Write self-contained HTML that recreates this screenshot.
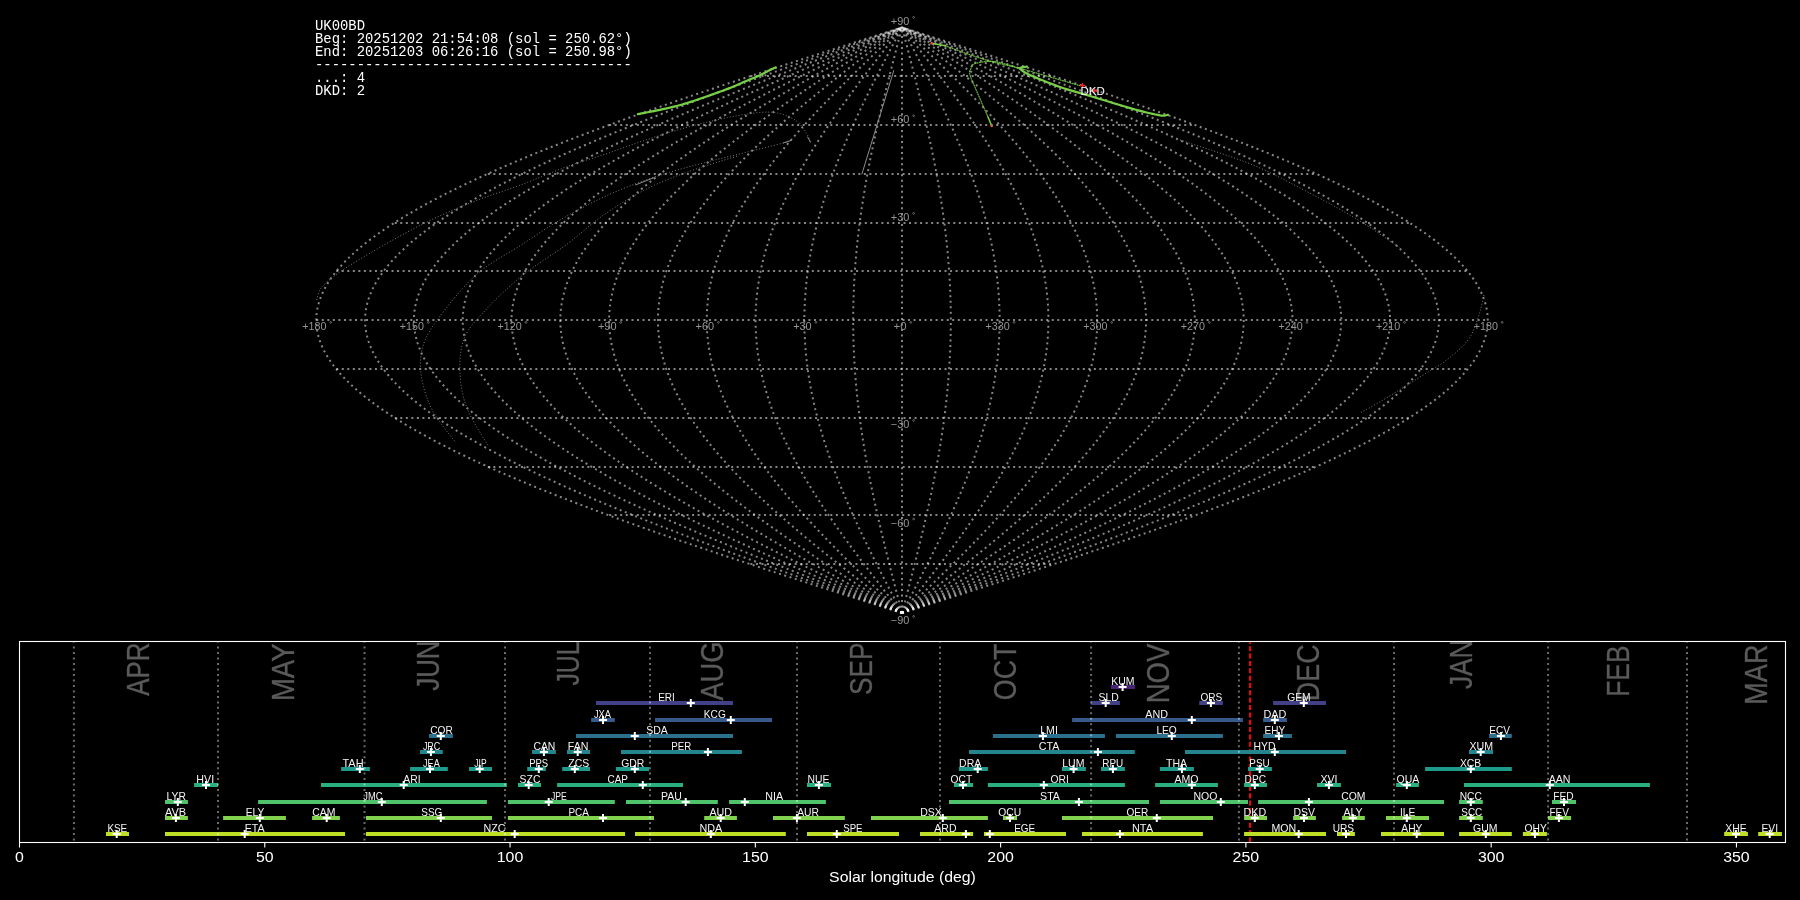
<!DOCTYPE html><html><head><meta charset="utf-8"><style>html,body{margin:0;padding:0;background:#000;width:1800px;height:900px;overflow:hidden}svg{display:block}</style></head><body>
<svg style="will-change:transform" width="1800" height="900" viewBox="0 0 1800 900">
<rect width="1800" height="900" fill="#000"/>
<g fill="none" stroke="#fff" stroke-opacity="0.52" stroke-width="2" stroke-dasharray="2 3.53">
<path d="M902 613.06 L907.11 611.43 L912.22 609.81 L917.33 608.18 L922.44 606.55 L927.55 604.92 L932.65 603.3 L937.76 601.67 L942.86 600.04 L947.96 598.42 L953.05 596.79 L958.14 595.16 L963.22 593.54 L968.31 591.91 L973.38 590.28 L978.45 588.65 L983.52 587.03 L988.57 585.4 L993.63 583.77 L998.67 582.15 L1003.71 580.52 L1008.74 578.89 L1013.76 577.27 L1018.77 575.64 L1023.78 574.01 L1028.77 572.38 L1033.76 570.76 L1038.73 569.13 L1043.7 567.5 L1048.65 565.88 L1053.6 564.25 L1058.53 562.62 L1063.45 561 L1068.35 559.37 L1073.25 557.74 L1078.13 556.12 L1083 554.49 L1087.85 552.86 L1092.69 551.23 L1097.52 549.61 L1102.33 547.98 L1107.12 546.35 L1111.9 544.73 L1116.67 543.1 L1121.41 541.47 L1126.15 539.85 L1130.86 538.22 L1135.56 536.59 L1140.23 534.96 L1144.89 533.34 L1149.54 531.71 L1154.16 530.08 L1158.76 528.46 L1163.35 526.83 L1167.91 525.2 L1172.46 523.58 L1176.98 521.95 L1181.48 520.32 L1185.96 518.69 L1190.42 517.07 L1194.86 515.44 L1199.28 513.81 L1203.67 512.19 L1208.04 510.56 L1212.38 508.93 L1216.71 507.3 L1221.01 505.68 L1225.28 504.05 L1229.53 502.42 L1233.76 500.8 L1237.96 499.17 L1242.13 497.54 L1246.28 495.92 L1250.4 494.29 L1254.5 492.66 L1258.56 491.03 L1262.61 489.41 L1266.62 487.78 L1270.61 486.15 L1274.56 484.53 L1278.49 482.9 L1282.39 481.27 L1286.27 479.65 L1290.11 478.02 L1293.92 476.39 L1297.71 474.76 L1301.46 473.14 L1305.18 471.51 L1308.88 469.88 L1312.54 468.26 L1316.17 466.63 L1319.77 465 L1323.33 463.38 L1326.87 461.75 L1330.37 460.12 L1333.84 458.5 L1337.27 456.87 L1340.68 455.24 L1344.05 453.61 L1347.38 451.99 L1350.69 450.36 L1353.96 448.73 L1357.19 447.11 L1360.39 445.48 L1363.55 443.85 L1366.68 442.23 L1369.78 440.6 L1372.84 438.97 L1375.86 437.34 L1378.84 435.72 L1381.79 434.09 L1384.71 432.46 L1387.58 430.84 L1390.42 429.21 L1393.23 427.58 L1395.99 425.95 L1398.72 424.33 L1401.41 422.7 L1404.06 421.07 L1406.67 419.45 L1409.25 417.82 L1411.78 416.19 L1414.28 414.57 L1416.74 412.94 L1419.16 411.31 L1421.54 409.69 L1423.88 408.06 L1426.18 406.43 L1428.44 404.8 L1430.66 403.18 L1432.84 401.55 L1434.98 399.92 L1437.08 398.3 L1439.14 396.67 L1441.16 395.04 L1443.13 393.41 L1445.07 391.79 L1446.96 390.16 L1448.82 388.53 L1450.63 386.91 L1452.4 385.28 L1454.12 383.65 L1455.81 382.03 L1457.45 380.4 L1459.05 378.77 L1460.61 377.14 L1462.13 375.52 L1463.6 373.89 L1465.03 372.26 L1466.42 370.64 L1467.76 369.01 L1469.06 367.38 L1470.32 365.76 L1471.54 364.13 L1472.71 362.5 L1473.84 360.88 L1474.92 359.25 L1475.96 357.62 L1476.96 355.99 L1477.91 354.37 L1478.82 352.74 L1479.69 351.11 L1480.51 349.49 L1481.29 347.86 L1482.02 346.23 L1482.71 344.61 L1483.35 342.98 L1483.95 341.35 L1484.51 339.72 L1485.02 338.1 L1485.49 336.47 L1485.91 334.84 L1486.29 333.22 L1486.63 331.59 L1486.92 329.96 L1487.16 328.33 L1487.36 326.71 L1487.52 325.08 L1487.63 323.45 L1487.7 321.83 L1487.72 320.2 L1487.7 318.57 L1487.63 316.95 L1487.52 315.32 L1487.36 313.69 L1487.16 312.06 L1486.92 310.44 L1486.63 308.81 L1486.29 307.18 L1485.91 305.56 L1485.49 303.93 L1485.02 302.3 L1484.51 300.68 L1483.95 299.05 L1483.35 297.42 L1482.71 295.79 L1482.02 294.17 L1481.29 292.54 L1480.51 290.91 L1479.69 289.29 L1478.82 287.66 L1477.91 286.03 L1476.96 284.41 L1475.96 282.78 L1474.92 281.15 L1473.84 279.52 L1472.71 277.9 L1471.54 276.27 L1470.32 274.64 L1469.06 273.02 L1467.76 271.39 L1466.42 269.76 L1465.03 268.14 L1463.6 266.51 L1462.13 264.88 L1460.61 263.25 L1459.05 261.63 L1457.45 260 L1455.81 258.37 L1454.12 256.75 L1452.4 255.12 L1450.63 253.49 L1448.82 251.87 L1446.96 250.24 L1445.07 248.61 L1443.13 246.98 L1441.16 245.36 L1439.14 243.73 L1437.08 242.1 L1434.98 240.48 L1432.84 238.85 L1430.66 237.22 L1428.44 235.6 L1426.18 233.97 L1423.88 232.34 L1421.54 230.71 L1419.16 229.09 L1416.74 227.46 L1414.28 225.83 L1411.78 224.21 L1409.25 222.58 L1406.67 220.95 L1404.06 219.33 L1401.41 217.7 L1398.72 216.07 L1395.99 214.44 L1393.23 212.82 L1390.42 211.19 L1387.58 209.56 L1384.71 207.94 L1381.79 206.31 L1378.84 204.68 L1375.86 203.06 L1372.84 201.43 L1369.78 199.8 L1366.68 198.17 L1363.55 196.55 L1360.39 194.92 L1357.19 193.29 L1353.96 191.67 L1350.69 190.04 L1347.38 188.41 L1344.05 186.79 L1340.68 185.16 L1337.27 183.53 L1333.84 181.91 L1330.37 180.28 L1326.87 178.65 L1323.33 177.02 L1319.77 175.4 L1316.17 173.77 L1312.54 172.14 L1308.88 170.52 L1305.18 168.89 L1301.46 167.26 L1297.71 165.63 L1293.92 164.01 L1290.11 162.38 L1286.27 160.75 L1282.39 159.13 L1278.49 157.5 L1274.56 155.87 L1270.61 154.25 L1266.62 152.62 L1262.61 150.99 L1258.56 149.36 L1254.5 147.74 L1250.4 146.11 L1246.28 144.48 L1242.13 142.86 L1237.96 141.23 L1233.76 139.6 L1229.53 137.98 L1225.28 136.35 L1221.01 134.72 L1216.71 133.09 L1212.38 131.47 L1208.04 129.84 L1203.67 128.21 L1199.28 126.59 L1194.86 124.96 L1190.42 123.33 L1185.96 121.71 L1181.48 120.08 L1176.98 118.45 L1172.46 116.82 L1167.91 115.2 L1163.35 113.57 L1158.76 111.94 L1154.16 110.32 L1149.54 108.69 L1144.89 107.06 L1140.23 105.44 L1135.56 103.81 L1130.86 102.18 L1126.15 100.55 L1121.41 98.93 L1116.67 97.3 L1111.9 95.67 L1107.12 94.05 L1102.33 92.42 L1097.52 90.79 L1092.69 89.17 L1087.85 87.54 L1083 85.91 L1078.13 84.28 L1073.25 82.66 L1068.35 81.03 L1063.45 79.4 L1058.53 77.78 L1053.6 76.15 L1048.65 74.52 L1043.7 72.9 L1038.73 71.27 L1033.76 69.64 L1028.77 68.01 L1023.78 66.39 L1018.77 64.76 L1013.76 63.13 L1008.74 61.51 L1003.71 59.88 L998.67 58.25 L993.63 56.63 L988.57 55 L983.52 53.37 L978.45 51.75 L973.38 50.12 L968.31 48.49 L963.22 46.86 L958.14 45.24 L953.05 43.61 L947.96 41.98 L942.86 40.36 L937.76 38.73 L932.65 37.1 L927.55 35.47 L922.44 33.85 L917.33 32.22 L912.22 30.59 L907.11 28.97 L902 27.34"/>
<path d="M902 613.06 L906.69 611.43 L911.37 609.81 L916.05 608.18 L920.74 606.55 L925.42 604.92 L930.1 603.3 L934.78 601.67 L939.45 600.04 L944.13 598.42 L948.79 596.79 L953.46 595.16 L958.12 593.54 L962.78 591.91 L967.43 590.28 L972.08 588.65 L976.72 587.03 L981.36 585.4 L985.99 583.77 L990.62 582.15 L995.23 580.52 L999.84 578.89 L1004.45 577.27 L1009.04 575.64 L1013.63 574.01 L1018.21 572.38 L1022.78 570.76 L1027.34 569.13 L1031.89 567.5 L1036.43 565.88 L1040.96 564.25 L1045.48 562.62 L1049.99 561 L1054.49 559.37 L1058.98 557.74 L1063.45 556.12 L1067.91 554.49 L1072.36 552.86 L1076.8 551.23 L1081.22 549.61 L1085.63 547.98 L1090.03 546.35 L1094.41 544.73 L1098.78 543.1 L1103.13 541.47 L1107.47 539.85 L1111.79 538.22 L1116.09 536.59 L1120.38 534.96 L1124.65 533.34 L1128.91 531.71 L1133.15 530.08 L1137.37 528.46 L1141.57 526.83 L1145.75 525.2 L1149.92 523.58 L1154.06 521.95 L1158.19 520.32 L1162.3 518.69 L1166.39 517.07 L1170.45 515.44 L1174.5 513.81 L1178.53 512.19 L1182.53 510.56 L1186.52 508.93 L1190.48 507.3 L1194.42 505.68 L1198.34 504.05 L1202.24 502.42 L1206.11 500.8 L1209.96 499.17 L1213.79 497.54 L1217.59 495.92 L1221.37 494.29 L1225.12 492.66 L1228.85 491.03 L1232.55 489.41 L1236.23 487.78 L1239.89 486.15 L1243.52 484.53 L1247.12 482.9 L1250.7 481.27 L1254.24 479.65 L1257.77 478.02 L1261.26 476.39 L1264.73 474.76 L1268.17 473.14 L1271.58 471.51 L1274.97 469.88 L1278.33 468.26 L1281.65 466.63 L1284.95 465 L1288.22 463.38 L1291.46 461.75 L1294.67 460.12 L1297.85 458.5 L1301 456.87 L1304.12 455.24 L1307.21 453.61 L1310.27 451.99 L1313.3 450.36 L1316.29 448.73 L1319.26 447.11 L1322.19 445.48 L1325.09 443.85 L1327.96 442.23 L1330.8 440.6 L1333.6 438.97 L1336.37 437.34 L1339.11 435.72 L1341.81 434.09 L1344.48 432.46 L1347.12 430.84 L1349.72 429.21 L1352.29 427.58 L1354.83 425.95 L1357.33 424.33 L1359.79 422.7 L1362.22 421.07 L1364.62 419.45 L1366.98 417.82 L1369.3 416.19 L1371.59 414.57 L1373.85 412.94 L1376.06 411.31 L1378.24 409.69 L1380.39 408.06 L1382.5 406.43 L1384.57 404.8 L1386.61 403.18 L1388.61 401.55 L1390.57 399.92 L1392.49 398.3 L1394.38 396.67 L1396.23 395.04 L1398.04 393.41 L1399.81 391.79 L1401.55 390.16 L1403.25 388.53 L1404.91 386.91 L1406.53 385.28 L1408.11 383.65 L1409.66 382.03 L1411.16 380.4 L1412.63 378.77 L1414.06 377.14 L1415.45 375.52 L1416.8 373.89 L1418.11 372.26 L1419.38 370.64 L1420.62 369.01 L1421.81 367.38 L1422.96 365.76 L1424.08 364.13 L1425.15 362.5 L1426.18 360.88 L1427.18 359.25 L1428.13 357.62 L1429.05 355.99 L1429.92 354.37 L1430.75 352.74 L1431.55 351.11 L1432.3 349.49 L1433.01 347.86 L1433.68 346.23 L1434.32 344.61 L1434.91 342.98 L1435.46 341.35 L1435.97 339.72 L1436.44 338.1 L1436.87 336.47 L1437.25 334.84 L1437.6 333.22 L1437.91 331.59 L1438.17 329.96 L1438.4 328.33 L1438.58 326.71 L1438.73 325.08 L1438.83 323.45 L1438.89 321.83 L1438.91 320.2 L1438.89 318.57 L1438.83 316.95 L1438.73 315.32 L1438.58 313.69 L1438.4 312.06 L1438.17 310.44 L1437.91 308.81 L1437.6 307.18 L1437.25 305.56 L1436.87 303.93 L1436.44 302.3 L1435.97 300.68 L1435.46 299.05 L1434.91 297.42 L1434.32 295.79 L1433.68 294.17 L1433.01 292.54 L1432.3 290.91 L1431.55 289.29 L1430.75 287.66 L1429.92 286.03 L1429.05 284.41 L1428.13 282.78 L1427.18 281.15 L1426.18 279.52 L1425.15 277.9 L1424.08 276.27 L1422.96 274.64 L1421.81 273.02 L1420.62 271.39 L1419.38 269.76 L1418.11 268.14 L1416.8 266.51 L1415.45 264.88 L1414.06 263.25 L1412.63 261.63 L1411.16 260 L1409.66 258.37 L1408.11 256.75 L1406.53 255.12 L1404.91 253.49 L1403.25 251.87 L1401.55 250.24 L1399.81 248.61 L1398.04 246.98 L1396.23 245.36 L1394.38 243.73 L1392.49 242.1 L1390.57 240.48 L1388.61 238.85 L1386.61 237.22 L1384.57 235.6 L1382.5 233.97 L1380.39 232.34 L1378.24 230.71 L1376.06 229.09 L1373.85 227.46 L1371.59 225.83 L1369.3 224.21 L1366.98 222.58 L1364.62 220.95 L1362.22 219.33 L1359.79 217.7 L1357.33 216.07 L1354.83 214.44 L1352.29 212.82 L1349.72 211.19 L1347.12 209.56 L1344.48 207.94 L1341.81 206.31 L1339.11 204.68 L1336.37 203.06 L1333.6 201.43 L1330.8 199.8 L1327.96 198.17 L1325.09 196.55 L1322.19 194.92 L1319.26 193.29 L1316.29 191.67 L1313.3 190.04 L1310.27 188.41 L1307.21 186.79 L1304.12 185.16 L1301 183.53 L1297.85 181.91 L1294.67 180.28 L1291.46 178.65 L1288.22 177.02 L1284.95 175.4 L1281.65 173.77 L1278.33 172.14 L1274.97 170.52 L1271.58 168.89 L1268.17 167.26 L1264.73 165.63 L1261.26 164.01 L1257.77 162.38 L1254.24 160.75 L1250.7 159.13 L1247.12 157.5 L1243.52 155.87 L1239.89 154.25 L1236.23 152.62 L1232.55 150.99 L1228.85 149.36 L1225.12 147.74 L1221.37 146.11 L1217.59 144.48 L1213.79 142.86 L1209.96 141.23 L1206.11 139.6 L1202.24 137.98 L1198.34 136.35 L1194.42 134.72 L1190.48 133.09 L1186.52 131.47 L1182.53 129.84 L1178.53 128.21 L1174.5 126.59 L1170.45 124.96 L1166.39 123.33 L1162.3 121.71 L1158.19 120.08 L1154.06 118.45 L1149.92 116.82 L1145.75 115.2 L1141.57 113.57 L1137.37 111.94 L1133.15 110.32 L1128.91 108.69 L1124.65 107.06 L1120.38 105.44 L1116.09 103.81 L1111.79 102.18 L1107.47 100.55 L1103.13 98.93 L1098.78 97.3 L1094.41 95.67 L1090.03 94.05 L1085.63 92.42 L1081.22 90.79 L1076.8 89.17 L1072.36 87.54 L1067.91 85.91 L1063.45 84.28 L1058.98 82.66 L1054.49 81.03 L1049.99 79.4 L1045.48 77.78 L1040.96 76.15 L1036.43 74.52 L1031.89 72.9 L1027.34 71.27 L1022.78 69.64 L1018.21 68.01 L1013.63 66.39 L1009.04 64.76 L1004.45 63.13 L999.84 61.51 L995.23 59.88 L990.62 58.25 L985.99 56.63 L981.36 55 L976.72 53.37 L972.08 51.75 L967.43 50.12 L962.78 48.49 L958.12 46.86 L953.46 45.24 L948.79 43.61 L944.13 41.98 L939.45 40.36 L934.78 38.73 L930.1 37.1 L925.42 35.47 L920.74 33.85 L916.05 32.22 L911.37 30.59 L906.69 28.97 L902 27.34"/>
<path d="M902 613.06 L906.26 611.43 L910.52 609.81 L914.78 608.18 L919.03 606.55 L923.29 604.92 L927.55 603.3 L931.8 601.67 L936.05 600.04 L940.3 598.42 L944.54 596.79 L948.78 595.16 L953.02 593.54 L957.25 591.91 L961.48 590.28 L965.71 588.65 L969.93 587.03 L974.15 585.4 L978.36 583.77 L982.56 582.15 L986.76 580.52 L990.95 578.89 L995.13 577.27 L999.31 575.64 L1003.48 574.01 L1007.64 572.38 L1011.8 570.76 L1015.94 569.13 L1020.08 567.5 L1024.21 565.88 L1028.33 564.25 L1032.44 562.62 L1036.54 561 L1040.63 559.37 L1044.71 557.74 L1048.77 556.12 L1052.83 554.49 L1056.88 552.86 L1060.91 551.23 L1064.93 549.61 L1068.94 547.98 L1072.94 546.35 L1076.92 544.73 L1080.89 543.1 L1084.85 541.47 L1088.79 539.85 L1092.72 538.22 L1096.63 536.59 L1100.53 534.96 L1104.41 533.34 L1108.28 531.71 L1112.13 530.08 L1115.97 528.46 L1119.79 526.83 L1123.59 525.2 L1127.38 523.58 L1131.15 521.95 L1134.9 520.32 L1138.64 518.69 L1142.35 517.07 L1146.05 515.44 L1149.73 513.81 L1153.39 512.19 L1157.03 510.56 L1160.65 508.93 L1164.26 507.3 L1167.84 505.68 L1171.4 504.05 L1174.94 502.42 L1178.46 500.8 L1181.96 499.17 L1185.44 497.54 L1188.9 495.92 L1192.33 494.29 L1195.75 492.66 L1199.14 491.03 L1202.5 489.41 L1205.85 487.78 L1209.17 486.15 L1212.47 484.53 L1215.74 482.9 L1219 481.27 L1222.22 479.65 L1225.42 478.02 L1228.6 476.39 L1231.76 474.76 L1234.88 473.14 L1237.99 471.51 L1241.06 469.88 L1244.11 468.26 L1247.14 466.63 L1250.14 465 L1253.11 463.38 L1256.06 461.75 L1258.97 460.12 L1261.87 458.5 L1264.73 456.87 L1267.57 455.24 L1270.37 453.61 L1273.15 451.99 L1275.91 450.36 L1278.63 448.73 L1281.32 447.11 L1283.99 445.48 L1286.63 443.85 L1289.24 442.23 L1291.81 440.6 L1294.36 438.97 L1296.88 437.34 L1299.37 435.72 L1301.83 434.09 L1304.26 432.46 L1306.65 430.84 L1309.02 429.21 L1311.36 427.58 L1313.66 425.95 L1315.93 424.33 L1318.17 422.7 L1320.38 421.07 L1322.56 419.45 L1324.71 417.82 L1326.82 416.19 L1328.9 414.57 L1330.95 412.94 L1332.97 411.31 L1334.95 409.69 L1336.9 408.06 L1338.82 406.43 L1340.7 404.8 L1342.55 403.18 L1344.37 401.55 L1346.15 399.92 L1347.9 398.3 L1349.62 396.67 L1351.3 395.04 L1352.95 393.41 L1354.56 391.79 L1356.14 390.16 L1357.68 388.53 L1359.19 386.91 L1360.66 385.28 L1362.1 383.65 L1363.51 382.03 L1364.88 380.4 L1366.21 378.77 L1367.51 377.14 L1368.77 375.52 L1370 373.89 L1371.19 372.26 L1372.35 370.64 L1373.47 369.01 L1374.55 367.38 L1375.6 365.76 L1376.61 364.13 L1377.59 362.5 L1378.53 360.88 L1379.43 359.25 L1380.3 357.62 L1381.13 355.99 L1381.93 354.37 L1382.68 352.74 L1383.41 351.11 L1384.09 349.49 L1384.74 347.86 L1385.35 346.23 L1385.92 344.61 L1386.46 342.98 L1386.96 341.35 L1387.43 339.72 L1387.85 338.1 L1388.24 336.47 L1388.6 334.84 L1388.91 333.22 L1389.19 331.59 L1389.43 329.96 L1389.64 328.33 L1389.8 326.71 L1389.93 325.08 L1390.03 323.45 L1390.08 321.83 L1390.1 320.2 L1390.08 318.57 L1390.03 316.95 L1389.93 315.32 L1389.8 313.69 L1389.64 312.06 L1389.43 310.44 L1389.19 308.81 L1388.91 307.18 L1388.6 305.56 L1388.24 303.93 L1387.85 302.3 L1387.43 300.68 L1386.96 299.05 L1386.46 297.42 L1385.92 295.79 L1385.35 294.17 L1384.74 292.54 L1384.09 290.91 L1383.41 289.29 L1382.68 287.66 L1381.93 286.03 L1381.13 284.41 L1380.3 282.78 L1379.43 281.15 L1378.53 279.52 L1377.59 277.9 L1376.61 276.27 L1375.6 274.64 L1374.55 273.02 L1373.47 271.39 L1372.35 269.76 L1371.19 268.14 L1370 266.51 L1368.77 264.88 L1367.51 263.25 L1366.21 261.63 L1364.88 260 L1363.51 258.37 L1362.1 256.75 L1360.66 255.12 L1359.19 253.49 L1357.68 251.87 L1356.14 250.24 L1354.56 248.61 L1352.95 246.98 L1351.3 245.36 L1349.62 243.73 L1347.9 242.1 L1346.15 240.48 L1344.37 238.85 L1342.55 237.22 L1340.7 235.6 L1338.82 233.97 L1336.9 232.34 L1334.95 230.71 L1332.97 229.09 L1330.95 227.46 L1328.9 225.83 L1326.82 224.21 L1324.71 222.58 L1322.56 220.95 L1320.38 219.33 L1318.17 217.7 L1315.93 216.07 L1313.66 214.44 L1311.36 212.82 L1309.02 211.19 L1306.65 209.56 L1304.26 207.94 L1301.83 206.31 L1299.37 204.68 L1296.88 203.06 L1294.36 201.43 L1291.81 199.8 L1289.24 198.17 L1286.63 196.55 L1283.99 194.92 L1281.32 193.29 L1278.63 191.67 L1275.91 190.04 L1273.15 188.41 L1270.37 186.79 L1267.57 185.16 L1264.73 183.53 L1261.87 181.91 L1258.97 180.28 L1256.06 178.65 L1253.11 177.02 L1250.14 175.4 L1247.14 173.77 L1244.11 172.14 L1241.06 170.52 L1237.99 168.89 L1234.88 167.26 L1231.76 165.63 L1228.6 164.01 L1225.42 162.38 L1222.22 160.75 L1219 159.13 L1215.74 157.5 L1212.47 155.87 L1209.17 154.25 L1205.85 152.62 L1202.5 150.99 L1199.14 149.36 L1195.75 147.74 L1192.33 146.11 L1188.9 144.48 L1185.44 142.86 L1181.96 141.23 L1178.46 139.6 L1174.94 137.98 L1171.4 136.35 L1167.84 134.72 L1164.26 133.09 L1160.65 131.47 L1157.03 129.84 L1153.39 128.21 L1149.73 126.59 L1146.05 124.96 L1142.35 123.33 L1138.64 121.71 L1134.9 120.08 L1131.15 118.45 L1127.38 116.82 L1123.59 115.2 L1119.79 113.57 L1115.97 111.94 L1112.13 110.32 L1108.28 108.69 L1104.41 107.06 L1100.53 105.44 L1096.63 103.81 L1092.72 102.18 L1088.79 100.55 L1084.85 98.93 L1080.89 97.3 L1076.92 95.67 L1072.94 94.05 L1068.94 92.42 L1064.93 90.79 L1060.91 89.17 L1056.88 87.54 L1052.83 85.91 L1048.77 84.28 L1044.71 82.66 L1040.63 81.03 L1036.54 79.4 L1032.44 77.78 L1028.33 76.15 L1024.21 74.52 L1020.08 72.9 L1015.94 71.27 L1011.8 69.64 L1007.64 68.01 L1003.48 66.39 L999.31 64.76 L995.13 63.13 L990.95 61.51 L986.76 59.88 L982.56 58.25 L978.36 56.63 L974.15 55 L969.93 53.37 L965.71 51.75 L961.48 50.12 L957.25 48.49 L953.02 46.86 L948.78 45.24 L944.54 43.61 L940.3 41.98 L936.05 40.36 L931.8 38.73 L927.55 37.1 L923.29 35.47 L919.03 33.85 L914.78 32.22 L910.52 30.59 L906.26 28.97 L902 27.34"/>
<path d="M902 613.06 L905.83 611.43 L909.67 609.81 L913.5 608.18 L917.33 606.55 L921.16 604.92 L924.99 603.3 L928.82 601.67 L932.64 600.04 L936.47 598.42 L940.29 596.79 L944.1 595.16 L947.92 593.54 L951.73 591.91 L955.54 590.28 L959.34 588.65 L963.14 587.03 L966.93 585.4 L970.72 583.77 L974.5 582.15 L978.28 580.52 L982.05 578.89 L985.82 577.27 L989.58 575.64 L993.33 574.01 L997.08 572.38 L1000.82 570.76 L1004.55 569.13 L1008.27 567.5 L1011.99 565.88 L1015.7 564.25 L1019.4 562.62 L1023.08 561 L1026.77 559.37 L1030.44 557.74 L1034.1 556.12 L1037.75 554.49 L1041.39 552.86 L1045.02 551.23 L1048.64 549.61 L1052.25 547.98 L1055.84 546.35 L1059.43 544.73 L1063 543.1 L1066.56 541.47 L1070.11 539.85 L1073.64 538.22 L1077.17 536.59 L1080.68 534.96 L1084.17 533.34 L1087.65 531.71 L1091.12 530.08 L1094.57 528.46 L1098.01 526.83 L1101.43 525.2 L1104.84 523.58 L1108.23 521.95 L1111.61 520.32 L1114.97 518.69 L1118.32 517.07 L1121.64 515.44 L1124.96 513.81 L1128.25 512.19 L1131.53 510.56 L1134.79 508.93 L1138.03 507.3 L1141.25 505.68 L1144.46 504.05 L1147.65 502.42 L1150.82 500.8 L1153.97 499.17 L1157.1 497.54 L1160.21 495.92 L1163.3 494.29 L1166.37 492.66 L1169.42 491.03 L1172.45 489.41 L1175.46 487.78 L1178.45 486.15 L1181.42 484.53 L1184.37 482.9 L1187.3 481.27 L1190.2 479.65 L1193.08 478.02 L1195.94 476.39 L1198.78 474.76 L1201.6 473.14 L1204.39 471.51 L1207.16 469.88 L1209.9 468.26 L1212.62 466.63 L1215.32 465 L1218 463.38 L1220.65 461.75 L1223.28 460.12 L1225.88 458.5 L1228.46 456.87 L1231.01 455.24 L1233.54 453.61 L1236.04 451.99 L1238.52 450.36 L1240.97 448.73 L1243.39 447.11 L1245.79 445.48 L1248.17 443.85 L1250.51 442.23 L1252.83 440.6 L1255.13 438.97 L1257.39 437.34 L1259.63 435.72 L1261.85 434.09 L1264.03 432.46 L1266.19 430.84 L1268.32 429.21 L1270.42 427.58 L1272.49 425.95 L1274.54 424.33 L1276.56 422.7 L1278.55 421.07 L1280.51 419.45 L1282.44 417.82 L1284.34 416.19 L1286.21 414.57 L1288.06 412.94 L1289.87 411.31 L1291.65 409.69 L1293.41 408.06 L1295.14 406.43 L1296.83 404.8 L1298.5 403.18 L1300.13 401.55 L1301.74 399.92 L1303.31 398.3 L1304.86 396.67 L1306.37 395.04 L1307.85 393.41 L1309.3 391.79 L1310.72 390.16 L1312.11 388.53 L1313.47 386.91 L1314.8 385.28 L1316.09 383.65 L1317.36 382.03 L1318.59 380.4 L1319.79 378.77 L1320.96 377.14 L1322.1 375.52 L1323.2 373.89 L1324.27 372.26 L1325.31 370.64 L1326.32 369.01 L1327.3 367.38 L1328.24 365.76 L1329.15 364.13 L1330.03 362.5 L1330.88 360.88 L1331.69 359.25 L1332.47 357.62 L1333.22 355.99 L1333.93 354.37 L1334.62 352.74 L1335.27 351.11 L1335.88 349.49 L1336.46 347.86 L1337.01 346.23 L1337.53 344.61 L1338.02 342.98 L1338.47 341.35 L1338.88 339.72 L1339.27 338.1 L1339.62 336.47 L1339.94 334.84 L1340.22 333.22 L1340.47 331.59 L1340.69 329.96 L1340.87 328.33 L1341.02 326.71 L1341.14 325.08 L1341.22 323.45 L1341.27 321.83 L1341.29 320.2 L1341.27 318.57 L1341.22 316.95 L1341.14 315.32 L1341.02 313.69 L1340.87 312.06 L1340.69 310.44 L1340.47 308.81 L1340.22 307.18 L1339.94 305.56 L1339.62 303.93 L1339.27 302.3 L1338.88 300.68 L1338.47 299.05 L1338.02 297.42 L1337.53 295.79 L1337.01 294.17 L1336.46 292.54 L1335.88 290.91 L1335.27 289.29 L1334.62 287.66 L1333.93 286.03 L1333.22 284.41 L1332.47 282.78 L1331.69 281.15 L1330.88 279.52 L1330.03 277.9 L1329.15 276.27 L1328.24 274.64 L1327.3 273.02 L1326.32 271.39 L1325.31 269.76 L1324.27 268.14 L1323.2 266.51 L1322.1 264.88 L1320.96 263.25 L1319.79 261.63 L1318.59 260 L1317.36 258.37 L1316.09 256.75 L1314.8 255.12 L1313.47 253.49 L1312.11 251.87 L1310.72 250.24 L1309.3 248.61 L1307.85 246.98 L1306.37 245.36 L1304.86 243.73 L1303.31 242.1 L1301.74 240.48 L1300.13 238.85 L1298.5 237.22 L1296.83 235.6 L1295.14 233.97 L1293.41 232.34 L1291.65 230.71 L1289.87 229.09 L1288.06 227.46 L1286.21 225.83 L1284.34 224.21 L1282.44 222.58 L1280.51 220.95 L1278.55 219.33 L1276.56 217.7 L1274.54 216.07 L1272.49 214.44 L1270.42 212.82 L1268.32 211.19 L1266.19 209.56 L1264.03 207.94 L1261.85 206.31 L1259.63 204.68 L1257.39 203.06 L1255.13 201.43 L1252.83 199.8 L1250.51 198.17 L1248.17 196.55 L1245.79 194.92 L1243.39 193.29 L1240.97 191.67 L1238.52 190.04 L1236.04 188.41 L1233.54 186.79 L1231.01 185.16 L1228.46 183.53 L1225.88 181.91 L1223.28 180.28 L1220.65 178.65 L1218 177.02 L1215.32 175.4 L1212.62 173.77 L1209.9 172.14 L1207.16 170.52 L1204.39 168.89 L1201.6 167.26 L1198.78 165.63 L1195.94 164.01 L1193.08 162.38 L1190.2 160.75 L1187.3 159.13 L1184.37 157.5 L1181.42 155.87 L1178.45 154.25 L1175.46 152.62 L1172.45 150.99 L1169.42 149.36 L1166.37 147.74 L1163.3 146.11 L1160.21 144.48 L1157.1 142.86 L1153.97 141.23 L1150.82 139.6 L1147.65 137.98 L1144.46 136.35 L1141.25 134.72 L1138.03 133.09 L1134.79 131.47 L1131.53 129.84 L1128.25 128.21 L1124.96 126.59 L1121.64 124.96 L1118.32 123.33 L1114.97 121.71 L1111.61 120.08 L1108.23 118.45 L1104.84 116.82 L1101.43 115.2 L1098.01 113.57 L1094.57 111.94 L1091.12 110.32 L1087.65 108.69 L1084.17 107.06 L1080.68 105.44 L1077.17 103.81 L1073.64 102.18 L1070.11 100.55 L1066.56 98.93 L1063 97.3 L1059.43 95.67 L1055.84 94.05 L1052.25 92.42 L1048.64 90.79 L1045.02 89.17 L1041.39 87.54 L1037.75 85.91 L1034.1 84.28 L1030.44 82.66 L1026.77 81.03 L1023.08 79.4 L1019.4 77.78 L1015.7 76.15 L1011.99 74.52 L1008.27 72.9 L1004.55 71.27 L1000.82 69.64 L997.08 68.01 L993.33 66.39 L989.58 64.76 L985.82 63.13 L982.05 61.51 L978.28 59.88 L974.5 58.25 L970.72 56.63 L966.93 55 L963.14 53.37 L959.34 51.75 L955.54 50.12 L951.73 48.49 L947.92 46.86 L944.1 45.24 L940.29 43.61 L936.47 41.98 L932.64 40.36 L928.82 38.73 L924.99 37.1 L921.16 35.47 L917.33 33.85 L913.5 32.22 L909.67 30.59 L905.83 28.97 L902 27.34"/>
<path d="M902 613.06 L905.41 611.43 L908.81 609.81 L912.22 608.18 L915.63 606.55 L919.03 604.92 L922.44 603.3 L925.84 601.67 L929.24 600.04 L932.64 598.42 L936.03 596.79 L939.43 595.16 L942.82 593.54 L946.2 591.91 L949.59 590.28 L952.97 588.65 L956.34 587.03 L959.72 585.4 L963.08 583.77 L966.45 582.15 L969.81 580.52 L973.16 578.89 L976.51 577.27 L979.85 575.64 L983.19 574.01 L986.52 572.38 L989.84 570.76 L993.16 569.13 L996.47 567.5 L999.77 565.88 L1003.06 564.25 L1006.35 562.62 L1009.63 561 L1012.9 559.37 L1016.17 557.74 L1019.42 556.12 L1022.66 554.49 L1025.9 552.86 L1029.13 551.23 L1032.34 549.61 L1035.55 547.98 L1038.75 546.35 L1041.94 544.73 L1045.11 543.1 L1048.28 541.47 L1051.43 539.85 L1054.57 538.22 L1057.7 536.59 L1060.82 534.96 L1063.93 533.34 L1067.02 531.71 L1070.11 530.08 L1073.18 528.46 L1076.23 526.83 L1079.27 525.2 L1082.3 523.58 L1085.32 521.95 L1088.32 520.32 L1091.31 518.69 L1094.28 517.07 L1097.24 515.44 L1100.18 513.81 L1103.11 512.19 L1106.03 510.56 L1108.92 508.93 L1111.8 507.3 L1114.67 505.68 L1117.52 504.05 L1120.35 502.42 L1123.17 500.8 L1125.97 499.17 L1128.75 497.54 L1131.52 495.92 L1134.27 494.29 L1137 492.66 L1139.71 491.03 L1142.4 489.41 L1145.08 487.78 L1147.74 486.15 L1150.38 484.53 L1153 482.9 L1155.6 481.27 L1158.18 479.65 L1160.74 478.02 L1163.28 476.39 L1165.8 474.76 L1168.31 473.14 L1170.79 471.51 L1173.25 469.88 L1175.69 468.26 L1178.11 466.63 L1180.51 465 L1182.89 463.38 L1185.24 461.75 L1187.58 460.12 L1189.89 458.5 L1192.18 456.87 L1194.45 455.24 L1196.7 453.61 L1198.92 451.99 L1201.13 450.36 L1203.3 448.73 L1205.46 447.11 L1207.59 445.48 L1209.7 443.85 L1211.79 442.23 L1213.85 440.6 L1215.89 438.97 L1217.9 437.34 L1219.9 435.72 L1221.86 434.09 L1223.8 432.46 L1225.72 430.84 L1227.62 429.21 L1229.48 427.58 L1231.33 425.95 L1233.15 424.33 L1234.94 422.7 L1236.71 421.07 L1238.45 419.45 L1240.17 417.82 L1241.86 416.19 L1243.52 414.57 L1245.16 412.94 L1246.77 411.31 L1248.36 409.69 L1249.92 408.06 L1251.45 406.43 L1252.96 404.8 L1254.44 403.18 L1255.9 401.55 L1257.32 399.92 L1258.72 398.3 L1260.09 396.67 L1261.44 395.04 L1262.76 393.41 L1264.05 391.79 L1265.31 390.16 L1266.54 388.53 L1267.75 386.91 L1268.93 385.28 L1270.08 383.65 L1271.21 382.03 L1272.3 380.4 L1273.37 378.77 L1274.41 377.14 L1275.42 375.52 L1276.4 373.89 L1277.35 372.26 L1278.28 370.64 L1279.17 369.01 L1280.04 367.38 L1280.88 365.76 L1281.69 364.13 L1282.47 362.5 L1283.22 360.88 L1283.95 359.25 L1284.64 357.62 L1285.31 355.99 L1285.94 354.37 L1286.55 352.74 L1287.12 351.11 L1287.67 349.49 L1288.19 347.86 L1288.68 346.23 L1289.14 344.61 L1289.57 342.98 L1289.97 341.35 L1290.34 339.72 L1290.68 338.1 L1290.99 336.47 L1291.28 334.84 L1291.53 333.22 L1291.75 331.59 L1291.94 329.96 L1292.11 328.33 L1292.24 326.71 L1292.35 325.08 L1292.42 323.45 L1292.47 321.83 L1292.48 320.2 L1292.47 318.57 L1292.42 316.95 L1292.35 315.32 L1292.24 313.69 L1292.11 312.06 L1291.94 310.44 L1291.75 308.81 L1291.53 307.18 L1291.28 305.56 L1290.99 303.93 L1290.68 302.3 L1290.34 300.68 L1289.97 299.05 L1289.57 297.42 L1289.14 295.79 L1288.68 294.17 L1288.19 292.54 L1287.67 290.91 L1287.12 289.29 L1286.55 287.66 L1285.94 286.03 L1285.31 284.41 L1284.64 282.78 L1283.95 281.15 L1283.22 279.52 L1282.47 277.9 L1281.69 276.27 L1280.88 274.64 L1280.04 273.02 L1279.17 271.39 L1278.28 269.76 L1277.35 268.14 L1276.4 266.51 L1275.42 264.88 L1274.41 263.25 L1273.37 261.63 L1272.3 260 L1271.21 258.37 L1270.08 256.75 L1268.93 255.12 L1267.75 253.49 L1266.54 251.87 L1265.31 250.24 L1264.05 248.61 L1262.76 246.98 L1261.44 245.36 L1260.09 243.73 L1258.72 242.1 L1257.32 240.48 L1255.9 238.85 L1254.44 237.22 L1252.96 235.6 L1251.45 233.97 L1249.92 232.34 L1248.36 230.71 L1246.77 229.09 L1245.16 227.46 L1243.52 225.83 L1241.86 224.21 L1240.17 222.58 L1238.45 220.95 L1236.71 219.33 L1234.94 217.7 L1233.15 216.07 L1231.33 214.44 L1229.48 212.82 L1227.62 211.19 L1225.72 209.56 L1223.8 207.94 L1221.86 206.31 L1219.9 204.68 L1217.9 203.06 L1215.89 201.43 L1213.85 199.8 L1211.79 198.17 L1209.7 196.55 L1207.59 194.92 L1205.46 193.29 L1203.3 191.67 L1201.13 190.04 L1198.92 188.41 L1196.7 186.79 L1194.45 185.16 L1192.18 183.53 L1189.89 181.91 L1187.58 180.28 L1185.24 178.65 L1182.89 177.02 L1180.51 175.4 L1178.11 173.77 L1175.69 172.14 L1173.25 170.52 L1170.79 168.89 L1168.31 167.26 L1165.8 165.63 L1163.28 164.01 L1160.74 162.38 L1158.18 160.75 L1155.6 159.13 L1153 157.5 L1150.38 155.87 L1147.74 154.25 L1145.08 152.62 L1142.4 150.99 L1139.71 149.36 L1137 147.74 L1134.27 146.11 L1131.52 144.48 L1128.75 142.86 L1125.97 141.23 L1123.17 139.6 L1120.35 137.98 L1117.52 136.35 L1114.67 134.72 L1111.8 133.09 L1108.92 131.47 L1106.03 129.84 L1103.11 128.21 L1100.18 126.59 L1097.24 124.96 L1094.28 123.33 L1091.31 121.71 L1088.32 120.08 L1085.32 118.45 L1082.3 116.82 L1079.27 115.2 L1076.23 113.57 L1073.18 111.94 L1070.11 110.32 L1067.02 108.69 L1063.93 107.06 L1060.82 105.44 L1057.7 103.81 L1054.57 102.18 L1051.43 100.55 L1048.28 98.93 L1045.11 97.3 L1041.94 95.67 L1038.75 94.05 L1035.55 92.42 L1032.34 90.79 L1029.13 89.17 L1025.9 87.54 L1022.66 85.91 L1019.42 84.28 L1016.17 82.66 L1012.9 81.03 L1009.63 79.4 L1006.35 77.78 L1003.06 76.15 L999.77 74.52 L996.47 72.9 L993.16 71.27 L989.84 69.64 L986.52 68.01 L983.19 66.39 L979.85 64.76 L976.51 63.13 L973.16 61.51 L969.81 59.88 L966.45 58.25 L963.08 56.63 L959.72 55 L956.34 53.37 L952.97 51.75 L949.59 50.12 L946.2 48.49 L942.82 46.86 L939.43 45.24 L936.03 43.61 L932.64 41.98 L929.24 40.36 L925.84 38.73 L922.44 37.1 L919.03 35.47 L915.63 33.85 L912.22 32.22 L908.81 30.59 L905.41 28.97 L902 27.34"/>
<path d="M902 613.06 L904.98 611.43 L907.96 609.81 L910.94 608.18 L913.92 606.55 L916.9 604.92 L919.88 603.3 L922.86 601.67 L925.83 600.04 L928.81 598.42 L931.78 596.79 L934.75 595.16 L937.71 593.54 L940.68 591.91 L943.64 590.28 L946.6 588.65 L949.55 587.03 L952.5 585.4 L955.45 583.77 L958.39 582.15 L961.33 580.52 L964.26 578.89 L967.19 577.27 L970.12 575.64 L973.04 574.01 L975.95 572.38 L978.86 570.76 L981.76 569.13 L984.66 567.5 L987.55 565.88 L990.43 564.25 L993.31 562.62 L996.18 561 L999.04 559.37 L1001.89 557.74 L1004.74 556.12 L1007.58 554.49 L1010.41 552.86 L1013.24 551.23 L1016.05 549.61 L1018.86 547.98 L1021.66 546.35 L1024.44 544.73 L1027.22 543.1 L1029.99 541.47 L1032.75 539.85 L1035.5 538.22 L1038.24 536.59 L1040.97 534.96 L1043.69 533.34 L1046.4 531.71 L1049.09 530.08 L1051.78 528.46 L1054.45 526.83 L1057.11 525.2 L1059.77 523.58 L1062.4 521.95 L1065.03 520.32 L1067.64 518.69 L1070.25 517.07 L1072.84 515.44 L1075.41 513.81 L1077.97 512.19 L1080.52 510.56 L1083.06 508.93 L1085.58 507.3 L1088.09 505.68 L1090.58 504.05 L1093.06 502.42 L1095.52 500.8 L1097.97 499.17 L1100.41 497.54 L1102.83 495.92 L1105.23 494.29 L1107.62 492.66 L1110 491.03 L1112.35 489.41 L1114.69 487.78 L1117.02 486.15 L1119.33 484.53 L1121.62 482.9 L1123.9 481.27 L1126.16 479.65 L1128.4 478.02 L1130.62 476.39 L1132.83 474.76 L1135.02 473.14 L1137.19 471.51 L1139.34 469.88 L1141.48 468.26 L1143.6 466.63 L1145.7 465 L1147.78 463.38 L1149.84 461.75 L1151.88 460.12 L1153.91 458.5 L1155.91 456.87 L1157.9 455.24 L1159.86 453.61 L1161.81 451.99 L1163.73 450.36 L1165.64 448.73 L1167.53 447.11 L1169.39 445.48 L1171.24 443.85 L1173.07 442.23 L1174.87 440.6 L1176.65 438.97 L1178.42 437.34 L1180.16 435.72 L1181.88 434.09 L1183.58 432.46 L1185.26 430.84 L1186.91 429.21 L1188.55 427.58 L1190.16 425.95 L1191.75 424.33 L1193.32 422.7 L1194.87 421.07 L1196.39 419.45 L1197.89 417.82 L1199.37 416.19 L1200.83 414.57 L1202.27 412.94 L1203.68 411.31 L1205.06 409.69 L1206.43 408.06 L1207.77 406.43 L1209.09 404.8 L1210.39 403.18 L1211.66 401.55 L1212.91 399.92 L1214.13 398.3 L1215.33 396.67 L1216.51 395.04 L1217.66 393.41 L1218.79 391.79 L1219.9 390.16 L1220.98 388.53 L1222.03 386.91 L1223.06 385.28 L1224.07 383.65 L1225.06 382.03 L1226.01 380.4 L1226.95 378.77 L1227.86 377.14 L1228.74 375.52 L1229.6 373.89 L1230.43 372.26 L1231.24 370.64 L1232.03 369.01 L1232.79 367.38 L1233.52 365.76 L1234.23 364.13 L1234.91 362.5 L1235.57 360.88 L1236.2 359.25 L1236.81 357.62 L1237.39 355.99 L1237.95 354.37 L1238.48 352.74 L1238.98 351.11 L1239.46 349.49 L1239.92 347.86 L1240.34 346.23 L1240.75 344.61 L1241.12 342.98 L1241.47 341.35 L1241.8 339.72 L1242.1 338.1 L1242.37 336.47 L1242.62 334.84 L1242.84 333.22 L1243.03 331.59 L1243.2 329.96 L1243.34 328.33 L1243.46 326.71 L1243.55 325.08 L1243.62 323.45 L1243.66 321.83 L1243.67 320.2 L1243.66 318.57 L1243.62 316.95 L1243.55 315.32 L1243.46 313.69 L1243.34 312.06 L1243.2 310.44 L1243.03 308.81 L1242.84 307.18 L1242.62 305.56 L1242.37 303.93 L1242.1 302.3 L1241.8 300.68 L1241.47 299.05 L1241.12 297.42 L1240.75 295.79 L1240.34 294.17 L1239.92 292.54 L1239.46 290.91 L1238.98 289.29 L1238.48 287.66 L1237.95 286.03 L1237.39 284.41 L1236.81 282.78 L1236.2 281.15 L1235.57 279.52 L1234.91 277.9 L1234.23 276.27 L1233.52 274.64 L1232.79 273.02 L1232.03 271.39 L1231.24 269.76 L1230.43 268.14 L1229.6 266.51 L1228.74 264.88 L1227.86 263.25 L1226.95 261.63 L1226.01 260 L1225.06 258.37 L1224.07 256.75 L1223.06 255.12 L1222.03 253.49 L1220.98 251.87 L1219.9 250.24 L1218.79 248.61 L1217.66 246.98 L1216.51 245.36 L1215.33 243.73 L1214.13 242.1 L1212.91 240.48 L1211.66 238.85 L1210.39 237.22 L1209.09 235.6 L1207.77 233.97 L1206.43 232.34 L1205.06 230.71 L1203.68 229.09 L1202.27 227.46 L1200.83 225.83 L1199.37 224.21 L1197.89 222.58 L1196.39 220.95 L1194.87 219.33 L1193.32 217.7 L1191.75 216.07 L1190.16 214.44 L1188.55 212.82 L1186.91 211.19 L1185.26 209.56 L1183.58 207.94 L1181.88 206.31 L1180.16 204.68 L1178.42 203.06 L1176.65 201.43 L1174.87 199.8 L1173.07 198.17 L1171.24 196.55 L1169.39 194.92 L1167.53 193.29 L1165.64 191.67 L1163.73 190.04 L1161.81 188.41 L1159.86 186.79 L1157.9 185.16 L1155.91 183.53 L1153.91 181.91 L1151.88 180.28 L1149.84 178.65 L1147.78 177.02 L1145.7 175.4 L1143.6 173.77 L1141.48 172.14 L1139.34 170.52 L1137.19 168.89 L1135.02 167.26 L1132.83 165.63 L1130.62 164.01 L1128.4 162.38 L1126.16 160.75 L1123.9 159.13 L1121.62 157.5 L1119.33 155.87 L1117.02 154.25 L1114.69 152.62 L1112.35 150.99 L1110 149.36 L1107.62 147.74 L1105.23 146.11 L1102.83 144.48 L1100.41 142.86 L1097.97 141.23 L1095.52 139.6 L1093.06 137.98 L1090.58 136.35 L1088.09 134.72 L1085.58 133.09 L1083.06 131.47 L1080.52 129.84 L1077.97 128.21 L1075.41 126.59 L1072.84 124.96 L1070.25 123.33 L1067.64 121.71 L1065.03 120.08 L1062.4 118.45 L1059.77 116.82 L1057.11 115.2 L1054.45 113.57 L1051.78 111.94 L1049.09 110.32 L1046.4 108.69 L1043.69 107.06 L1040.97 105.44 L1038.24 103.81 L1035.5 102.18 L1032.75 100.55 L1029.99 98.93 L1027.22 97.3 L1024.44 95.67 L1021.66 94.05 L1018.86 92.42 L1016.05 90.79 L1013.24 89.17 L1010.41 87.54 L1007.58 85.91 L1004.74 84.28 L1001.89 82.66 L999.04 81.03 L996.18 79.4 L993.31 77.78 L990.43 76.15 L987.55 74.52 L984.66 72.9 L981.76 71.27 L978.86 69.64 L975.95 68.01 L973.04 66.39 L970.12 64.76 L967.19 63.13 L964.26 61.51 L961.33 59.88 L958.39 58.25 L955.45 56.63 L952.5 55 L949.55 53.37 L946.6 51.75 L943.64 50.12 L940.68 48.49 L937.71 46.86 L934.75 45.24 L931.78 43.61 L928.81 41.98 L925.83 40.36 L922.86 38.73 L919.88 37.1 L916.9 35.47 L913.92 33.85 L910.94 32.22 L907.96 30.59 L904.98 28.97 L902 27.34"/>
<path d="M902 613.06 L904.56 611.43 L907.11 609.81 L909.67 608.18 L912.22 606.55 L914.77 604.92 L917.33 603.3 L919.88 601.67 L922.43 600.04 L924.98 598.42 L927.52 596.79 L930.07 595.16 L932.61 593.54 L935.15 591.91 L937.69 590.28 L940.23 588.65 L942.76 587.03 L945.29 585.4 L947.81 583.77 L950.34 582.15 L952.85 580.52 L955.37 578.89 L957.88 577.27 L960.39 575.64 L962.89 574.01 L965.39 572.38 L967.88 570.76 L970.37 569.13 L972.85 567.5 L975.33 565.88 L977.8 564.25 L980.26 562.62 L982.72 561 L985.18 559.37 L987.62 557.74 L990.06 556.12 L992.5 554.49 L994.93 552.86 L997.35 551.23 L999.76 549.61 L1002.16 547.98 L1004.56 546.35 L1006.95 544.73 L1009.33 543.1 L1011.71 541.47 L1014.07 539.85 L1016.43 538.22 L1018.78 536.59 L1021.12 534.96 L1023.45 533.34 L1025.77 531.71 L1028.08 530.08 L1030.38 528.46 L1032.67 526.83 L1034.96 525.2 L1037.23 523.58 L1039.49 521.95 L1041.74 520.32 L1043.98 518.69 L1046.21 517.07 L1048.43 515.44 L1050.64 513.81 L1052.83 512.19 L1055.02 510.56 L1057.19 508.93 L1059.35 507.3 L1061.5 505.68 L1063.64 504.05 L1065.77 502.42 L1067.88 500.8 L1069.98 499.17 L1072.06 497.54 L1074.14 495.92 L1076.2 494.29 L1078.25 492.66 L1080.28 491.03 L1082.3 489.41 L1084.31 487.78 L1086.3 486.15 L1088.28 484.53 L1090.25 482.9 L1092.2 481.27 L1094.13 479.65 L1096.05 478.02 L1097.96 476.39 L1099.85 474.76 L1101.73 473.14 L1103.59 471.51 L1105.44 469.88 L1107.27 468.26 L1109.08 466.63 L1110.88 465 L1112.67 463.38 L1114.43 461.75 L1116.18 460.12 L1117.92 458.5 L1119.64 456.87 L1121.34 455.24 L1123.02 453.61 L1124.69 451.99 L1126.34 450.36 L1127.98 448.73 L1129.59 447.11 L1131.19 445.48 L1132.78 443.85 L1134.34 442.23 L1135.89 440.6 L1137.42 438.97 L1138.93 437.34 L1140.42 435.72 L1141.9 434.09 L1143.35 432.46 L1144.79 430.84 L1146.21 429.21 L1147.61 427.58 L1149 425.95 L1150.36 424.33 L1151.7 422.7 L1153.03 421.07 L1154.34 419.45 L1155.62 417.82 L1156.89 416.19 L1158.14 414.57 L1159.37 412.94 L1160.58 411.31 L1161.77 409.69 L1162.94 408.06 L1164.09 406.43 L1165.22 404.8 L1166.33 403.18 L1167.42 401.55 L1168.49 399.92 L1169.54 398.3 L1170.57 396.67 L1171.58 395.04 L1172.57 393.41 L1173.54 391.79 L1174.48 390.16 L1175.41 388.53 L1176.31 386.91 L1177.2 385.28 L1178.06 383.65 L1178.9 382.03 L1179.73 380.4 L1180.53 378.77 L1181.31 377.14 L1182.06 375.52 L1182.8 373.89 L1183.52 372.26 L1184.21 370.64 L1184.88 369.01 L1185.53 367.38 L1186.16 365.76 L1186.77 364.13 L1187.35 362.5 L1187.92 360.88 L1188.46 359.25 L1188.98 357.62 L1189.48 355.99 L1189.96 354.37 L1190.41 352.74 L1190.84 351.11 L1191.25 349.49 L1191.64 347.86 L1192.01 346.23 L1192.35 344.61 L1192.68 342.98 L1192.98 341.35 L1193.26 339.72 L1193.51 338.1 L1193.75 336.47 L1193.96 334.84 L1194.15 333.22 L1194.31 331.59 L1194.46 329.96 L1194.58 328.33 L1194.68 326.71 L1194.76 325.08 L1194.82 323.45 L1194.85 321.83 L1194.86 320.2 L1194.85 318.57 L1194.82 316.95 L1194.76 315.32 L1194.68 313.69 L1194.58 312.06 L1194.46 310.44 L1194.31 308.81 L1194.15 307.18 L1193.96 305.56 L1193.75 303.93 L1193.51 302.3 L1193.26 300.68 L1192.98 299.05 L1192.68 297.42 L1192.35 295.79 L1192.01 294.17 L1191.64 292.54 L1191.25 290.91 L1190.84 289.29 L1190.41 287.66 L1189.96 286.03 L1189.48 284.41 L1188.98 282.78 L1188.46 281.15 L1187.92 279.52 L1187.35 277.9 L1186.77 276.27 L1186.16 274.64 L1185.53 273.02 L1184.88 271.39 L1184.21 269.76 L1183.52 268.14 L1182.8 266.51 L1182.06 264.88 L1181.31 263.25 L1180.53 261.63 L1179.73 260 L1178.9 258.37 L1178.06 256.75 L1177.2 255.12 L1176.31 253.49 L1175.41 251.87 L1174.48 250.24 L1173.54 248.61 L1172.57 246.98 L1171.58 245.36 L1170.57 243.73 L1169.54 242.1 L1168.49 240.48 L1167.42 238.85 L1166.33 237.22 L1165.22 235.6 L1164.09 233.97 L1162.94 232.34 L1161.77 230.71 L1160.58 229.09 L1159.37 227.46 L1158.14 225.83 L1156.89 224.21 L1155.62 222.58 L1154.34 220.95 L1153.03 219.33 L1151.7 217.7 L1150.36 216.07 L1149 214.44 L1147.61 212.82 L1146.21 211.19 L1144.79 209.56 L1143.35 207.94 L1141.9 206.31 L1140.42 204.68 L1138.93 203.06 L1137.42 201.43 L1135.89 199.8 L1134.34 198.17 L1132.78 196.55 L1131.19 194.92 L1129.59 193.29 L1127.98 191.67 L1126.34 190.04 L1124.69 188.41 L1123.02 186.79 L1121.34 185.16 L1119.64 183.53 L1117.92 181.91 L1116.18 180.28 L1114.43 178.65 L1112.67 177.02 L1110.88 175.4 L1109.08 173.77 L1107.27 172.14 L1105.44 170.52 L1103.59 168.89 L1101.73 167.26 L1099.85 165.63 L1097.96 164.01 L1096.05 162.38 L1094.13 160.75 L1092.2 159.13 L1090.25 157.5 L1088.28 155.87 L1086.3 154.25 L1084.31 152.62 L1082.3 150.99 L1080.28 149.36 L1078.25 147.74 L1076.2 146.11 L1074.14 144.48 L1072.06 142.86 L1069.98 141.23 L1067.88 139.6 L1065.77 137.98 L1063.64 136.35 L1061.5 134.72 L1059.35 133.09 L1057.19 131.47 L1055.02 129.84 L1052.83 128.21 L1050.64 126.59 L1048.43 124.96 L1046.21 123.33 L1043.98 121.71 L1041.74 120.08 L1039.49 118.45 L1037.23 116.82 L1034.96 115.2 L1032.67 113.57 L1030.38 111.94 L1028.08 110.32 L1025.77 108.69 L1023.45 107.06 L1021.12 105.44 L1018.78 103.81 L1016.43 102.18 L1014.07 100.55 L1011.71 98.93 L1009.33 97.3 L1006.95 95.67 L1004.56 94.05 L1002.16 92.42 L999.76 90.79 L997.35 89.17 L994.93 87.54 L992.5 85.91 L990.06 84.28 L987.62 82.66 L985.18 81.03 L982.72 79.4 L980.26 77.78 L977.8 76.15 L975.33 74.52 L972.85 72.9 L970.37 71.27 L967.88 69.64 L965.39 68.01 L962.89 66.39 L960.39 64.76 L957.88 63.13 L955.37 61.51 L952.85 59.88 L950.34 58.25 L947.81 56.63 L945.29 55 L942.76 53.37 L940.23 51.75 L937.69 50.12 L935.15 48.49 L932.61 46.86 L930.07 45.24 L927.52 43.61 L924.98 41.98 L922.43 40.36 L919.88 38.73 L917.33 37.1 L914.77 35.47 L912.22 33.85 L909.67 32.22 L907.11 30.59 L904.56 28.97 L902 27.34"/>
<path d="M902 613.06 L904.13 611.43 L906.26 609.81 L908.39 608.18 L910.52 606.55 L912.65 604.92 L914.77 603.3 L916.9 601.67 L919.02 600.04 L921.15 598.42 L923.27 596.79 L925.39 595.16 L927.51 593.54 L929.63 591.91 L931.74 590.28 L933.85 588.65 L935.97 587.03 L938.07 585.4 L940.18 583.77 L942.28 582.15 L944.38 580.52 L946.47 578.89 L948.57 577.27 L950.66 575.64 L952.74 574.01 L954.82 572.38 L956.9 570.76 L958.97 569.13 L961.04 567.5 L963.11 565.88 L965.16 564.25 L967.22 562.62 L969.27 561 L971.31 559.37 L973.35 557.74 L975.39 556.12 L977.42 554.49 L979.44 552.86 L981.45 551.23 L983.47 549.61 L985.47 547.98 L987.47 546.35 L989.46 544.73 L991.44 543.1 L993.42 541.47 L995.39 539.85 L997.36 538.22 L999.31 536.59 L1001.26 534.96 L1003.21 533.34 L1005.14 531.71 L1007.07 530.08 L1008.98 528.46 L1010.89 526.83 L1012.8 525.2 L1014.69 523.58 L1016.57 521.95 L1018.45 520.32 L1020.32 518.69 L1022.18 517.07 L1024.03 515.44 L1025.86 513.81 L1027.7 512.19 L1029.52 510.56 L1031.33 508.93 L1033.13 507.3 L1034.92 505.68 L1036.7 504.05 L1038.47 502.42 L1040.23 500.8 L1041.98 499.17 L1043.72 497.54 L1045.45 495.92 L1047.17 494.29 L1048.87 492.66 L1050.57 491.03 L1052.25 489.41 L1053.92 487.78 L1055.59 486.15 L1057.23 484.53 L1058.87 482.9 L1060.5 481.27 L1062.11 479.65 L1063.71 478.02 L1065.3 476.39 L1066.88 474.76 L1068.44 473.14 L1069.99 471.51 L1071.53 469.88 L1073.06 468.26 L1074.57 466.63 L1076.07 465 L1077.55 463.38 L1079.03 461.75 L1080.49 460.12 L1081.93 458.5 L1083.36 456.87 L1084.78 455.24 L1086.19 453.61 L1087.58 451.99 L1088.95 450.36 L1090.31 448.73 L1091.66 447.11 L1093 445.48 L1094.31 443.85 L1095.62 442.23 L1096.91 440.6 L1098.18 438.97 L1099.44 437.34 L1100.68 435.72 L1101.91 434.09 L1103.13 432.46 L1104.33 430.84 L1105.51 429.21 L1106.68 427.58 L1107.83 425.95 L1108.97 424.33 L1110.09 422.7 L1111.19 421.07 L1112.28 419.45 L1113.35 417.82 L1114.41 416.19 L1115.45 414.57 L1116.48 412.94 L1117.48 411.31 L1118.47 409.69 L1119.45 408.06 L1120.41 406.43 L1121.35 404.8 L1122.28 403.18 L1123.18 401.55 L1124.08 399.92 L1124.95 398.3 L1125.81 396.67 L1126.65 395.04 L1127.47 393.41 L1128.28 391.79 L1129.07 390.16 L1129.84 388.53 L1130.59 386.91 L1131.33 385.28 L1132.05 383.65 L1132.75 382.03 L1133.44 380.4 L1134.11 378.77 L1134.75 377.14 L1135.39 375.52 L1136 373.89 L1136.6 372.26 L1137.17 370.64 L1137.73 369.01 L1138.28 367.38 L1138.8 365.76 L1139.31 364.13 L1139.8 362.5 L1140.27 360.88 L1140.72 359.25 L1141.15 357.62 L1141.57 355.99 L1141.96 354.37 L1142.34 352.74 L1142.7 351.11 L1143.05 349.49 L1143.37 347.86 L1143.67 346.23 L1143.96 344.61 L1144.23 342.98 L1144.48 341.35 L1144.71 339.72 L1144.93 338.1 L1145.12 336.47 L1145.3 334.84 L1145.46 333.22 L1145.59 331.59 L1145.72 329.96 L1145.82 328.33 L1145.9 326.71 L1145.97 325.08 L1146.01 323.45 L1146.04 321.83 L1146.05 320.2 L1146.04 318.57 L1146.01 316.95 L1145.97 315.32 L1145.9 313.69 L1145.82 312.06 L1145.72 310.44 L1145.59 308.81 L1145.46 307.18 L1145.3 305.56 L1145.12 303.93 L1144.93 302.3 L1144.71 300.68 L1144.48 299.05 L1144.23 297.42 L1143.96 295.79 L1143.67 294.17 L1143.37 292.54 L1143.05 290.91 L1142.7 289.29 L1142.34 287.66 L1141.96 286.03 L1141.57 284.41 L1141.15 282.78 L1140.72 281.15 L1140.27 279.52 L1139.8 277.9 L1139.31 276.27 L1138.8 274.64 L1138.28 273.02 L1137.73 271.39 L1137.17 269.76 L1136.6 268.14 L1136 266.51 L1135.39 264.88 L1134.75 263.25 L1134.11 261.63 L1133.44 260 L1132.75 258.37 L1132.05 256.75 L1131.33 255.12 L1130.59 253.49 L1129.84 251.87 L1129.07 250.24 L1128.28 248.61 L1127.47 246.98 L1126.65 245.36 L1125.81 243.73 L1124.95 242.1 L1124.08 240.48 L1123.18 238.85 L1122.28 237.22 L1121.35 235.6 L1120.41 233.97 L1119.45 232.34 L1118.47 230.71 L1117.48 229.09 L1116.48 227.46 L1115.45 225.83 L1114.41 224.21 L1113.35 222.58 L1112.28 220.95 L1111.19 219.33 L1110.09 217.7 L1108.97 216.07 L1107.83 214.44 L1106.68 212.82 L1105.51 211.19 L1104.33 209.56 L1103.13 207.94 L1101.91 206.31 L1100.68 204.68 L1099.44 203.06 L1098.18 201.43 L1096.91 199.8 L1095.62 198.17 L1094.31 196.55 L1093 194.92 L1091.66 193.29 L1090.31 191.67 L1088.95 190.04 L1087.58 188.41 L1086.19 186.79 L1084.78 185.16 L1083.36 183.53 L1081.93 181.91 L1080.49 180.28 L1079.03 178.65 L1077.55 177.02 L1076.07 175.4 L1074.57 173.77 L1073.06 172.14 L1071.53 170.52 L1069.99 168.89 L1068.44 167.26 L1066.88 165.63 L1065.3 164.01 L1063.71 162.38 L1062.11 160.75 L1060.5 159.13 L1058.87 157.5 L1057.23 155.87 L1055.59 154.25 L1053.92 152.62 L1052.25 150.99 L1050.57 149.36 L1048.87 147.74 L1047.17 146.11 L1045.45 144.48 L1043.72 142.86 L1041.98 141.23 L1040.23 139.6 L1038.47 137.98 L1036.7 136.35 L1034.92 134.72 L1033.13 133.09 L1031.33 131.47 L1029.52 129.84 L1027.7 128.21 L1025.86 126.59 L1024.03 124.96 L1022.18 123.33 L1020.32 121.71 L1018.45 120.08 L1016.57 118.45 L1014.69 116.82 L1012.8 115.2 L1010.89 113.57 L1008.98 111.94 L1007.07 110.32 L1005.14 108.69 L1003.21 107.06 L1001.26 105.44 L999.31 103.81 L997.36 102.18 L995.39 100.55 L993.42 98.93 L991.44 97.3 L989.46 95.67 L987.47 94.05 L985.47 92.42 L983.47 90.79 L981.45 89.17 L979.44 87.54 L977.42 85.91 L975.39 84.28 L973.35 82.66 L971.31 81.03 L969.27 79.4 L967.22 77.78 L965.16 76.15 L963.11 74.52 L961.04 72.9 L958.97 71.27 L956.9 69.64 L954.82 68.01 L952.74 66.39 L950.66 64.76 L948.57 63.13 L946.47 61.51 L944.38 59.88 L942.28 58.25 L940.18 56.63 L938.07 55 L935.97 53.37 L933.85 51.75 L931.74 50.12 L929.63 48.49 L927.51 46.86 L925.39 45.24 L923.27 43.61 L921.15 41.98 L919.02 40.36 L916.9 38.73 L914.77 37.1 L912.65 35.47 L910.52 33.85 L908.39 32.22 L906.26 30.59 L904.13 28.97 L902 27.34"/>
<path d="M902 613.06 L903.7 611.43 L905.41 609.81 L907.11 608.18 L908.81 606.55 L910.52 604.92 L912.22 603.3 L913.92 601.67 L915.62 600.04 L917.32 598.42 L919.02 596.79 L920.71 595.16 L922.41 593.54 L924.1 591.91 L925.79 590.28 L927.48 588.65 L929.17 587.03 L930.86 585.4 L932.54 583.77 L934.22 582.15 L935.9 580.52 L937.58 578.89 L939.25 577.27 L940.92 575.64 L942.59 574.01 L944.26 572.38 L945.92 570.76 L947.58 569.13 L949.23 567.5 L950.88 565.88 L952.53 564.25 L954.18 562.62 L955.82 561 L957.45 559.37 L959.08 557.74 L960.71 556.12 L962.33 554.49 L963.95 552.86 L965.56 551.23 L967.17 549.61 L968.78 547.98 L970.37 546.35 L971.97 544.73 L973.56 543.1 L975.14 541.47 L976.72 539.85 L978.29 538.22 L979.85 536.59 L981.41 534.96 L982.96 533.34 L984.51 531.71 L986.05 530.08 L987.59 528.46 L989.12 526.83 L990.64 525.2 L992.15 523.58 L993.66 521.95 L995.16 520.32 L996.65 518.69 L998.14 517.07 L999.62 515.44 L1001.09 513.81 L1002.56 512.19 L1004.01 510.56 L1005.46 508.93 L1006.9 507.3 L1008.34 505.68 L1009.76 504.05 L1011.18 502.42 L1012.59 500.8 L1013.99 499.17 L1015.38 497.54 L1016.76 495.92 L1018.13 494.29 L1019.5 492.66 L1020.85 491.03 L1022.2 489.41 L1023.54 487.78 L1024.87 486.15 L1026.19 484.53 L1027.5 482.9 L1028.8 481.27 L1030.09 479.65 L1031.37 478.02 L1032.64 476.39 L1033.9 474.76 L1035.15 473.14 L1036.39 471.51 L1037.63 469.88 L1038.85 468.26 L1040.06 466.63 L1041.26 465 L1042.44 463.38 L1043.62 461.75 L1044.79 460.12 L1045.95 458.5 L1047.09 456.87 L1048.23 455.24 L1049.35 453.61 L1050.46 451.99 L1051.56 450.36 L1052.65 448.73 L1053.73 447.11 L1054.8 445.48 L1055.85 443.85 L1056.89 442.23 L1057.93 440.6 L1058.95 438.97 L1059.95 437.34 L1060.95 435.72 L1061.93 434.09 L1062.9 432.46 L1063.86 430.84 L1064.81 429.21 L1065.74 427.58 L1066.66 425.95 L1067.57 424.33 L1068.47 422.7 L1069.35 421.07 L1070.22 419.45 L1071.08 417.82 L1071.93 416.19 L1072.76 414.57 L1073.58 412.94 L1074.39 411.31 L1075.18 409.69 L1075.96 408.06 L1076.73 406.43 L1077.48 404.8 L1078.22 403.18 L1078.95 401.55 L1079.66 399.92 L1080.36 398.3 L1081.05 396.67 L1081.72 395.04 L1082.38 393.41 L1083.02 391.79 L1083.65 390.16 L1084.27 388.53 L1084.88 386.91 L1085.47 385.28 L1086.04 383.65 L1086.6 382.03 L1087.15 380.4 L1087.68 378.77 L1088.2 377.14 L1088.71 375.52 L1089.2 373.89 L1089.68 372.26 L1090.14 370.64 L1090.59 369.01 L1091.02 367.38 L1091.44 365.76 L1091.85 364.13 L1092.24 362.5 L1092.61 360.88 L1092.97 359.25 L1093.32 357.62 L1093.65 355.99 L1093.97 354.37 L1094.27 352.74 L1094.56 351.11 L1094.84 349.49 L1095.1 347.86 L1095.34 346.23 L1095.57 344.61 L1095.78 342.98 L1095.98 341.35 L1096.17 339.72 L1096.34 338.1 L1096.5 336.47 L1096.64 334.84 L1096.76 333.22 L1096.88 331.59 L1096.97 329.96 L1097.05 328.33 L1097.12 326.71 L1097.17 325.08 L1097.21 323.45 L1097.23 321.83 L1097.24 320.2 L1097.23 318.57 L1097.21 316.95 L1097.17 315.32 L1097.12 313.69 L1097.05 312.06 L1096.97 310.44 L1096.88 308.81 L1096.76 307.18 L1096.64 305.56 L1096.5 303.93 L1096.34 302.3 L1096.17 300.68 L1095.98 299.05 L1095.78 297.42 L1095.57 295.79 L1095.34 294.17 L1095.1 292.54 L1094.84 290.91 L1094.56 289.29 L1094.27 287.66 L1093.97 286.03 L1093.65 284.41 L1093.32 282.78 L1092.97 281.15 L1092.61 279.52 L1092.24 277.9 L1091.85 276.27 L1091.44 274.64 L1091.02 273.02 L1090.59 271.39 L1090.14 269.76 L1089.68 268.14 L1089.2 266.51 L1088.71 264.88 L1088.2 263.25 L1087.68 261.63 L1087.15 260 L1086.6 258.37 L1086.04 256.75 L1085.47 255.12 L1084.88 253.49 L1084.27 251.87 L1083.65 250.24 L1083.02 248.61 L1082.38 246.98 L1081.72 245.36 L1081.05 243.73 L1080.36 242.1 L1079.66 240.48 L1078.95 238.85 L1078.22 237.22 L1077.48 235.6 L1076.73 233.97 L1075.96 232.34 L1075.18 230.71 L1074.39 229.09 L1073.58 227.46 L1072.76 225.83 L1071.93 224.21 L1071.08 222.58 L1070.22 220.95 L1069.35 219.33 L1068.47 217.7 L1067.57 216.07 L1066.66 214.44 L1065.74 212.82 L1064.81 211.19 L1063.86 209.56 L1062.9 207.94 L1061.93 206.31 L1060.95 204.68 L1059.95 203.06 L1058.95 201.43 L1057.93 199.8 L1056.89 198.17 L1055.85 196.55 L1054.8 194.92 L1053.73 193.29 L1052.65 191.67 L1051.56 190.04 L1050.46 188.41 L1049.35 186.79 L1048.23 185.16 L1047.09 183.53 L1045.95 181.91 L1044.79 180.28 L1043.62 178.65 L1042.44 177.02 L1041.26 175.4 L1040.06 173.77 L1038.85 172.14 L1037.63 170.52 L1036.39 168.89 L1035.15 167.26 L1033.9 165.63 L1032.64 164.01 L1031.37 162.38 L1030.09 160.75 L1028.8 159.13 L1027.5 157.5 L1026.19 155.87 L1024.87 154.25 L1023.54 152.62 L1022.2 150.99 L1020.85 149.36 L1019.5 147.74 L1018.13 146.11 L1016.76 144.48 L1015.38 142.86 L1013.99 141.23 L1012.59 139.6 L1011.18 137.98 L1009.76 136.35 L1008.34 134.72 L1006.9 133.09 L1005.46 131.47 L1004.01 129.84 L1002.56 128.21 L1001.09 126.59 L999.62 124.96 L998.14 123.33 L996.65 121.71 L995.16 120.08 L993.66 118.45 L992.15 116.82 L990.64 115.2 L989.12 113.57 L987.59 111.94 L986.05 110.32 L984.51 108.69 L982.96 107.06 L981.41 105.44 L979.85 103.81 L978.29 102.18 L976.72 100.55 L975.14 98.93 L973.56 97.3 L971.97 95.67 L970.37 94.05 L968.78 92.42 L967.17 90.79 L965.56 89.17 L963.95 87.54 L962.33 85.91 L960.71 84.28 L959.08 82.66 L957.45 81.03 L955.82 79.4 L954.18 77.78 L952.53 76.15 L950.88 74.52 L949.23 72.9 L947.58 71.27 L945.92 69.64 L944.26 68.01 L942.59 66.39 L940.92 64.76 L939.25 63.13 L937.58 61.51 L935.9 59.88 L934.22 58.25 L932.54 56.63 L930.86 55 L929.17 53.37 L927.48 51.75 L925.79 50.12 L924.1 48.49 L922.41 46.86 L920.71 45.24 L919.02 43.61 L917.32 41.98 L915.62 40.36 L913.92 38.73 L912.22 37.1 L910.52 35.47 L908.81 33.85 L907.11 32.22 L905.41 30.59 L903.7 28.97 L902 27.34"/>
<path d="M902 613.06 L903.28 611.43 L904.56 609.81 L905.83 608.18 L907.11 606.55 L908.39 604.92 L909.66 603.3 L910.94 601.67 L912.21 600.04 L913.49 598.42 L914.76 596.79 L916.03 595.16 L917.31 593.54 L918.58 591.91 L919.85 590.28 L921.11 588.65 L922.38 587.03 L923.64 585.4 L924.91 583.77 L926.17 582.15 L927.43 580.52 L928.68 578.89 L929.94 577.27 L931.19 575.64 L932.44 574.01 L933.69 572.38 L934.94 570.76 L936.18 569.13 L937.42 567.5 L938.66 565.88 L939.9 564.25 L941.13 562.62 L942.36 561 L943.59 559.37 L944.81 557.74 L946.03 556.12 L947.25 554.49 L948.46 552.86 L949.67 551.23 L950.88 549.61 L952.08 547.98 L953.28 546.35 L954.48 544.73 L955.67 543.1 L956.85 541.47 L958.04 539.85 L959.21 538.22 L960.39 536.59 L961.56 534.96 L962.72 533.34 L963.88 531.71 L965.04 530.08 L966.19 528.46 L967.34 526.83 L968.48 525.2 L969.61 523.58 L970.74 521.95 L971.87 520.32 L972.99 518.69 L974.11 517.07 L975.22 515.44 L976.32 513.81 L977.42 512.19 L978.51 510.56 L979.6 508.93 L980.68 507.3 L981.75 505.68 L982.82 504.05 L983.88 502.42 L984.94 500.8 L985.99 499.17 L987.03 497.54 L988.07 495.92 L989.1 494.29 L990.12 492.66 L991.14 491.03 L992.15 489.41 L993.15 487.78 L994.15 486.15 L995.14 484.53 L996.12 482.9 L997.1 481.27 L998.07 479.65 L999.03 478.02 L999.98 476.39 L1000.93 474.76 L1001.87 473.14 L1002.8 471.51 L1003.72 469.88 L1004.63 468.26 L1005.54 466.63 L1006.44 465 L1007.33 463.38 L1008.22 461.75 L1009.09 460.12 L1009.96 458.5 L1010.82 456.87 L1011.67 455.24 L1012.51 453.61 L1013.35 451.99 L1014.17 450.36 L1014.99 448.73 L1015.8 447.11 L1016.6 445.48 L1017.39 443.85 L1018.17 442.23 L1018.94 440.6 L1019.71 438.97 L1020.46 437.34 L1021.21 435.72 L1021.95 434.09 L1022.68 432.46 L1023.4 430.84 L1024.11 429.21 L1024.81 427.58 L1025.5 425.95 L1026.18 424.33 L1026.85 422.7 L1027.52 421.07 L1028.17 419.45 L1028.81 417.82 L1029.45 416.19 L1030.07 414.57 L1030.69 412.94 L1031.29 411.31 L1031.88 409.69 L1032.47 408.06 L1033.05 406.43 L1033.61 404.8 L1034.17 403.18 L1034.71 401.55 L1035.25 399.92 L1035.77 398.3 L1036.29 396.67 L1036.79 395.04 L1037.28 393.41 L1037.77 391.79 L1038.24 390.16 L1038.7 388.53 L1039.16 386.91 L1039.6 385.28 L1040.03 383.65 L1040.45 382.03 L1040.86 380.4 L1041.26 378.77 L1041.65 377.14 L1042.03 375.52 L1042.4 373.89 L1042.76 372.26 L1043.1 370.64 L1043.44 369.01 L1043.77 367.38 L1044.08 365.76 L1044.38 364.13 L1044.68 362.5 L1044.96 360.88 L1045.23 359.25 L1045.49 357.62 L1045.74 355.99 L1045.98 354.37 L1046.21 352.74 L1046.42 351.11 L1046.63 349.49 L1046.82 347.86 L1047 346.23 L1047.18 344.61 L1047.34 342.98 L1047.49 341.35 L1047.63 339.72 L1047.76 338.1 L1047.87 336.47 L1047.98 334.84 L1048.07 333.22 L1048.16 331.59 L1048.23 329.96 L1048.29 328.33 L1048.34 326.71 L1048.38 325.08 L1048.41 323.45 L1048.42 321.83 L1048.43 320.2 L1048.42 318.57 L1048.41 316.95 L1048.38 315.32 L1048.34 313.69 L1048.29 312.06 L1048.23 310.44 L1048.16 308.81 L1048.07 307.18 L1047.98 305.56 L1047.87 303.93 L1047.76 302.3 L1047.63 300.68 L1047.49 299.05 L1047.34 297.42 L1047.18 295.79 L1047 294.17 L1046.82 292.54 L1046.63 290.91 L1046.42 289.29 L1046.21 287.66 L1045.98 286.03 L1045.74 284.41 L1045.49 282.78 L1045.23 281.15 L1044.96 279.52 L1044.68 277.9 L1044.38 276.27 L1044.08 274.64 L1043.77 273.02 L1043.44 271.39 L1043.1 269.76 L1042.76 268.14 L1042.4 266.51 L1042.03 264.88 L1041.65 263.25 L1041.26 261.63 L1040.86 260 L1040.45 258.37 L1040.03 256.75 L1039.6 255.12 L1039.16 253.49 L1038.7 251.87 L1038.24 250.24 L1037.77 248.61 L1037.28 246.98 L1036.79 245.36 L1036.29 243.73 L1035.77 242.1 L1035.25 240.48 L1034.71 238.85 L1034.17 237.22 L1033.61 235.6 L1033.05 233.97 L1032.47 232.34 L1031.88 230.71 L1031.29 229.09 L1030.69 227.46 L1030.07 225.83 L1029.45 224.21 L1028.81 222.58 L1028.17 220.95 L1027.52 219.33 L1026.85 217.7 L1026.18 216.07 L1025.5 214.44 L1024.81 212.82 L1024.11 211.19 L1023.4 209.56 L1022.68 207.94 L1021.95 206.31 L1021.21 204.68 L1020.46 203.06 L1019.71 201.43 L1018.94 199.8 L1018.17 198.17 L1017.39 196.55 L1016.6 194.92 L1015.8 193.29 L1014.99 191.67 L1014.17 190.04 L1013.35 188.41 L1012.51 186.79 L1011.67 185.16 L1010.82 183.53 L1009.96 181.91 L1009.09 180.28 L1008.22 178.65 L1007.33 177.02 L1006.44 175.4 L1005.54 173.77 L1004.63 172.14 L1003.72 170.52 L1002.8 168.89 L1001.87 167.26 L1000.93 165.63 L999.98 164.01 L999.03 162.38 L998.07 160.75 L997.1 159.13 L996.12 157.5 L995.14 155.87 L994.15 154.25 L993.15 152.62 L992.15 150.99 L991.14 149.36 L990.12 147.74 L989.1 146.11 L988.07 144.48 L987.03 142.86 L985.99 141.23 L984.94 139.6 L983.88 137.98 L982.82 136.35 L981.75 134.72 L980.68 133.09 L979.6 131.47 L978.51 129.84 L977.42 128.21 L976.32 126.59 L975.22 124.96 L974.11 123.33 L972.99 121.71 L971.87 120.08 L970.74 118.45 L969.61 116.82 L968.48 115.2 L967.34 113.57 L966.19 111.94 L965.04 110.32 L963.88 108.69 L962.72 107.06 L961.56 105.44 L960.39 103.81 L959.21 102.18 L958.04 100.55 L956.85 98.93 L955.67 97.3 L954.48 95.67 L953.28 94.05 L952.08 92.42 L950.88 90.79 L949.67 89.17 L948.46 87.54 L947.25 85.91 L946.03 84.28 L944.81 82.66 L943.59 81.03 L942.36 79.4 L941.13 77.78 L939.9 76.15 L938.66 74.52 L937.42 72.9 L936.18 71.27 L934.94 69.64 L933.69 68.01 L932.44 66.39 L931.19 64.76 L929.94 63.13 L928.68 61.51 L927.43 59.88 L926.17 58.25 L924.91 56.63 L923.64 55 L922.38 53.37 L921.11 51.75 L919.85 50.12 L918.58 48.49 L917.31 46.86 L916.03 45.24 L914.76 43.61 L913.49 41.98 L912.21 40.36 L910.94 38.73 L909.66 37.1 L908.39 35.47 L907.11 33.85 L905.83 32.22 L904.56 30.59 L903.28 28.97 L902 27.34"/>
<path d="M902 613.06 L902.85 611.43 L903.7 609.81 L904.56 608.18 L905.41 606.55 L906.26 604.92 L907.11 603.3 L907.96 601.67 L908.81 600.04 L909.66 598.42 L910.51 596.79 L911.36 595.16 L912.2 593.54 L913.05 591.91 L913.9 590.28 L914.74 588.65 L915.59 587.03 L916.43 585.4 L917.27 583.77 L918.11 582.15 L918.95 580.52 L919.79 578.89 L920.63 577.27 L921.46 575.64 L922.3 574.01 L923.13 572.38 L923.96 570.76 L924.79 569.13 L925.62 567.5 L926.44 565.88 L927.27 564.25 L928.09 562.62 L928.91 561 L929.73 559.37 L930.54 557.74 L931.35 556.12 L932.17 554.49 L932.98 552.86 L933.78 551.23 L934.59 549.61 L935.39 547.98 L936.19 546.35 L936.98 544.73 L937.78 543.1 L938.57 541.47 L939.36 539.85 L940.14 538.22 L940.93 536.59 L941.71 534.96 L942.48 533.34 L943.26 531.71 L944.03 530.08 L944.79 528.46 L945.56 526.83 L946.32 525.2 L947.08 523.58 L947.83 521.95 L948.58 520.32 L949.33 518.69 L950.07 517.07 L950.81 515.44 L951.55 513.81 L952.28 512.19 L953.01 510.56 L953.73 508.93 L954.45 507.3 L955.17 505.68 L955.88 504.05 L956.59 502.42 L957.29 500.8 L957.99 499.17 L958.69 497.54 L959.38 495.92 L960.07 494.29 L960.75 492.66 L961.43 491.03 L962.1 489.41 L962.77 487.78 L963.43 486.15 L964.09 484.53 L964.75 482.9 L965.4 481.27 L966.04 479.65 L966.68 478.02 L967.32 476.39 L967.95 474.76 L968.58 473.14 L969.2 471.51 L969.81 469.88 L970.42 468.26 L971.03 466.63 L971.63 465 L972.22 463.38 L972.81 461.75 L973.39 460.12 L973.97 458.5 L974.55 456.87 L975.11 455.24 L975.67 453.61 L976.23 451.99 L976.78 450.36 L977.33 448.73 L977.86 447.11 L978.4 445.48 L978.93 443.85 L979.45 442.23 L979.96 440.6 L980.47 438.97 L980.98 437.34 L981.47 435.72 L981.97 434.09 L982.45 432.46 L982.93 430.84 L983.4 429.21 L983.87 427.58 L984.33 425.95 L984.79 424.33 L985.23 422.7 L985.68 421.07 L986.11 419.45 L986.54 417.82 L986.96 416.19 L987.38 414.57 L987.79 412.94 L988.19 411.31 L988.59 409.69 L988.98 408.06 L989.36 406.43 L989.74 404.8 L990.11 403.18 L990.47 401.55 L990.83 399.92 L991.18 398.3 L991.52 396.67 L991.86 395.04 L992.19 393.41 L992.51 391.79 L992.83 390.16 L993.14 388.53 L993.44 386.91 L993.73 385.28 L994.02 383.65 L994.3 382.03 L994.58 380.4 L994.84 378.77 L995.1 377.14 L995.35 375.52 L995.6 373.89 L995.84 372.26 L996.07 370.64 L996.29 369.01 L996.51 367.38 L996.72 365.76 L996.92 364.13 L997.12 362.5 L997.31 360.88 L997.49 359.25 L997.66 357.62 L997.83 355.99 L997.99 354.37 L998.14 352.74 L998.28 351.11 L998.42 349.49 L998.55 347.86 L998.67 346.23 L998.78 344.61 L998.89 342.98 L998.99 341.35 L999.09 339.72 L999.17 338.1 L999.25 336.47 L999.32 334.84 L999.38 333.22 L999.44 331.59 L999.49 329.96 L999.53 328.33 L999.56 326.71 L999.59 325.08 L999.61 323.45 L999.62 321.83 L999.62 320.2 L999.62 318.57 L999.61 316.95 L999.59 315.32 L999.56 313.69 L999.53 312.06 L999.49 310.44 L999.44 308.81 L999.38 307.18 L999.32 305.56 L999.25 303.93 L999.17 302.3 L999.09 300.68 L998.99 299.05 L998.89 297.42 L998.78 295.79 L998.67 294.17 L998.55 292.54 L998.42 290.91 L998.28 289.29 L998.14 287.66 L997.99 286.03 L997.83 284.41 L997.66 282.78 L997.49 281.15 L997.31 279.52 L997.12 277.9 L996.92 276.27 L996.72 274.64 L996.51 273.02 L996.29 271.39 L996.07 269.76 L995.84 268.14 L995.6 266.51 L995.35 264.88 L995.1 263.25 L994.84 261.63 L994.58 260 L994.3 258.37 L994.02 256.75 L993.73 255.12 L993.44 253.49 L993.14 251.87 L992.83 250.24 L992.51 248.61 L992.19 246.98 L991.86 245.36 L991.52 243.73 L991.18 242.1 L990.83 240.48 L990.47 238.85 L990.11 237.22 L989.74 235.6 L989.36 233.97 L988.98 232.34 L988.59 230.71 L988.19 229.09 L987.79 227.46 L987.38 225.83 L986.96 224.21 L986.54 222.58 L986.11 220.95 L985.68 219.33 L985.23 217.7 L984.79 216.07 L984.33 214.44 L983.87 212.82 L983.4 211.19 L982.93 209.56 L982.45 207.94 L981.97 206.31 L981.47 204.68 L980.98 203.06 L980.47 201.43 L979.96 199.8 L979.45 198.17 L978.93 196.55 L978.4 194.92 L977.86 193.29 L977.33 191.67 L976.78 190.04 L976.23 188.41 L975.67 186.79 L975.11 185.16 L974.55 183.53 L973.97 181.91 L973.39 180.28 L972.81 178.65 L972.22 177.02 L971.63 175.4 L971.03 173.77 L970.42 172.14 L969.81 170.52 L969.2 168.89 L968.58 167.26 L967.95 165.63 L967.32 164.01 L966.68 162.38 L966.04 160.75 L965.4 159.13 L964.75 157.5 L964.09 155.87 L963.43 154.25 L962.77 152.62 L962.1 150.99 L961.43 149.36 L960.75 147.74 L960.07 146.11 L959.38 144.48 L958.69 142.86 L957.99 141.23 L957.29 139.6 L956.59 137.98 L955.88 136.35 L955.17 134.72 L954.45 133.09 L953.73 131.47 L953.01 129.84 L952.28 128.21 L951.55 126.59 L950.81 124.96 L950.07 123.33 L949.33 121.71 L948.58 120.08 L947.83 118.45 L947.08 116.82 L946.32 115.2 L945.56 113.57 L944.79 111.94 L944.03 110.32 L943.26 108.69 L942.48 107.06 L941.71 105.44 L940.93 103.81 L940.14 102.18 L939.36 100.55 L938.57 98.93 L937.78 97.3 L936.98 95.67 L936.19 94.05 L935.39 92.42 L934.59 90.79 L933.78 89.17 L932.98 87.54 L932.17 85.91 L931.35 84.28 L930.54 82.66 L929.73 81.03 L928.91 79.4 L928.09 77.78 L927.27 76.15 L926.44 74.52 L925.62 72.9 L924.79 71.27 L923.96 69.64 L923.13 68.01 L922.3 66.39 L921.46 64.76 L920.63 63.13 L919.79 61.51 L918.95 59.88 L918.11 58.25 L917.27 56.63 L916.43 55 L915.59 53.37 L914.74 51.75 L913.9 50.12 L913.05 48.49 L912.2 46.86 L911.36 45.24 L910.51 43.61 L909.66 41.98 L908.81 40.36 L907.96 38.73 L907.11 37.1 L906.26 35.47 L905.41 33.85 L904.56 32.22 L903.7 30.59 L902.85 28.97 L902 27.34"/>
<path d="M902 613.06 L902.43 611.43 L902.85 609.81 L903.28 608.18 L903.7 606.55 L904.13 604.92 L904.55 603.3 L904.98 601.67 L905.4 600.04 L905.83 598.42 L906.25 596.79 L906.68 595.16 L907.1 593.54 L907.53 591.91 L907.95 590.28 L908.37 588.65 L908.79 587.03 L909.21 585.4 L909.64 583.77 L910.06 582.15 L910.48 580.52 L910.89 578.89 L911.31 577.27 L911.73 575.64 L912.15 574.01 L912.56 572.38 L912.98 570.76 L913.39 569.13 L913.81 567.5 L914.22 565.88 L914.63 564.25 L915.04 562.62 L915.45 561 L915.86 559.37 L916.27 557.74 L916.68 556.12 L917.08 554.49 L917.49 552.86 L917.89 551.23 L918.29 549.61 L918.69 547.98 L919.09 546.35 L919.49 544.73 L919.89 543.1 L920.28 541.47 L920.68 539.85 L921.07 538.22 L921.46 536.59 L921.85 534.96 L922.24 533.34 L922.63 531.71 L923.01 530.08 L923.4 528.46 L923.78 526.83 L924.16 525.2 L924.54 523.58 L924.91 521.95 L925.29 520.32 L925.66 518.69 L926.04 517.07 L926.4 515.44 L926.77 513.81 L927.14 512.19 L927.5 510.56 L927.87 508.93 L928.23 507.3 L928.58 505.68 L928.94 504.05 L929.29 502.42 L929.65 500.8 L930 499.17 L930.34 497.54 L930.69 495.92 L931.03 494.29 L931.37 492.66 L931.71 491.03 L932.05 489.41 L932.38 487.78 L932.72 486.15 L933.05 484.53 L933.37 482.9 L933.7 481.27 L934.02 479.65 L934.34 478.02 L934.66 476.39 L934.98 474.76 L935.29 473.14 L935.6 471.51 L935.91 469.88 L936.21 468.26 L936.51 466.63 L936.81 465 L937.11 463.38 L937.41 461.75 L937.7 460.12 L937.99 458.5 L938.27 456.87 L938.56 455.24 L938.84 453.61 L939.12 451.99 L939.39 450.36 L939.66 448.73 L939.93 447.11 L940.2 445.48 L940.46 443.85 L940.72 442.23 L940.98 440.6 L941.24 438.97 L941.49 437.34 L941.74 435.72 L941.98 434.09 L942.23 432.46 L942.47 430.84 L942.7 429.21 L942.94 427.58 L943.17 425.95 L943.39 424.33 L943.62 422.7 L943.84 421.07 L944.06 419.45 L944.27 417.82 L944.48 416.19 L944.69 414.57 L944.9 412.94 L945.1 411.31 L945.29 409.69 L945.49 408.06 L945.68 406.43 L945.87 404.8 L946.06 403.18 L946.24 401.55 L946.42 399.92 L946.59 398.3 L946.76 396.67 L946.93 395.04 L947.09 393.41 L947.26 391.79 L947.41 390.16 L947.57 388.53 L947.72 386.91 L947.87 385.28 L948.01 383.65 L948.15 382.03 L948.29 380.4 L948.42 378.77 L948.55 377.14 L948.68 375.52 L948.8 373.89 L948.92 372.26 L949.03 370.64 L949.15 369.01 L949.26 367.38 L949.36 365.76 L949.46 364.13 L949.56 362.5 L949.65 360.88 L949.74 359.25 L949.83 357.62 L949.91 355.99 L949.99 354.37 L950.07 352.74 L950.14 351.11 L950.21 349.49 L950.27 347.86 L950.33 346.23 L950.39 344.61 L950.45 342.98 L950.5 341.35 L950.54 339.72 L950.59 338.1 L950.62 336.47 L950.66 334.84 L950.69 333.22 L950.72 331.59 L950.74 329.96 L950.76 328.33 L950.78 326.71 L950.79 325.08 L950.8 323.45 L950.81 321.83 L950.81 320.2 L950.81 318.57 L950.8 316.95 L950.79 315.32 L950.78 313.69 L950.76 312.06 L950.74 310.44 L950.72 308.81 L950.69 307.18 L950.66 305.56 L950.62 303.93 L950.59 302.3 L950.54 300.68 L950.5 299.05 L950.45 297.42 L950.39 295.79 L950.33 294.17 L950.27 292.54 L950.21 290.91 L950.14 289.29 L950.07 287.66 L949.99 286.03 L949.91 284.41 L949.83 282.78 L949.74 281.15 L949.65 279.52 L949.56 277.9 L949.46 276.27 L949.36 274.64 L949.26 273.02 L949.15 271.39 L949.03 269.76 L948.92 268.14 L948.8 266.51 L948.68 264.88 L948.55 263.25 L948.42 261.63 L948.29 260 L948.15 258.37 L948.01 256.75 L947.87 255.12 L947.72 253.49 L947.57 251.87 L947.41 250.24 L947.26 248.61 L947.09 246.98 L946.93 245.36 L946.76 243.73 L946.59 242.1 L946.42 240.48 L946.24 238.85 L946.06 237.22 L945.87 235.6 L945.68 233.97 L945.49 232.34 L945.29 230.71 L945.1 229.09 L944.9 227.46 L944.69 225.83 L944.48 224.21 L944.27 222.58 L944.06 220.95 L943.84 219.33 L943.62 217.7 L943.39 216.07 L943.17 214.44 L942.94 212.82 L942.7 211.19 L942.47 209.56 L942.23 207.94 L941.98 206.31 L941.74 204.68 L941.49 203.06 L941.24 201.43 L940.98 199.8 L940.72 198.17 L940.46 196.55 L940.2 194.92 L939.93 193.29 L939.66 191.67 L939.39 190.04 L939.12 188.41 L938.84 186.79 L938.56 185.16 L938.27 183.53 L937.99 181.91 L937.7 180.28 L937.41 178.65 L937.11 177.02 L936.81 175.4 L936.51 173.77 L936.21 172.14 L935.91 170.52 L935.6 168.89 L935.29 167.26 L934.98 165.63 L934.66 164.01 L934.34 162.38 L934.02 160.75 L933.7 159.13 L933.37 157.5 L933.05 155.87 L932.72 154.25 L932.38 152.62 L932.05 150.99 L931.71 149.36 L931.37 147.74 L931.03 146.11 L930.69 144.48 L930.34 142.86 L930 141.23 L929.65 139.6 L929.29 137.98 L928.94 136.35 L928.58 134.72 L928.23 133.09 L927.87 131.47 L927.5 129.84 L927.14 128.21 L926.77 126.59 L926.4 124.96 L926.04 123.33 L925.66 121.71 L925.29 120.08 L924.91 118.45 L924.54 116.82 L924.16 115.2 L923.78 113.57 L923.4 111.94 L923.01 110.32 L922.63 108.69 L922.24 107.06 L921.85 105.44 L921.46 103.81 L921.07 102.18 L920.68 100.55 L920.28 98.93 L919.89 97.3 L919.49 95.67 L919.09 94.05 L918.69 92.42 L918.29 90.79 L917.89 89.17 L917.49 87.54 L917.08 85.91 L916.68 84.28 L916.27 82.66 L915.86 81.03 L915.45 79.4 L915.04 77.78 L914.63 76.15 L914.22 74.52 L913.81 72.9 L913.39 71.27 L912.98 69.64 L912.56 68.01 L912.15 66.39 L911.73 64.76 L911.31 63.13 L910.89 61.51 L910.48 59.88 L910.06 58.25 L909.64 56.63 L909.21 55 L908.79 53.37 L908.37 51.75 L907.95 50.12 L907.53 48.49 L907.1 46.86 L906.68 45.24 L906.25 43.61 L905.83 41.98 L905.4 40.36 L904.98 38.73 L904.55 37.1 L904.13 35.47 L903.7 33.85 L903.28 32.22 L902.85 30.59 L902.43 28.97 L902 27.34"/>
<path d="M902 613.06 L902 611.43 L902 609.81 L902 608.18 L902 606.55 L902 604.92 L902 603.3 L902 601.67 L902 600.04 L902 598.42 L902 596.79 L902 595.16 L902 593.54 L902 591.91 L902 590.28 L902 588.65 L902 587.03 L902 585.4 L902 583.77 L902 582.15 L902 580.52 L902 578.89 L902 577.27 L902 575.64 L902 574.01 L902 572.38 L902 570.76 L902 569.13 L902 567.5 L902 565.88 L902 564.25 L902 562.62 L902 561 L902 559.37 L902 557.74 L902 556.12 L902 554.49 L902 552.86 L902 551.23 L902 549.61 L902 547.98 L902 546.35 L902 544.73 L902 543.1 L902 541.47 L902 539.85 L902 538.22 L902 536.59 L902 534.96 L902 533.34 L902 531.71 L902 530.08 L902 528.46 L902 526.83 L902 525.2 L902 523.58 L902 521.95 L902 520.32 L902 518.69 L902 517.07 L902 515.44 L902 513.81 L902 512.19 L902 510.56 L902 508.93 L902 507.3 L902 505.68 L902 504.05 L902 502.42 L902 500.8 L902 499.17 L902 497.54 L902 495.92 L902 494.29 L902 492.66 L902 491.03 L902 489.41 L902 487.78 L902 486.15 L902 484.53 L902 482.9 L902 481.27 L902 479.65 L902 478.02 L902 476.39 L902 474.76 L902 473.14 L902 471.51 L902 469.88 L902 468.26 L902 466.63 L902 465 L902 463.38 L902 461.75 L902 460.12 L902 458.5 L902 456.87 L902 455.24 L902 453.61 L902 451.99 L902 450.36 L902 448.73 L902 447.11 L902 445.48 L902 443.85 L902 442.23 L902 440.6 L902 438.97 L902 437.34 L902 435.72 L902 434.09 L902 432.46 L902 430.84 L902 429.21 L902 427.58 L902 425.95 L902 424.33 L902 422.7 L902 421.07 L902 419.45 L902 417.82 L902 416.19 L902 414.57 L902 412.94 L902 411.31 L902 409.69 L902 408.06 L902 406.43 L902 404.8 L902 403.18 L902 401.55 L902 399.92 L902 398.3 L902 396.67 L902 395.04 L902 393.41 L902 391.79 L902 390.16 L902 388.53 L902 386.91 L902 385.28 L902 383.65 L902 382.03 L902 380.4 L902 378.77 L902 377.14 L902 375.52 L902 373.89 L902 372.26 L902 370.64 L902 369.01 L902 367.38 L902 365.76 L902 364.13 L902 362.5 L902 360.88 L902 359.25 L902 357.62 L902 355.99 L902 354.37 L902 352.74 L902 351.11 L902 349.49 L902 347.86 L902 346.23 L902 344.61 L902 342.98 L902 341.35 L902 339.72 L902 338.1 L902 336.47 L902 334.84 L902 333.22 L902 331.59 L902 329.96 L902 328.33 L902 326.71 L902 325.08 L902 323.45 L902 321.83 L902 320.2 L902 318.57 L902 316.95 L902 315.32 L902 313.69 L902 312.06 L902 310.44 L902 308.81 L902 307.18 L902 305.56 L902 303.93 L902 302.3 L902 300.68 L902 299.05 L902 297.42 L902 295.79 L902 294.17 L902 292.54 L902 290.91 L902 289.29 L902 287.66 L902 286.03 L902 284.41 L902 282.78 L902 281.15 L902 279.52 L902 277.9 L902 276.27 L902 274.64 L902 273.02 L902 271.39 L902 269.76 L902 268.14 L902 266.51 L902 264.88 L902 263.25 L902 261.63 L902 260 L902 258.37 L902 256.75 L902 255.12 L902 253.49 L902 251.87 L902 250.24 L902 248.61 L902 246.98 L902 245.36 L902 243.73 L902 242.1 L902 240.48 L902 238.85 L902 237.22 L902 235.6 L902 233.97 L902 232.34 L902 230.71 L902 229.09 L902 227.46 L902 225.83 L902 224.21 L902 222.58 L902 220.95 L902 219.33 L902 217.7 L902 216.07 L902 214.44 L902 212.82 L902 211.19 L902 209.56 L902 207.94 L902 206.31 L902 204.68 L902 203.06 L902 201.43 L902 199.8 L902 198.17 L902 196.55 L902 194.92 L902 193.29 L902 191.67 L902 190.04 L902 188.41 L902 186.79 L902 185.16 L902 183.53 L902 181.91 L902 180.28 L902 178.65 L902 177.02 L902 175.4 L902 173.77 L902 172.14 L902 170.52 L902 168.89 L902 167.26 L902 165.63 L902 164.01 L902 162.38 L902 160.75 L902 159.13 L902 157.5 L902 155.87 L902 154.25 L902 152.62 L902 150.99 L902 149.36 L902 147.74 L902 146.11 L902 144.48 L902 142.86 L902 141.23 L902 139.6 L902 137.98 L902 136.35 L902 134.72 L902 133.09 L902 131.47 L902 129.84 L902 128.21 L902 126.59 L902 124.96 L902 123.33 L902 121.71 L902 120.08 L902 118.45 L902 116.82 L902 115.2 L902 113.57 L902 111.94 L902 110.32 L902 108.69 L902 107.06 L902 105.44 L902 103.81 L902 102.18 L902 100.55 L902 98.93 L902 97.3 L902 95.67 L902 94.05 L902 92.42 L902 90.79 L902 89.17 L902 87.54 L902 85.91 L902 84.28 L902 82.66 L902 81.03 L902 79.4 L902 77.78 L902 76.15 L902 74.52 L902 72.9 L902 71.27 L902 69.64 L902 68.01 L902 66.39 L902 64.76 L902 63.13 L902 61.51 L902 59.88 L902 58.25 L902 56.63 L902 55 L902 53.37 L902 51.75 L902 50.12 L902 48.49 L902 46.86 L902 45.24 L902 43.61 L902 41.98 L902 40.36 L902 38.73 L902 37.1 L902 35.47 L902 33.85 L902 32.22 L902 30.59 L902 28.97 L902 27.34"/>
<path d="M902 613.06 L901.57 611.43 L901.15 609.81 L900.72 608.18 L900.3 606.55 L899.87 604.92 L899.45 603.3 L899.02 601.67 L898.6 600.04 L898.17 598.42 L897.75 596.79 L897.32 595.16 L896.9 593.54 L896.47 591.91 L896.05 590.28 L895.63 588.65 L895.21 587.03 L894.79 585.4 L894.36 583.77 L893.94 582.15 L893.52 580.52 L893.11 578.89 L892.69 577.27 L892.27 575.64 L891.85 574.01 L891.44 572.38 L891.02 570.76 L890.61 569.13 L890.19 567.5 L889.78 565.88 L889.37 564.25 L888.96 562.62 L888.55 561 L888.14 559.37 L887.73 557.74 L887.32 556.12 L886.92 554.49 L886.51 552.86 L886.11 551.23 L885.71 549.61 L885.31 547.98 L884.91 546.35 L884.51 544.73 L884.11 543.1 L883.72 541.47 L883.32 539.85 L882.93 538.22 L882.54 536.59 L882.15 534.96 L881.76 533.34 L881.37 531.71 L880.99 530.08 L880.6 528.46 L880.22 526.83 L879.84 525.2 L879.46 523.58 L879.09 521.95 L878.71 520.32 L878.34 518.69 L877.96 517.07 L877.6 515.44 L877.23 513.81 L876.86 512.19 L876.5 510.56 L876.13 508.93 L875.77 507.3 L875.42 505.68 L875.06 504.05 L874.71 502.42 L874.35 500.8 L874 499.17 L873.66 497.54 L873.31 495.92 L872.97 494.29 L872.63 492.66 L872.29 491.03 L871.95 489.41 L871.62 487.78 L871.28 486.15 L870.95 484.53 L870.63 482.9 L870.3 481.27 L869.98 479.65 L869.66 478.02 L869.34 476.39 L869.02 474.76 L868.71 473.14 L868.4 471.51 L868.09 469.88 L867.79 468.26 L867.49 466.63 L867.19 465 L866.89 463.38 L866.59 461.75 L866.3 460.12 L866.01 458.5 L865.73 456.87 L865.44 455.24 L865.16 453.61 L864.88 451.99 L864.61 450.36 L864.34 448.73 L864.07 447.11 L863.8 445.48 L863.54 443.85 L863.28 442.23 L863.02 440.6 L862.76 438.97 L862.51 437.34 L862.26 435.72 L862.02 434.09 L861.77 432.46 L861.53 430.84 L861.3 429.21 L861.06 427.58 L860.83 425.95 L860.61 424.33 L860.38 422.7 L860.16 421.07 L859.94 419.45 L859.73 417.82 L859.52 416.19 L859.31 414.57 L859.1 412.94 L858.9 411.31 L858.71 409.69 L858.51 408.06 L858.32 406.43 L858.13 404.8 L857.94 403.18 L857.76 401.55 L857.58 399.92 L857.41 398.3 L857.24 396.67 L857.07 395.04 L856.91 393.41 L856.74 391.79 L856.59 390.16 L856.43 388.53 L856.28 386.91 L856.13 385.28 L855.99 383.65 L855.85 382.03 L855.71 380.4 L855.58 378.77 L855.45 377.14 L855.32 375.52 L855.2 373.89 L855.08 372.26 L854.97 370.64 L854.85 369.01 L854.74 367.38 L854.64 365.76 L854.54 364.13 L854.44 362.5 L854.35 360.88 L854.26 359.25 L854.17 357.62 L854.09 355.99 L854.01 354.37 L853.93 352.74 L853.86 351.11 L853.79 349.49 L853.73 347.86 L853.67 346.23 L853.61 344.61 L853.55 342.98 L853.5 341.35 L853.46 339.72 L853.41 338.1 L853.38 336.47 L853.34 334.84 L853.31 333.22 L853.28 331.59 L853.26 329.96 L853.24 328.33 L853.22 326.71 L853.21 325.08 L853.2 323.45 L853.19 321.83 L853.19 320.2 L853.19 318.57 L853.2 316.95 L853.21 315.32 L853.22 313.69 L853.24 312.06 L853.26 310.44 L853.28 308.81 L853.31 307.18 L853.34 305.56 L853.38 303.93 L853.41 302.3 L853.46 300.68 L853.5 299.05 L853.55 297.42 L853.61 295.79 L853.67 294.17 L853.73 292.54 L853.79 290.91 L853.86 289.29 L853.93 287.66 L854.01 286.03 L854.09 284.41 L854.17 282.78 L854.26 281.15 L854.35 279.52 L854.44 277.9 L854.54 276.27 L854.64 274.64 L854.74 273.02 L854.85 271.39 L854.97 269.76 L855.08 268.14 L855.2 266.51 L855.32 264.88 L855.45 263.25 L855.58 261.63 L855.71 260 L855.85 258.37 L855.99 256.75 L856.13 255.12 L856.28 253.49 L856.43 251.87 L856.59 250.24 L856.74 248.61 L856.91 246.98 L857.07 245.36 L857.24 243.73 L857.41 242.1 L857.58 240.48 L857.76 238.85 L857.94 237.22 L858.13 235.6 L858.32 233.97 L858.51 232.34 L858.71 230.71 L858.9 229.09 L859.1 227.46 L859.31 225.83 L859.52 224.21 L859.73 222.58 L859.94 220.95 L860.16 219.33 L860.38 217.7 L860.61 216.07 L860.83 214.44 L861.06 212.82 L861.3 211.19 L861.53 209.56 L861.77 207.94 L862.02 206.31 L862.26 204.68 L862.51 203.06 L862.76 201.43 L863.02 199.8 L863.28 198.17 L863.54 196.55 L863.8 194.92 L864.07 193.29 L864.34 191.67 L864.61 190.04 L864.88 188.41 L865.16 186.79 L865.44 185.16 L865.73 183.53 L866.01 181.91 L866.3 180.28 L866.59 178.65 L866.89 177.02 L867.19 175.4 L867.49 173.77 L867.79 172.14 L868.09 170.52 L868.4 168.89 L868.71 167.26 L869.02 165.63 L869.34 164.01 L869.66 162.38 L869.98 160.75 L870.3 159.13 L870.63 157.5 L870.95 155.87 L871.28 154.25 L871.62 152.62 L871.95 150.99 L872.29 149.36 L872.63 147.74 L872.97 146.11 L873.31 144.48 L873.66 142.86 L874 141.23 L874.35 139.6 L874.71 137.98 L875.06 136.35 L875.42 134.72 L875.77 133.09 L876.13 131.47 L876.5 129.84 L876.86 128.21 L877.23 126.59 L877.6 124.96 L877.96 123.33 L878.34 121.71 L878.71 120.08 L879.09 118.45 L879.46 116.82 L879.84 115.2 L880.22 113.57 L880.6 111.94 L880.99 110.32 L881.37 108.69 L881.76 107.06 L882.15 105.44 L882.54 103.81 L882.93 102.18 L883.32 100.55 L883.72 98.93 L884.11 97.3 L884.51 95.67 L884.91 94.05 L885.31 92.42 L885.71 90.79 L886.11 89.17 L886.51 87.54 L886.92 85.91 L887.32 84.28 L887.73 82.66 L888.14 81.03 L888.55 79.4 L888.96 77.78 L889.37 76.15 L889.78 74.52 L890.19 72.9 L890.61 71.27 L891.02 69.64 L891.44 68.01 L891.85 66.39 L892.27 64.76 L892.69 63.13 L893.11 61.51 L893.52 59.88 L893.94 58.25 L894.36 56.63 L894.79 55 L895.21 53.37 L895.63 51.75 L896.05 50.12 L896.47 48.49 L896.9 46.86 L897.32 45.24 L897.75 43.61 L898.17 41.98 L898.6 40.36 L899.02 38.73 L899.45 37.1 L899.87 35.47 L900.3 33.85 L900.72 32.22 L901.15 30.59 L901.57 28.97 L902 27.34"/>
<path d="M902 613.06 L901.15 611.43 L900.3 609.81 L899.44 608.18 L898.59 606.55 L897.74 604.92 L896.89 603.3 L896.04 601.67 L895.19 600.04 L894.34 598.42 L893.49 596.79 L892.64 595.16 L891.8 593.54 L890.95 591.91 L890.1 590.28 L889.26 588.65 L888.41 587.03 L887.57 585.4 L886.73 583.77 L885.89 582.15 L885.05 580.52 L884.21 578.89 L883.37 577.27 L882.54 575.64 L881.7 574.01 L880.87 572.38 L880.04 570.76 L879.21 569.13 L878.38 567.5 L877.56 565.88 L876.73 564.25 L875.91 562.62 L875.09 561 L874.27 559.37 L873.46 557.74 L872.65 556.12 L871.83 554.49 L871.02 552.86 L870.22 551.23 L869.41 549.61 L868.61 547.98 L867.81 546.35 L867.02 544.73 L866.22 543.1 L865.43 541.47 L864.64 539.85 L863.86 538.22 L863.07 536.59 L862.29 534.96 L861.52 533.34 L860.74 531.71 L859.97 530.08 L859.21 528.46 L858.44 526.83 L857.68 525.2 L856.92 523.58 L856.17 521.95 L855.42 520.32 L854.67 518.69 L853.93 517.07 L853.19 515.44 L852.45 513.81 L851.72 512.19 L850.99 510.56 L850.27 508.93 L849.55 507.3 L848.83 505.68 L848.12 504.05 L847.41 502.42 L846.71 500.8 L846.01 499.17 L845.31 497.54 L844.62 495.92 L843.93 494.29 L843.25 492.66 L842.57 491.03 L841.9 489.41 L841.23 487.78 L840.57 486.15 L839.91 484.53 L839.25 482.9 L838.6 481.27 L837.96 479.65 L837.32 478.02 L836.68 476.39 L836.05 474.76 L835.42 473.14 L834.8 471.51 L834.19 469.88 L833.58 468.26 L832.97 466.63 L832.37 465 L831.78 463.38 L831.19 461.75 L830.61 460.12 L830.03 458.5 L829.45 456.87 L828.89 455.24 L828.33 453.61 L827.77 451.99 L827.22 450.36 L826.67 448.73 L826.14 447.11 L825.6 445.48 L825.07 443.85 L824.55 442.23 L824.04 440.6 L823.53 438.97 L823.02 437.34 L822.53 435.72 L822.03 434.09 L821.55 432.46 L821.07 430.84 L820.6 429.21 L820.13 427.58 L819.67 425.95 L819.21 424.33 L818.77 422.7 L818.32 421.07 L817.89 419.45 L817.46 417.82 L817.04 416.19 L816.62 414.57 L816.21 412.94 L815.81 411.31 L815.41 409.69 L815.02 408.06 L814.64 406.43 L814.26 404.8 L813.89 403.18 L813.53 401.55 L813.17 399.92 L812.82 398.3 L812.48 396.67 L812.14 395.04 L811.81 393.41 L811.49 391.79 L811.17 390.16 L810.86 388.53 L810.56 386.91 L810.27 385.28 L809.98 383.65 L809.7 382.03 L809.42 380.4 L809.16 378.77 L808.9 377.14 L808.65 375.52 L808.4 373.89 L808.16 372.26 L807.93 370.64 L807.71 369.01 L807.49 367.38 L807.28 365.76 L807.08 364.13 L806.88 362.5 L806.69 360.88 L806.51 359.25 L806.34 357.62 L806.17 355.99 L806.01 354.37 L805.86 352.74 L805.72 351.11 L805.58 349.49 L805.45 347.86 L805.33 346.23 L805.22 344.61 L805.11 342.98 L805.01 341.35 L804.91 339.72 L804.83 338.1 L804.75 336.47 L804.68 334.84 L804.62 333.22 L804.56 331.59 L804.51 329.96 L804.47 328.33 L804.44 326.71 L804.41 325.08 L804.39 323.45 L804.38 321.83 L804.38 320.2 L804.38 318.57 L804.39 316.95 L804.41 315.32 L804.44 313.69 L804.47 312.06 L804.51 310.44 L804.56 308.81 L804.62 307.18 L804.68 305.56 L804.75 303.93 L804.83 302.3 L804.91 300.68 L805.01 299.05 L805.11 297.42 L805.22 295.79 L805.33 294.17 L805.45 292.54 L805.58 290.91 L805.72 289.29 L805.86 287.66 L806.01 286.03 L806.17 284.41 L806.34 282.78 L806.51 281.15 L806.69 279.52 L806.88 277.9 L807.08 276.27 L807.28 274.64 L807.49 273.02 L807.71 271.39 L807.93 269.76 L808.16 268.14 L808.4 266.51 L808.65 264.88 L808.9 263.25 L809.16 261.63 L809.42 260 L809.7 258.37 L809.98 256.75 L810.27 255.12 L810.56 253.49 L810.86 251.87 L811.17 250.24 L811.49 248.61 L811.81 246.98 L812.14 245.36 L812.48 243.73 L812.82 242.1 L813.17 240.48 L813.53 238.85 L813.89 237.22 L814.26 235.6 L814.64 233.97 L815.02 232.34 L815.41 230.71 L815.81 229.09 L816.21 227.46 L816.62 225.83 L817.04 224.21 L817.46 222.58 L817.89 220.95 L818.32 219.33 L818.77 217.7 L819.21 216.07 L819.67 214.44 L820.13 212.82 L820.6 211.19 L821.07 209.56 L821.55 207.94 L822.03 206.31 L822.53 204.68 L823.02 203.06 L823.53 201.43 L824.04 199.8 L824.55 198.17 L825.07 196.55 L825.6 194.92 L826.14 193.29 L826.67 191.67 L827.22 190.04 L827.77 188.41 L828.33 186.79 L828.89 185.16 L829.45 183.53 L830.03 181.91 L830.61 180.28 L831.19 178.65 L831.78 177.02 L832.37 175.4 L832.97 173.77 L833.58 172.14 L834.19 170.52 L834.8 168.89 L835.42 167.26 L836.05 165.63 L836.68 164.01 L837.32 162.38 L837.96 160.75 L838.6 159.13 L839.25 157.5 L839.91 155.87 L840.57 154.25 L841.23 152.62 L841.9 150.99 L842.57 149.36 L843.25 147.74 L843.93 146.11 L844.62 144.48 L845.31 142.86 L846.01 141.23 L846.71 139.6 L847.41 137.98 L848.12 136.35 L848.83 134.72 L849.55 133.09 L850.27 131.47 L850.99 129.84 L851.72 128.21 L852.45 126.59 L853.19 124.96 L853.93 123.33 L854.67 121.71 L855.42 120.08 L856.17 118.45 L856.92 116.82 L857.68 115.2 L858.44 113.57 L859.21 111.94 L859.97 110.32 L860.74 108.69 L861.52 107.06 L862.29 105.44 L863.07 103.81 L863.86 102.18 L864.64 100.55 L865.43 98.93 L866.22 97.3 L867.02 95.67 L867.81 94.05 L868.61 92.42 L869.41 90.79 L870.22 89.17 L871.02 87.54 L871.83 85.91 L872.65 84.28 L873.46 82.66 L874.27 81.03 L875.09 79.4 L875.91 77.78 L876.73 76.15 L877.56 74.52 L878.38 72.9 L879.21 71.27 L880.04 69.64 L880.87 68.01 L881.7 66.39 L882.54 64.76 L883.37 63.13 L884.21 61.51 L885.05 59.88 L885.89 58.25 L886.73 56.63 L887.57 55 L888.41 53.37 L889.26 51.75 L890.1 50.12 L890.95 48.49 L891.8 46.86 L892.64 45.24 L893.49 43.61 L894.34 41.98 L895.19 40.36 L896.04 38.73 L896.89 37.1 L897.74 35.47 L898.59 33.85 L899.44 32.22 L900.3 30.59 L901.15 28.97 L902 27.34"/>
<path d="M902 613.06 L900.72 611.43 L899.44 609.81 L898.17 608.18 L896.89 606.55 L895.61 604.92 L894.34 603.3 L893.06 601.67 L891.79 600.04 L890.51 598.42 L889.24 596.79 L887.97 595.16 L886.69 593.54 L885.42 591.91 L884.15 590.28 L882.89 588.65 L881.62 587.03 L880.36 585.4 L879.09 583.77 L877.83 582.15 L876.57 580.52 L875.32 578.89 L874.06 577.27 L872.81 575.64 L871.56 574.01 L870.31 572.38 L869.06 570.76 L867.82 569.13 L866.58 567.5 L865.34 565.88 L864.1 564.25 L862.87 562.62 L861.64 561 L860.41 559.37 L859.19 557.74 L857.97 556.12 L856.75 554.49 L855.54 552.86 L854.33 551.23 L853.12 549.61 L851.92 547.98 L850.72 546.35 L849.52 544.73 L848.33 543.1 L847.15 541.47 L845.96 539.85 L844.79 538.22 L843.61 536.59 L842.44 534.96 L841.28 533.34 L840.12 531.71 L838.96 530.08 L837.81 528.46 L836.66 526.83 L835.52 525.2 L834.39 523.58 L833.26 521.95 L832.13 520.32 L831.01 518.69 L829.89 517.07 L828.78 515.44 L827.68 513.81 L826.58 512.19 L825.49 510.56 L824.4 508.93 L823.32 507.3 L822.25 505.68 L821.18 504.05 L820.12 502.42 L819.06 500.8 L818.01 499.17 L816.97 497.54 L815.93 495.92 L814.9 494.29 L813.88 492.66 L812.86 491.03 L811.85 489.41 L810.85 487.78 L809.85 486.15 L808.86 484.53 L807.88 482.9 L806.9 481.27 L805.93 479.65 L804.97 478.02 L804.02 476.39 L803.07 474.76 L802.13 473.14 L801.2 471.51 L800.28 469.88 L799.37 468.26 L798.46 466.63 L797.56 465 L796.67 463.38 L795.78 461.75 L794.91 460.12 L794.04 458.5 L793.18 456.87 L792.33 455.24 L791.49 453.61 L790.65 451.99 L789.83 450.36 L789.01 448.73 L788.2 447.11 L787.4 445.48 L786.61 443.85 L785.83 442.23 L785.06 440.6 L784.29 438.97 L783.54 437.34 L782.79 435.72 L782.05 434.09 L781.32 432.46 L780.6 430.84 L779.89 429.21 L779.19 427.58 L778.5 425.95 L777.82 424.33 L777.15 422.7 L776.48 421.07 L775.83 419.45 L775.19 417.82 L774.55 416.19 L773.93 414.57 L773.31 412.94 L772.71 411.31 L772.12 409.69 L771.53 408.06 L770.95 406.43 L770.39 404.8 L769.83 403.18 L769.29 401.55 L768.75 399.92 L768.23 398.3 L767.71 396.67 L767.21 395.04 L766.72 393.41 L766.23 391.79 L765.76 390.16 L765.3 388.53 L764.84 386.91 L764.4 385.28 L763.97 383.65 L763.55 382.03 L763.14 380.4 L762.74 378.77 L762.35 377.14 L761.97 375.52 L761.6 373.89 L761.24 372.26 L760.9 370.64 L760.56 369.01 L760.23 367.38 L759.92 365.76 L759.62 364.13 L759.32 362.5 L759.04 360.88 L758.77 359.25 L758.51 357.62 L758.26 355.99 L758.02 354.37 L757.79 352.74 L757.58 351.11 L757.37 349.49 L757.18 347.86 L757 346.23 L756.82 344.61 L756.66 342.98 L756.51 341.35 L756.37 339.72 L756.24 338.1 L756.13 336.47 L756.02 334.84 L755.93 333.22 L755.84 331.59 L755.77 329.96 L755.71 328.33 L755.66 326.71 L755.62 325.08 L755.59 323.45 L755.58 321.83 L755.57 320.2 L755.58 318.57 L755.59 316.95 L755.62 315.32 L755.66 313.69 L755.71 312.06 L755.77 310.44 L755.84 308.81 L755.93 307.18 L756.02 305.56 L756.13 303.93 L756.24 302.3 L756.37 300.68 L756.51 299.05 L756.66 297.42 L756.82 295.79 L757 294.17 L757.18 292.54 L757.37 290.91 L757.58 289.29 L757.79 287.66 L758.02 286.03 L758.26 284.41 L758.51 282.78 L758.77 281.15 L759.04 279.52 L759.32 277.9 L759.62 276.27 L759.92 274.64 L760.23 273.02 L760.56 271.39 L760.9 269.76 L761.24 268.14 L761.6 266.51 L761.97 264.88 L762.35 263.25 L762.74 261.63 L763.14 260 L763.55 258.37 L763.97 256.75 L764.4 255.12 L764.84 253.49 L765.3 251.87 L765.76 250.24 L766.23 248.61 L766.72 246.98 L767.21 245.36 L767.71 243.73 L768.23 242.1 L768.75 240.48 L769.29 238.85 L769.83 237.22 L770.39 235.6 L770.95 233.97 L771.53 232.34 L772.12 230.71 L772.71 229.09 L773.31 227.46 L773.93 225.83 L774.55 224.21 L775.19 222.58 L775.83 220.95 L776.48 219.33 L777.15 217.7 L777.82 216.07 L778.5 214.44 L779.19 212.82 L779.89 211.19 L780.6 209.56 L781.32 207.94 L782.05 206.31 L782.79 204.68 L783.54 203.06 L784.29 201.43 L785.06 199.8 L785.83 198.17 L786.61 196.55 L787.4 194.92 L788.2 193.29 L789.01 191.67 L789.83 190.04 L790.65 188.41 L791.49 186.79 L792.33 185.16 L793.18 183.53 L794.04 181.91 L794.91 180.28 L795.78 178.65 L796.67 177.02 L797.56 175.4 L798.46 173.77 L799.37 172.14 L800.28 170.52 L801.2 168.89 L802.13 167.26 L803.07 165.63 L804.02 164.01 L804.97 162.38 L805.93 160.75 L806.9 159.13 L807.88 157.5 L808.86 155.87 L809.85 154.25 L810.85 152.62 L811.85 150.99 L812.86 149.36 L813.88 147.74 L814.9 146.11 L815.93 144.48 L816.97 142.86 L818.01 141.23 L819.06 139.6 L820.12 137.98 L821.18 136.35 L822.25 134.72 L823.32 133.09 L824.4 131.47 L825.49 129.84 L826.58 128.21 L827.68 126.59 L828.78 124.96 L829.89 123.33 L831.01 121.71 L832.13 120.08 L833.26 118.45 L834.39 116.82 L835.52 115.2 L836.66 113.57 L837.81 111.94 L838.96 110.32 L840.12 108.69 L841.28 107.06 L842.44 105.44 L843.61 103.81 L844.79 102.18 L845.96 100.55 L847.15 98.93 L848.33 97.3 L849.52 95.67 L850.72 94.05 L851.92 92.42 L853.12 90.79 L854.33 89.17 L855.54 87.54 L856.75 85.91 L857.97 84.28 L859.19 82.66 L860.41 81.03 L861.64 79.4 L862.87 77.78 L864.1 76.15 L865.34 74.52 L866.58 72.9 L867.82 71.27 L869.06 69.64 L870.31 68.01 L871.56 66.39 L872.81 64.76 L874.06 63.13 L875.32 61.51 L876.57 59.88 L877.83 58.25 L879.09 56.63 L880.36 55 L881.62 53.37 L882.89 51.75 L884.15 50.12 L885.42 48.49 L886.69 46.86 L887.97 45.24 L889.24 43.61 L890.51 41.98 L891.79 40.36 L893.06 38.73 L894.34 37.1 L895.61 35.47 L896.89 33.85 L898.17 32.22 L899.44 30.59 L900.72 28.97 L902 27.34"/>
<path d="M902 613.06 L900.3 611.43 L898.59 609.81 L896.89 608.18 L895.19 606.55 L893.48 604.92 L891.78 603.3 L890.08 601.67 L888.38 600.04 L886.68 598.42 L884.98 596.79 L883.29 595.16 L881.59 593.54 L879.9 591.91 L878.21 590.28 L876.52 588.65 L874.83 587.03 L873.14 585.4 L871.46 583.77 L869.78 582.15 L868.1 580.52 L866.42 578.89 L864.75 577.27 L863.08 575.64 L861.41 574.01 L859.74 572.38 L858.08 570.76 L856.42 569.13 L854.77 567.5 L853.12 565.88 L851.47 564.25 L849.82 562.62 L848.18 561 L846.55 559.37 L844.92 557.74 L843.29 556.12 L841.67 554.49 L840.05 552.86 L838.44 551.23 L836.83 549.61 L835.22 547.98 L833.63 546.35 L832.03 544.73 L830.44 543.1 L828.86 541.47 L827.28 539.85 L825.71 538.22 L824.15 536.59 L822.59 534.96 L821.04 533.34 L819.49 531.71 L817.95 530.08 L816.41 528.46 L814.88 526.83 L813.36 525.2 L811.85 523.58 L810.34 521.95 L808.84 520.32 L807.35 518.69 L805.86 517.07 L804.38 515.44 L802.91 513.81 L801.44 512.19 L799.99 510.56 L798.54 508.93 L797.1 507.3 L795.66 505.68 L794.24 504.05 L792.82 502.42 L791.41 500.8 L790.01 499.17 L788.62 497.54 L787.24 495.92 L785.87 494.29 L784.5 492.66 L783.15 491.03 L781.8 489.41 L780.46 487.78 L779.13 486.15 L777.81 484.53 L776.5 482.9 L775.2 481.27 L773.91 479.65 L772.63 478.02 L771.36 476.39 L770.1 474.76 L768.85 473.14 L767.61 471.51 L766.37 469.88 L765.15 468.26 L763.94 466.63 L762.74 465 L761.56 463.38 L760.38 461.75 L759.21 460.12 L758.05 458.5 L756.91 456.87 L755.77 455.24 L754.65 453.61 L753.54 451.99 L752.44 450.36 L751.35 448.73 L750.27 447.11 L749.2 445.48 L748.15 443.85 L747.11 442.23 L746.07 440.6 L745.05 438.97 L744.05 437.34 L743.05 435.72 L742.07 434.09 L741.1 432.46 L740.14 430.84 L739.19 429.21 L738.26 427.58 L737.34 425.95 L736.43 424.33 L735.53 422.7 L734.65 421.07 L733.78 419.45 L732.92 417.82 L732.07 416.19 L731.24 414.57 L730.42 412.94 L729.61 411.31 L728.82 409.69 L728.04 408.06 L727.27 406.43 L726.52 404.8 L725.78 403.18 L725.05 401.55 L724.34 399.92 L723.64 398.3 L722.95 396.67 L722.28 395.04 L721.62 393.41 L720.98 391.79 L720.35 390.16 L719.73 388.53 L719.12 386.91 L718.53 385.28 L717.96 383.65 L717.4 382.03 L716.85 380.4 L716.32 378.77 L715.8 377.14 L715.29 375.52 L714.8 373.89 L714.32 372.26 L713.86 370.64 L713.41 369.01 L712.98 367.38 L712.56 365.76 L712.15 364.13 L711.76 362.5 L711.39 360.88 L711.03 359.25 L710.68 357.62 L710.35 355.99 L710.03 354.37 L709.73 352.74 L709.44 351.11 L709.16 349.49 L708.9 347.86 L708.66 346.23 L708.43 344.61 L708.22 342.98 L708.02 341.35 L707.83 339.72 L707.66 338.1 L707.5 336.47 L707.36 334.84 L707.24 333.22 L707.12 331.59 L707.03 329.96 L706.95 328.33 L706.88 326.71 L706.83 325.08 L706.79 323.45 L706.77 321.83 L706.76 320.2 L706.77 318.57 L706.79 316.95 L706.83 315.32 L706.88 313.69 L706.95 312.06 L707.03 310.44 L707.12 308.81 L707.24 307.18 L707.36 305.56 L707.5 303.93 L707.66 302.3 L707.83 300.68 L708.02 299.05 L708.22 297.42 L708.43 295.79 L708.66 294.17 L708.9 292.54 L709.16 290.91 L709.44 289.29 L709.73 287.66 L710.03 286.03 L710.35 284.41 L710.68 282.78 L711.03 281.15 L711.39 279.52 L711.76 277.9 L712.15 276.27 L712.56 274.64 L712.98 273.02 L713.41 271.39 L713.86 269.76 L714.32 268.14 L714.8 266.51 L715.29 264.88 L715.8 263.25 L716.32 261.63 L716.85 260 L717.4 258.37 L717.96 256.75 L718.53 255.12 L719.12 253.49 L719.73 251.87 L720.35 250.24 L720.98 248.61 L721.62 246.98 L722.28 245.36 L722.95 243.73 L723.64 242.1 L724.34 240.48 L725.05 238.85 L725.78 237.22 L726.52 235.6 L727.27 233.97 L728.04 232.34 L728.82 230.71 L729.61 229.09 L730.42 227.46 L731.24 225.83 L732.07 224.21 L732.92 222.58 L733.78 220.95 L734.65 219.33 L735.53 217.7 L736.43 216.07 L737.34 214.44 L738.26 212.82 L739.19 211.19 L740.14 209.56 L741.1 207.94 L742.07 206.31 L743.05 204.68 L744.05 203.06 L745.05 201.43 L746.07 199.8 L747.11 198.17 L748.15 196.55 L749.2 194.92 L750.27 193.29 L751.35 191.67 L752.44 190.04 L753.54 188.41 L754.65 186.79 L755.77 185.16 L756.91 183.53 L758.05 181.91 L759.21 180.28 L760.38 178.65 L761.56 177.02 L762.74 175.4 L763.94 173.77 L765.15 172.14 L766.37 170.52 L767.61 168.89 L768.85 167.26 L770.1 165.63 L771.36 164.01 L772.63 162.38 L773.91 160.75 L775.2 159.13 L776.5 157.5 L777.81 155.87 L779.13 154.25 L780.46 152.62 L781.8 150.99 L783.15 149.36 L784.5 147.74 L785.87 146.11 L787.24 144.48 L788.62 142.86 L790.01 141.23 L791.41 139.6 L792.82 137.98 L794.24 136.35 L795.66 134.72 L797.1 133.09 L798.54 131.47 L799.99 129.84 L801.44 128.21 L802.91 126.59 L804.38 124.96 L805.86 123.33 L807.35 121.71 L808.84 120.08 L810.34 118.45 L811.85 116.82 L813.36 115.2 L814.88 113.57 L816.41 111.94 L817.95 110.32 L819.49 108.69 L821.04 107.06 L822.59 105.44 L824.15 103.81 L825.71 102.18 L827.28 100.55 L828.86 98.93 L830.44 97.3 L832.03 95.67 L833.63 94.05 L835.22 92.42 L836.83 90.79 L838.44 89.17 L840.05 87.54 L841.67 85.91 L843.29 84.28 L844.92 82.66 L846.55 81.03 L848.18 79.4 L849.82 77.78 L851.47 76.15 L853.12 74.52 L854.77 72.9 L856.42 71.27 L858.08 69.64 L859.74 68.01 L861.41 66.39 L863.08 64.76 L864.75 63.13 L866.42 61.51 L868.1 59.88 L869.78 58.25 L871.46 56.63 L873.14 55 L874.83 53.37 L876.52 51.75 L878.21 50.12 L879.9 48.49 L881.59 46.86 L883.29 45.24 L884.98 43.61 L886.68 41.98 L888.38 40.36 L890.08 38.73 L891.78 37.1 L893.48 35.47 L895.19 33.85 L896.89 32.22 L898.59 30.59 L900.3 28.97 L902 27.34"/>
<path d="M902 613.06 L899.87 611.43 L897.74 609.81 L895.61 608.18 L893.48 606.55 L891.35 604.92 L889.23 603.3 L887.1 601.67 L884.98 600.04 L882.85 598.42 L880.73 596.79 L878.61 595.16 L876.49 593.54 L874.37 591.91 L872.26 590.28 L870.15 588.65 L868.03 587.03 L865.93 585.4 L863.82 583.77 L861.72 582.15 L859.62 580.52 L857.53 578.89 L855.43 577.27 L853.34 575.64 L851.26 574.01 L849.18 572.38 L847.1 570.76 L845.03 569.13 L842.96 567.5 L840.89 565.88 L838.84 564.25 L836.78 562.62 L834.73 561 L832.69 559.37 L830.65 557.74 L828.61 556.12 L826.58 554.49 L824.56 552.86 L822.55 551.23 L820.53 549.61 L818.53 547.98 L816.53 546.35 L814.54 544.73 L812.56 543.1 L810.58 541.47 L808.61 539.85 L806.64 538.22 L804.69 536.59 L802.74 534.96 L800.79 533.34 L798.86 531.71 L796.93 530.08 L795.02 528.46 L793.11 526.83 L791.2 525.2 L789.31 523.58 L787.43 521.95 L785.55 520.32 L783.68 518.69 L781.82 517.07 L779.97 515.44 L778.14 513.81 L776.3 512.19 L774.48 510.56 L772.67 508.93 L770.87 507.3 L769.08 505.68 L767.3 504.05 L765.53 502.42 L763.77 500.8 L762.02 499.17 L760.28 497.54 L758.55 495.92 L756.83 494.29 L755.13 492.66 L753.43 491.03 L751.75 489.41 L750.08 487.78 L748.41 486.15 L746.77 484.53 L745.13 482.9 L743.5 481.27 L741.89 479.65 L740.29 478.02 L738.7 476.39 L737.12 474.76 L735.56 473.14 L734.01 471.51 L732.47 469.88 L730.94 468.26 L729.43 466.63 L727.93 465 L726.45 463.38 L724.97 461.75 L723.51 460.12 L722.07 458.5 L720.64 456.87 L719.22 455.24 L717.81 453.61 L716.42 451.99 L715.05 450.36 L713.69 448.73 L712.34 447.11 L711 445.48 L709.69 443.85 L708.38 442.23 L707.09 440.6 L705.82 438.97 L704.56 437.34 L703.32 435.72 L702.09 434.09 L700.87 432.46 L699.67 430.84 L698.49 429.21 L697.32 427.58 L696.17 425.95 L695.03 424.33 L693.91 422.7 L692.81 421.07 L691.72 419.45 L690.65 417.82 L689.59 416.19 L688.55 414.57 L687.52 412.94 L686.52 411.31 L685.53 409.69 L684.55 408.06 L683.59 406.43 L682.65 404.8 L681.72 403.18 L680.82 401.55 L679.92 399.92 L679.05 398.3 L678.19 396.67 L677.35 395.04 L676.53 393.41 L675.72 391.79 L674.93 390.16 L674.16 388.53 L673.41 386.91 L672.67 385.28 L671.95 383.65 L671.25 382.03 L670.56 380.4 L669.89 378.77 L669.25 377.14 L668.61 375.52 L668 373.89 L667.4 372.26 L666.83 370.64 L666.27 369.01 L665.72 367.38 L665.2 365.76 L664.69 364.13 L664.2 362.5 L663.73 360.88 L663.28 359.25 L662.85 357.62 L662.43 355.99 L662.04 354.37 L661.66 352.74 L661.3 351.11 L660.95 349.49 L660.63 347.86 L660.33 346.23 L660.04 344.61 L659.77 342.98 L659.52 341.35 L659.29 339.72 L659.07 338.1 L658.88 336.47 L658.7 334.84 L658.54 333.22 L658.41 331.59 L658.28 329.96 L658.18 328.33 L658.1 326.71 L658.03 325.08 L657.99 323.45 L657.96 321.83 L657.95 320.2 L657.96 318.57 L657.99 316.95 L658.03 315.32 L658.1 313.69 L658.18 312.06 L658.28 310.44 L658.41 308.81 L658.54 307.18 L658.7 305.56 L658.88 303.93 L659.07 302.3 L659.29 300.68 L659.52 299.05 L659.77 297.42 L660.04 295.79 L660.33 294.17 L660.63 292.54 L660.95 290.91 L661.3 289.29 L661.66 287.66 L662.04 286.03 L662.43 284.41 L662.85 282.78 L663.28 281.15 L663.73 279.52 L664.2 277.9 L664.69 276.27 L665.2 274.64 L665.72 273.02 L666.27 271.39 L666.83 269.76 L667.4 268.14 L668 266.51 L668.61 264.88 L669.25 263.25 L669.89 261.63 L670.56 260 L671.25 258.37 L671.95 256.75 L672.67 255.12 L673.41 253.49 L674.16 251.87 L674.93 250.24 L675.72 248.61 L676.53 246.98 L677.35 245.36 L678.19 243.73 L679.05 242.1 L679.92 240.48 L680.82 238.85 L681.72 237.22 L682.65 235.6 L683.59 233.97 L684.55 232.34 L685.53 230.71 L686.52 229.09 L687.52 227.46 L688.55 225.83 L689.59 224.21 L690.65 222.58 L691.72 220.95 L692.81 219.33 L693.91 217.7 L695.03 216.07 L696.17 214.44 L697.32 212.82 L698.49 211.19 L699.67 209.56 L700.87 207.94 L702.09 206.31 L703.32 204.68 L704.56 203.06 L705.82 201.43 L707.09 199.8 L708.38 198.17 L709.69 196.55 L711 194.92 L712.34 193.29 L713.69 191.67 L715.05 190.04 L716.42 188.41 L717.81 186.79 L719.22 185.16 L720.64 183.53 L722.07 181.91 L723.51 180.28 L724.97 178.65 L726.45 177.02 L727.93 175.4 L729.43 173.77 L730.94 172.14 L732.47 170.52 L734.01 168.89 L735.56 167.26 L737.12 165.63 L738.7 164.01 L740.29 162.38 L741.89 160.75 L743.5 159.13 L745.13 157.5 L746.77 155.87 L748.41 154.25 L750.08 152.62 L751.75 150.99 L753.43 149.36 L755.13 147.74 L756.83 146.11 L758.55 144.48 L760.28 142.86 L762.02 141.23 L763.77 139.6 L765.53 137.98 L767.3 136.35 L769.08 134.72 L770.87 133.09 L772.67 131.47 L774.48 129.84 L776.3 128.21 L778.14 126.59 L779.97 124.96 L781.82 123.33 L783.68 121.71 L785.55 120.08 L787.43 118.45 L789.31 116.82 L791.2 115.2 L793.11 113.57 L795.02 111.94 L796.93 110.32 L798.86 108.69 L800.79 107.06 L802.74 105.44 L804.69 103.81 L806.64 102.18 L808.61 100.55 L810.58 98.93 L812.56 97.3 L814.54 95.67 L816.53 94.05 L818.53 92.42 L820.53 90.79 L822.55 89.17 L824.56 87.54 L826.58 85.91 L828.61 84.28 L830.65 82.66 L832.69 81.03 L834.73 79.4 L836.78 77.78 L838.84 76.15 L840.89 74.52 L842.96 72.9 L845.03 71.27 L847.1 69.64 L849.18 68.01 L851.26 66.39 L853.34 64.76 L855.43 63.13 L857.53 61.51 L859.62 59.88 L861.72 58.25 L863.82 56.63 L865.93 55 L868.03 53.37 L870.15 51.75 L872.26 50.12 L874.37 48.49 L876.49 46.86 L878.61 45.24 L880.73 43.61 L882.85 41.98 L884.98 40.36 L887.1 38.73 L889.23 37.1 L891.35 35.47 L893.48 33.85 L895.61 32.22 L897.74 30.59 L899.87 28.97 L902 27.34"/>
<path d="M902 613.06 L899.44 611.43 L896.89 609.81 L894.33 608.18 L891.78 606.55 L889.23 604.92 L886.67 603.3 L884.12 601.67 L881.57 600.04 L879.02 598.42 L876.48 596.79 L873.93 595.16 L871.39 593.54 L868.85 591.91 L866.31 590.28 L863.77 588.65 L861.24 587.03 L858.71 585.4 L856.19 583.77 L853.66 582.15 L851.15 580.52 L848.63 578.89 L846.12 577.27 L843.61 575.64 L841.11 574.01 L838.61 572.38 L836.12 570.76 L833.63 569.13 L831.15 567.5 L828.67 565.88 L826.2 564.25 L823.74 562.62 L821.28 561 L818.82 559.37 L816.38 557.74 L813.94 556.12 L811.5 554.49 L809.07 552.86 L806.65 551.23 L804.24 549.61 L801.84 547.98 L799.44 546.35 L797.05 544.73 L794.67 543.1 L792.29 541.47 L789.93 539.85 L787.57 538.22 L785.22 536.59 L782.88 534.96 L780.55 533.34 L778.23 531.71 L775.92 530.08 L773.62 528.46 L771.33 526.83 L769.04 525.2 L766.77 523.58 L764.51 521.95 L762.26 520.32 L760.02 518.69 L757.79 517.07 L755.57 515.44 L753.36 513.81 L751.17 512.19 L748.98 510.56 L746.81 508.93 L744.65 507.3 L742.5 505.68 L740.36 504.05 L738.23 502.42 L736.12 500.8 L734.02 499.17 L731.94 497.54 L729.86 495.92 L727.8 494.29 L725.75 492.66 L723.72 491.03 L721.7 489.41 L719.69 487.78 L717.7 486.15 L715.72 484.53 L713.75 482.9 L711.8 481.27 L709.87 479.65 L707.95 478.02 L706.04 476.39 L704.15 474.76 L702.27 473.14 L700.41 471.51 L698.56 469.88 L696.73 468.26 L694.92 466.63 L693.12 465 L691.33 463.38 L689.57 461.75 L687.82 460.12 L686.08 458.5 L684.36 456.87 L682.66 455.24 L680.98 453.61 L679.31 451.99 L677.66 450.36 L676.02 448.73 L674.41 447.11 L672.81 445.48 L671.22 443.85 L669.66 442.23 L668.11 440.6 L666.58 438.97 L665.07 437.34 L663.58 435.72 L662.1 434.09 L660.65 432.46 L659.21 430.84 L657.79 429.21 L656.39 427.58 L655 425.95 L653.64 424.33 L652.3 422.7 L650.97 421.07 L649.66 419.45 L648.38 417.82 L647.11 416.19 L645.86 414.57 L644.63 412.94 L643.42 411.31 L642.23 409.69 L641.06 408.06 L639.91 406.43 L638.78 404.8 L637.67 403.18 L636.58 401.55 L635.51 399.92 L634.46 398.3 L633.43 396.67 L632.42 395.04 L631.43 393.41 L630.46 391.79 L629.52 390.16 L628.59 388.53 L627.69 386.91 L626.8 385.28 L625.94 383.65 L625.1 382.03 L624.27 380.4 L623.47 378.77 L622.69 377.14 L621.94 375.52 L621.2 373.89 L620.48 372.26 L619.79 370.64 L619.12 369.01 L618.47 367.38 L617.84 365.76 L617.23 364.13 L616.65 362.5 L616.08 360.88 L615.54 359.25 L615.02 357.62 L614.52 355.99 L614.04 354.37 L613.59 352.74 L613.16 351.11 L612.75 349.49 L612.36 347.86 L611.99 346.23 L611.65 344.61 L611.32 342.98 L611.02 341.35 L610.74 339.72 L610.49 338.1 L610.25 336.47 L610.04 334.84 L609.85 333.22 L609.69 331.59 L609.54 329.96 L609.42 328.33 L609.32 326.71 L609.24 325.08 L609.18 323.45 L609.15 321.83 L609.14 320.2 L609.15 318.57 L609.18 316.95 L609.24 315.32 L609.32 313.69 L609.42 312.06 L609.54 310.44 L609.69 308.81 L609.85 307.18 L610.04 305.56 L610.25 303.93 L610.49 302.3 L610.74 300.68 L611.02 299.05 L611.32 297.42 L611.65 295.79 L611.99 294.17 L612.36 292.54 L612.75 290.91 L613.16 289.29 L613.59 287.66 L614.04 286.03 L614.52 284.41 L615.02 282.78 L615.54 281.15 L616.08 279.52 L616.65 277.9 L617.23 276.27 L617.84 274.64 L618.47 273.02 L619.12 271.39 L619.79 269.76 L620.48 268.14 L621.2 266.51 L621.94 264.88 L622.69 263.25 L623.47 261.63 L624.27 260 L625.1 258.37 L625.94 256.75 L626.8 255.12 L627.69 253.49 L628.59 251.87 L629.52 250.24 L630.46 248.61 L631.43 246.98 L632.42 245.36 L633.43 243.73 L634.46 242.1 L635.51 240.48 L636.58 238.85 L637.67 237.22 L638.78 235.6 L639.91 233.97 L641.06 232.34 L642.23 230.71 L643.42 229.09 L644.63 227.46 L645.86 225.83 L647.11 224.21 L648.38 222.58 L649.66 220.95 L650.97 219.33 L652.3 217.7 L653.64 216.07 L655 214.44 L656.39 212.82 L657.79 211.19 L659.21 209.56 L660.65 207.94 L662.1 206.31 L663.58 204.68 L665.07 203.06 L666.58 201.43 L668.11 199.8 L669.66 198.17 L671.22 196.55 L672.81 194.92 L674.41 193.29 L676.02 191.67 L677.66 190.04 L679.31 188.41 L680.98 186.79 L682.66 185.16 L684.36 183.53 L686.08 181.91 L687.82 180.28 L689.57 178.65 L691.33 177.02 L693.12 175.4 L694.92 173.77 L696.73 172.14 L698.56 170.52 L700.41 168.89 L702.27 167.26 L704.15 165.63 L706.04 164.01 L707.95 162.38 L709.87 160.75 L711.8 159.13 L713.75 157.5 L715.72 155.87 L717.7 154.25 L719.69 152.62 L721.7 150.99 L723.72 149.36 L725.75 147.74 L727.8 146.11 L729.86 144.48 L731.94 142.86 L734.02 141.23 L736.12 139.6 L738.23 137.98 L740.36 136.35 L742.5 134.72 L744.65 133.09 L746.81 131.47 L748.98 129.84 L751.17 128.21 L753.36 126.59 L755.57 124.96 L757.79 123.33 L760.02 121.71 L762.26 120.08 L764.51 118.45 L766.77 116.82 L769.04 115.2 L771.33 113.57 L773.62 111.94 L775.92 110.32 L778.23 108.69 L780.55 107.06 L782.88 105.44 L785.22 103.81 L787.57 102.18 L789.93 100.55 L792.29 98.93 L794.67 97.3 L797.05 95.67 L799.44 94.05 L801.84 92.42 L804.24 90.79 L806.65 89.17 L809.07 87.54 L811.5 85.91 L813.94 84.28 L816.38 82.66 L818.82 81.03 L821.28 79.4 L823.74 77.78 L826.2 76.15 L828.67 74.52 L831.15 72.9 L833.63 71.27 L836.12 69.64 L838.61 68.01 L841.11 66.39 L843.61 64.76 L846.12 63.13 L848.63 61.51 L851.15 59.88 L853.66 58.25 L856.19 56.63 L858.71 55 L861.24 53.37 L863.77 51.75 L866.31 50.12 L868.85 48.49 L871.39 46.86 L873.93 45.24 L876.48 43.61 L879.02 41.98 L881.57 40.36 L884.12 38.73 L886.67 37.1 L889.23 35.47 L891.78 33.85 L894.33 32.22 L896.89 30.59 L899.44 28.97 L902 27.34"/>
<path d="M902 613.06 L899.02 611.43 L896.04 609.81 L893.06 608.18 L890.08 606.55 L887.1 604.92 L884.12 603.3 L881.14 601.67 L878.17 600.04 L875.19 598.42 L872.22 596.79 L869.25 595.16 L866.29 593.54 L863.32 591.91 L860.36 590.28 L857.4 588.65 L854.45 587.03 L851.5 585.4 L848.55 583.77 L845.61 582.15 L842.67 580.52 L839.74 578.89 L836.81 577.27 L833.88 575.64 L830.96 574.01 L828.05 572.38 L825.14 570.76 L822.24 569.13 L819.34 567.5 L816.45 565.88 L813.57 564.25 L810.69 562.62 L807.82 561 L804.96 559.37 L802.11 557.74 L799.26 556.12 L796.42 554.49 L793.59 552.86 L790.76 551.23 L787.95 549.61 L785.14 547.98 L782.34 546.35 L779.56 544.73 L776.78 543.1 L774.01 541.47 L771.25 539.85 L768.5 538.22 L765.76 536.59 L763.03 534.96 L760.31 533.34 L757.6 531.71 L754.91 530.08 L752.22 528.46 L749.55 526.83 L746.89 525.2 L744.23 523.58 L741.6 521.95 L738.97 520.32 L736.36 518.69 L733.75 517.07 L731.16 515.44 L728.59 513.81 L726.03 512.19 L723.48 510.56 L720.94 508.93 L718.42 507.3 L715.91 505.68 L713.42 504.05 L710.94 502.42 L708.48 500.8 L706.03 499.17 L703.59 497.54 L701.17 495.92 L698.77 494.29 L696.38 492.66 L694 491.03 L691.65 489.41 L689.31 487.78 L686.98 486.15 L684.67 484.53 L682.38 482.9 L680.1 481.27 L677.84 479.65 L675.6 478.02 L673.38 476.39 L671.17 474.76 L668.98 473.14 L666.81 471.51 L664.66 469.88 L662.52 468.26 L660.4 466.63 L658.3 465 L656.22 463.38 L654.16 461.75 L652.12 460.12 L650.09 458.5 L648.09 456.87 L646.1 455.24 L644.14 453.61 L642.19 451.99 L640.27 450.36 L638.36 448.73 L636.47 447.11 L634.61 445.48 L632.76 443.85 L630.93 442.23 L629.13 440.6 L627.35 438.97 L625.58 437.34 L623.84 435.72 L622.12 434.09 L620.42 432.46 L618.74 430.84 L617.09 429.21 L615.45 427.58 L613.84 425.95 L612.25 424.33 L610.68 422.7 L609.13 421.07 L607.61 419.45 L606.11 417.82 L604.63 416.19 L603.17 414.57 L601.73 412.94 L600.32 411.31 L598.94 409.69 L597.57 408.06 L596.23 406.43 L594.91 404.8 L593.61 403.18 L592.34 401.55 L591.09 399.92 L589.87 398.3 L588.67 396.67 L587.49 395.04 L586.34 393.41 L585.21 391.79 L584.1 390.16 L583.02 388.53 L581.97 386.91 L580.94 385.28 L579.93 383.65 L578.94 382.03 L577.99 380.4 L577.05 378.77 L576.14 377.14 L575.26 375.52 L574.4 373.89 L573.57 372.26 L572.76 370.64 L571.97 369.01 L571.21 367.38 L570.48 365.76 L569.77 364.13 L569.09 362.5 L568.43 360.88 L567.8 359.25 L567.19 357.62 L566.61 355.99 L566.05 354.37 L565.52 352.74 L565.02 351.11 L564.54 349.49 L564.08 347.86 L563.66 346.23 L563.25 344.61 L562.88 342.98 L562.53 341.35 L562.2 339.72 L561.9 338.1 L561.63 336.47 L561.38 334.84 L561.16 333.22 L560.97 331.59 L560.8 329.96 L560.66 328.33 L560.54 326.71 L560.45 325.08 L560.38 323.45 L560.34 321.83 L560.33 320.2 L560.34 318.57 L560.38 316.95 L560.45 315.32 L560.54 313.69 L560.66 312.06 L560.8 310.44 L560.97 308.81 L561.16 307.18 L561.38 305.56 L561.63 303.93 L561.9 302.3 L562.2 300.68 L562.53 299.05 L562.88 297.42 L563.25 295.79 L563.66 294.17 L564.08 292.54 L564.54 290.91 L565.02 289.29 L565.52 287.66 L566.05 286.03 L566.61 284.41 L567.19 282.78 L567.8 281.15 L568.43 279.52 L569.09 277.9 L569.77 276.27 L570.48 274.64 L571.21 273.02 L571.97 271.39 L572.76 269.76 L573.57 268.14 L574.4 266.51 L575.26 264.88 L576.14 263.25 L577.05 261.63 L577.99 260 L578.94 258.37 L579.93 256.75 L580.94 255.12 L581.97 253.49 L583.02 251.87 L584.1 250.24 L585.21 248.61 L586.34 246.98 L587.49 245.36 L588.67 243.73 L589.87 242.1 L591.09 240.48 L592.34 238.85 L593.61 237.22 L594.91 235.6 L596.23 233.97 L597.57 232.34 L598.94 230.71 L600.32 229.09 L601.73 227.46 L603.17 225.83 L604.63 224.21 L606.11 222.58 L607.61 220.95 L609.13 219.33 L610.68 217.7 L612.25 216.07 L613.84 214.44 L615.45 212.82 L617.09 211.19 L618.74 209.56 L620.42 207.94 L622.12 206.31 L623.84 204.68 L625.58 203.06 L627.35 201.43 L629.13 199.8 L630.93 198.17 L632.76 196.55 L634.61 194.92 L636.47 193.29 L638.36 191.67 L640.27 190.04 L642.19 188.41 L644.14 186.79 L646.1 185.16 L648.09 183.53 L650.09 181.91 L652.12 180.28 L654.16 178.65 L656.22 177.02 L658.3 175.4 L660.4 173.77 L662.52 172.14 L664.66 170.52 L666.81 168.89 L668.98 167.26 L671.17 165.63 L673.38 164.01 L675.6 162.38 L677.84 160.75 L680.1 159.13 L682.38 157.5 L684.67 155.87 L686.98 154.25 L689.31 152.62 L691.65 150.99 L694 149.36 L696.38 147.74 L698.77 146.11 L701.17 144.48 L703.59 142.86 L706.03 141.23 L708.48 139.6 L710.94 137.98 L713.42 136.35 L715.91 134.72 L718.42 133.09 L720.94 131.47 L723.48 129.84 L726.03 128.21 L728.59 126.59 L731.16 124.96 L733.75 123.33 L736.36 121.71 L738.97 120.08 L741.6 118.45 L744.23 116.82 L746.89 115.2 L749.55 113.57 L752.22 111.94 L754.91 110.32 L757.6 108.69 L760.31 107.06 L763.03 105.44 L765.76 103.81 L768.5 102.18 L771.25 100.55 L774.01 98.93 L776.78 97.3 L779.56 95.67 L782.34 94.05 L785.14 92.42 L787.95 90.79 L790.76 89.17 L793.59 87.54 L796.42 85.91 L799.26 84.28 L802.11 82.66 L804.96 81.03 L807.82 79.4 L810.69 77.78 L813.57 76.15 L816.45 74.52 L819.34 72.9 L822.24 71.27 L825.14 69.64 L828.05 68.01 L830.96 66.39 L833.88 64.76 L836.81 63.13 L839.74 61.51 L842.67 59.88 L845.61 58.25 L848.55 56.63 L851.5 55 L854.45 53.37 L857.4 51.75 L860.36 50.12 L863.32 48.49 L866.29 46.86 L869.25 45.24 L872.22 43.61 L875.19 41.98 L878.17 40.36 L881.14 38.73 L884.12 37.1 L887.1 35.47 L890.08 33.85 L893.06 32.22 L896.04 30.59 L899.02 28.97 L902 27.34"/>
<path d="M902 613.06 L898.59 611.43 L895.19 609.81 L891.78 608.18 L888.37 606.55 L884.97 604.92 L881.56 603.3 L878.16 601.67 L874.76 600.04 L871.36 598.42 L867.97 596.79 L864.57 595.16 L861.18 593.54 L857.8 591.91 L854.41 590.28 L851.03 588.65 L847.66 587.03 L844.28 585.4 L840.92 583.77 L837.55 582.15 L834.19 580.52 L830.84 578.89 L827.49 577.27 L824.15 575.64 L820.81 574.01 L817.48 572.38 L814.16 570.76 L810.84 569.13 L807.53 567.5 L804.23 565.88 L800.94 564.25 L797.65 562.62 L794.37 561 L791.1 559.37 L787.83 557.74 L784.58 556.12 L781.34 554.49 L778.1 552.86 L774.87 551.23 L771.66 549.61 L768.45 547.98 L765.25 546.35 L762.06 544.73 L758.89 543.1 L755.72 541.47 L752.57 539.85 L749.43 538.22 L746.3 536.59 L743.18 534.96 L740.07 533.34 L736.98 531.71 L733.89 530.08 L730.82 528.46 L727.77 526.83 L724.73 525.2 L721.7 523.58 L718.68 521.95 L715.68 520.32 L712.69 518.69 L709.72 517.07 L706.76 515.44 L703.82 513.81 L700.89 512.19 L697.97 510.56 L695.08 508.93 L692.2 507.3 L689.33 505.68 L686.48 504.05 L683.65 502.42 L680.83 500.8 L678.03 499.17 L675.25 497.54 L672.48 495.92 L669.73 494.29 L667 492.66 L664.29 491.03 L661.6 489.41 L658.92 487.78 L656.26 486.15 L653.62 484.53 L651 482.9 L648.4 481.27 L645.82 479.65 L643.26 478.02 L640.72 476.39 L638.2 474.76 L635.69 473.14 L633.21 471.51 L630.75 469.88 L628.31 468.26 L625.89 466.63 L623.49 465 L621.11 463.38 L618.76 461.75 L616.42 460.12 L614.11 458.5 L611.82 456.87 L609.55 455.24 L607.3 453.61 L605.08 451.99 L602.87 450.36 L600.7 448.73 L598.54 447.11 L596.41 445.48 L594.3 443.85 L592.21 442.23 L590.15 440.6 L588.11 438.97 L586.1 437.34 L584.1 435.72 L582.14 434.09 L580.2 432.46 L578.28 430.84 L576.38 429.21 L574.52 427.58 L572.67 425.95 L570.85 424.33 L569.06 422.7 L567.29 421.07 L565.55 419.45 L563.83 417.82 L562.14 416.19 L560.48 414.57 L558.84 412.94 L557.23 411.31 L555.64 409.69 L554.08 408.06 L552.55 406.43 L551.04 404.8 L549.56 403.18 L548.1 401.55 L546.68 399.92 L545.28 398.3 L543.91 396.67 L542.56 395.04 L541.24 393.41 L539.95 391.79 L538.69 390.16 L537.46 388.53 L536.25 386.91 L535.07 385.28 L533.92 383.65 L532.79 382.03 L531.7 380.4 L530.63 378.77 L529.59 377.14 L528.58 375.52 L527.6 373.89 L526.65 372.26 L525.72 370.64 L524.83 369.01 L523.96 367.38 L523.12 365.76 L522.31 364.13 L521.53 362.5 L520.78 360.88 L520.05 359.25 L519.36 357.62 L518.69 355.99 L518.06 354.37 L517.45 352.74 L516.88 351.11 L516.33 349.49 L515.81 347.86 L515.32 346.23 L514.86 344.61 L514.43 342.98 L514.03 341.35 L513.66 339.72 L513.32 338.1 L513.01 336.47 L512.72 334.84 L512.47 333.22 L512.25 331.59 L512.06 329.96 L511.89 328.33 L511.76 326.71 L511.65 325.08 L511.58 323.45 L511.53 321.83 L511.52 320.2 L511.53 318.57 L511.58 316.95 L511.65 315.32 L511.76 313.69 L511.89 312.06 L512.06 310.44 L512.25 308.81 L512.47 307.18 L512.72 305.56 L513.01 303.93 L513.32 302.3 L513.66 300.68 L514.03 299.05 L514.43 297.42 L514.86 295.79 L515.32 294.17 L515.81 292.54 L516.33 290.91 L516.88 289.29 L517.45 287.66 L518.06 286.03 L518.69 284.41 L519.36 282.78 L520.05 281.15 L520.78 279.52 L521.53 277.9 L522.31 276.27 L523.12 274.64 L523.96 273.02 L524.83 271.39 L525.72 269.76 L526.65 268.14 L527.6 266.51 L528.58 264.88 L529.59 263.25 L530.63 261.63 L531.7 260 L532.79 258.37 L533.92 256.75 L535.07 255.12 L536.25 253.49 L537.46 251.87 L538.69 250.24 L539.95 248.61 L541.24 246.98 L542.56 245.36 L543.91 243.73 L545.28 242.1 L546.68 240.48 L548.1 238.85 L549.56 237.22 L551.04 235.6 L552.55 233.97 L554.08 232.34 L555.64 230.71 L557.23 229.09 L558.84 227.46 L560.48 225.83 L562.14 224.21 L563.83 222.58 L565.55 220.95 L567.29 219.33 L569.06 217.7 L570.85 216.07 L572.67 214.44 L574.52 212.82 L576.38 211.19 L578.28 209.56 L580.2 207.94 L582.14 206.31 L584.1 204.68 L586.1 203.06 L588.11 201.43 L590.15 199.8 L592.21 198.17 L594.3 196.55 L596.41 194.92 L598.54 193.29 L600.7 191.67 L602.87 190.04 L605.08 188.41 L607.3 186.79 L609.55 185.16 L611.82 183.53 L614.11 181.91 L616.42 180.28 L618.76 178.65 L621.11 177.02 L623.49 175.4 L625.89 173.77 L628.31 172.14 L630.75 170.52 L633.21 168.89 L635.69 167.26 L638.2 165.63 L640.72 164.01 L643.26 162.38 L645.82 160.75 L648.4 159.13 L651 157.5 L653.62 155.87 L656.26 154.25 L658.92 152.62 L661.6 150.99 L664.29 149.36 L667 147.74 L669.73 146.11 L672.48 144.48 L675.25 142.86 L678.03 141.23 L680.83 139.6 L683.65 137.98 L686.48 136.35 L689.33 134.72 L692.2 133.09 L695.08 131.47 L697.97 129.84 L700.89 128.21 L703.82 126.59 L706.76 124.96 L709.72 123.33 L712.69 121.71 L715.68 120.08 L718.68 118.45 L721.7 116.82 L724.73 115.2 L727.77 113.57 L730.82 111.94 L733.89 110.32 L736.98 108.69 L740.07 107.06 L743.18 105.44 L746.3 103.81 L749.43 102.18 L752.57 100.55 L755.72 98.93 L758.89 97.3 L762.06 95.67 L765.25 94.05 L768.45 92.42 L771.66 90.79 L774.87 89.17 L778.1 87.54 L781.34 85.91 L784.58 84.28 L787.83 82.66 L791.1 81.03 L794.37 79.4 L797.65 77.78 L800.94 76.15 L804.23 74.52 L807.53 72.9 L810.84 71.27 L814.16 69.64 L817.48 68.01 L820.81 66.39 L824.15 64.76 L827.49 63.13 L830.84 61.51 L834.19 59.88 L837.55 58.25 L840.92 56.63 L844.28 55 L847.66 53.37 L851.03 51.75 L854.41 50.12 L857.8 48.49 L861.18 46.86 L864.57 45.24 L867.97 43.61 L871.36 41.98 L874.76 40.36 L878.16 38.73 L881.56 37.1 L884.97 35.47 L888.37 33.85 L891.78 32.22 L895.19 30.59 L898.59 28.97 L902 27.34"/>
<path d="M902 613.06 L898.17 611.43 L894.33 609.81 L890.5 608.18 L886.67 606.55 L882.84 604.92 L879.01 603.3 L875.18 601.67 L871.36 600.04 L867.53 598.42 L863.71 596.79 L859.9 595.16 L856.08 593.54 L852.27 591.91 L848.46 590.28 L844.66 588.65 L840.86 587.03 L837.07 585.4 L833.28 583.77 L829.5 582.15 L825.72 580.52 L821.95 578.89 L818.18 577.27 L814.42 575.64 L810.67 574.01 L806.92 572.38 L803.18 570.76 L799.45 569.13 L795.73 567.5 L792.01 565.88 L788.3 564.25 L784.6 562.62 L780.92 561 L777.23 559.37 L773.56 557.74 L769.9 556.12 L766.25 554.49 L762.61 552.86 L758.98 551.23 L755.36 549.61 L751.75 547.98 L748.16 546.35 L744.57 544.73 L741 543.1 L737.44 541.47 L733.89 539.85 L730.36 538.22 L726.83 536.59 L723.32 534.96 L719.83 533.34 L716.35 531.71 L712.88 530.08 L709.43 528.46 L705.99 526.83 L702.57 525.2 L699.16 523.58 L695.77 521.95 L692.39 520.32 L689.03 518.69 L685.68 517.07 L682.35 515.44 L679.04 513.81 L675.75 512.19 L672.47 510.56 L669.21 508.93 L665.97 507.3 L662.75 505.68 L659.54 504.05 L656.35 502.42 L653.18 500.8 L650.03 499.17 L646.9 497.54 L643.79 495.92 L640.7 494.29 L637.63 492.66 L634.58 491.03 L631.55 489.41 L628.54 487.78 L625.55 486.15 L622.58 484.53 L619.63 482.9 L616.7 481.27 L613.8 479.65 L610.92 478.02 L608.06 476.39 L605.22 474.76 L602.4 473.14 L599.61 471.51 L596.84 469.88 L594.1 468.26 L591.38 466.63 L588.68 465 L586 463.38 L583.35 461.75 L580.72 460.12 L578.12 458.5 L575.54 456.87 L572.99 455.24 L570.46 453.61 L567.96 451.99 L565.48 450.36 L563.03 448.73 L560.61 447.11 L558.21 445.48 L555.83 443.85 L553.49 442.23 L551.17 440.6 L548.87 438.97 L546.61 437.34 L544.37 435.72 L542.15 434.09 L539.97 432.46 L537.81 430.84 L535.68 429.21 L533.58 427.58 L531.51 425.95 L529.46 424.33 L527.44 422.7 L525.45 421.07 L523.49 419.45 L521.56 417.82 L519.66 416.19 L517.79 414.57 L515.94 412.94 L514.13 411.31 L512.35 409.69 L510.59 408.06 L508.86 406.43 L507.17 404.8 L505.5 403.18 L503.87 401.55 L502.26 399.92 L500.69 398.3 L499.14 396.67 L497.63 395.04 L496.15 393.41 L494.7 391.79 L493.28 390.16 L491.89 388.53 L490.53 386.91 L489.2 385.28 L487.91 383.65 L486.64 382.03 L485.41 380.4 L484.21 378.77 L483.04 377.14 L481.9 375.52 L480.8 373.89 L479.73 372.26 L478.69 370.64 L477.68 369.01 L476.7 367.38 L475.76 365.76 L474.85 364.13 L473.97 362.5 L473.12 360.88 L472.31 359.25 L471.53 357.62 L470.78 355.99 L470.07 354.37 L469.38 352.74 L468.73 351.11 L468.12 349.49 L467.54 347.86 L466.99 346.23 L466.47 344.61 L465.98 342.98 L465.53 341.35 L465.12 339.72 L464.73 338.1 L464.38 336.47 L464.06 334.84 L463.78 333.22 L463.53 331.59 L463.31 329.96 L463.13 328.33 L462.98 326.71 L462.86 325.08 L462.78 323.45 L462.73 321.83 L462.71 320.2 L462.73 318.57 L462.78 316.95 L462.86 315.32 L462.98 313.69 L463.13 312.06 L463.31 310.44 L463.53 308.81 L463.78 307.18 L464.06 305.56 L464.38 303.93 L464.73 302.3 L465.12 300.68 L465.53 299.05 L465.98 297.42 L466.47 295.79 L466.99 294.17 L467.54 292.54 L468.12 290.91 L468.73 289.29 L469.38 287.66 L470.07 286.03 L470.78 284.41 L471.53 282.78 L472.31 281.15 L473.12 279.52 L473.97 277.9 L474.85 276.27 L475.76 274.64 L476.7 273.02 L477.68 271.39 L478.69 269.76 L479.73 268.14 L480.8 266.51 L481.9 264.88 L483.04 263.25 L484.21 261.63 L485.41 260 L486.64 258.37 L487.91 256.75 L489.2 255.12 L490.53 253.49 L491.89 251.87 L493.28 250.24 L494.7 248.61 L496.15 246.98 L497.63 245.36 L499.14 243.73 L500.69 242.1 L502.26 240.48 L503.87 238.85 L505.5 237.22 L507.17 235.6 L508.86 233.97 L510.59 232.34 L512.35 230.71 L514.13 229.09 L515.94 227.46 L517.79 225.83 L519.66 224.21 L521.56 222.58 L523.49 220.95 L525.45 219.33 L527.44 217.7 L529.46 216.07 L531.51 214.44 L533.58 212.82 L535.68 211.19 L537.81 209.56 L539.97 207.94 L542.15 206.31 L544.37 204.68 L546.61 203.06 L548.87 201.43 L551.17 199.8 L553.49 198.17 L555.83 196.55 L558.21 194.92 L560.61 193.29 L563.03 191.67 L565.48 190.04 L567.96 188.41 L570.46 186.79 L572.99 185.16 L575.54 183.53 L578.12 181.91 L580.72 180.28 L583.35 178.65 L586 177.02 L588.68 175.4 L591.38 173.77 L594.1 172.14 L596.84 170.52 L599.61 168.89 L602.4 167.26 L605.22 165.63 L608.06 164.01 L610.92 162.38 L613.8 160.75 L616.7 159.13 L619.63 157.5 L622.58 155.87 L625.55 154.25 L628.54 152.62 L631.55 150.99 L634.58 149.36 L637.63 147.74 L640.7 146.11 L643.79 144.48 L646.9 142.86 L650.03 141.23 L653.18 139.6 L656.35 137.98 L659.54 136.35 L662.75 134.72 L665.97 133.09 L669.21 131.47 L672.47 129.84 L675.75 128.21 L679.04 126.59 L682.35 124.96 L685.68 123.33 L689.03 121.71 L692.39 120.08 L695.77 118.45 L699.16 116.82 L702.57 115.2 L705.99 113.57 L709.43 111.94 L712.88 110.32 L716.35 108.69 L719.83 107.06 L723.32 105.44 L726.83 103.81 L730.36 102.18 L733.89 100.55 L737.44 98.93 L741 97.3 L744.57 95.67 L748.16 94.05 L751.75 92.42 L755.36 90.79 L758.98 89.17 L762.61 87.54 L766.25 85.91 L769.9 84.28 L773.56 82.66 L777.23 81.03 L780.92 79.4 L784.6 77.78 L788.3 76.15 L792.01 74.52 L795.73 72.9 L799.45 71.27 L803.18 69.64 L806.92 68.01 L810.67 66.39 L814.42 64.76 L818.18 63.13 L821.95 61.51 L825.72 59.88 L829.5 58.25 L833.28 56.63 L837.07 55 L840.86 53.37 L844.66 51.75 L848.46 50.12 L852.27 48.49 L856.08 46.86 L859.9 45.24 L863.71 43.61 L867.53 41.98 L871.36 40.36 L875.18 38.73 L879.01 37.1 L882.84 35.47 L886.67 33.85 L890.5 32.22 L894.33 30.59 L898.17 28.97 L902 27.34"/>
<path d="M902 613.06 L897.74 611.43 L893.48 609.81 L889.22 608.18 L884.97 606.55 L880.71 604.92 L876.45 603.3 L872.2 601.67 L867.95 600.04 L863.7 598.42 L859.46 596.79 L855.22 595.16 L850.98 593.54 L846.75 591.91 L842.52 590.28 L838.29 588.65 L834.07 587.03 L829.85 585.4 L825.64 583.77 L821.44 582.15 L817.24 580.52 L813.05 578.89 L808.87 577.27 L804.69 575.64 L800.52 574.01 L796.36 572.38 L792.2 570.76 L788.06 569.13 L783.92 567.5 L779.79 565.88 L775.67 564.25 L771.56 562.62 L767.46 561 L763.37 559.37 L759.29 557.74 L755.23 556.12 L751.17 554.49 L747.12 552.86 L743.09 551.23 L739.07 549.61 L735.06 547.98 L731.06 546.35 L727.08 544.73 L723.11 543.1 L719.15 541.47 L715.21 539.85 L711.28 538.22 L707.37 536.59 L703.47 534.96 L699.59 533.34 L695.72 531.71 L691.87 530.08 L688.03 528.46 L684.21 526.83 L680.41 525.2 L676.62 523.58 L672.85 521.95 L669.1 520.32 L665.36 518.69 L661.65 517.07 L657.95 515.44 L654.27 513.81 L650.61 512.19 L646.97 510.56 L643.35 508.93 L639.74 507.3 L636.16 505.68 L632.6 504.05 L629.06 502.42 L625.54 500.8 L622.04 499.17 L618.56 497.54 L615.1 495.92 L611.67 494.29 L608.25 492.66 L604.86 491.03 L601.5 489.41 L598.15 487.78 L594.83 486.15 L591.53 484.53 L588.26 482.9 L585 481.27 L581.78 479.65 L578.58 478.02 L575.4 476.39 L572.24 474.76 L569.12 473.14 L566.01 471.51 L562.94 469.88 L559.89 468.26 L556.86 466.63 L553.86 465 L550.89 463.38 L547.94 461.75 L545.03 460.12 L542.13 458.5 L539.27 456.87 L536.43 455.24 L533.63 453.61 L530.85 451.99 L528.09 450.36 L525.37 448.73 L522.68 447.11 L520.01 445.48 L517.37 443.85 L514.76 442.23 L512.19 440.6 L509.64 438.97 L507.12 437.34 L504.63 435.72 L502.17 434.09 L499.74 432.46 L497.35 430.84 L494.98 429.21 L492.64 427.58 L490.34 425.95 L488.07 424.33 L485.83 422.7 L483.62 421.07 L481.44 419.45 L479.29 417.82 L477.18 416.19 L475.1 414.57 L473.05 412.94 L471.03 411.31 L469.05 409.69 L467.1 408.06 L465.18 406.43 L463.3 404.8 L461.45 403.18 L459.63 401.55 L457.85 399.92 L456.1 398.3 L454.38 396.67 L452.7 395.04 L451.05 393.41 L449.44 391.79 L447.86 390.16 L446.32 388.53 L444.81 386.91 L443.34 385.28 L441.9 383.65 L440.49 382.03 L439.12 380.4 L437.79 378.77 L436.49 377.14 L435.23 375.52 L434 373.89 L432.81 372.26 L431.65 370.64 L430.53 369.01 L429.45 367.38 L428.4 365.76 L427.39 364.13 L426.41 362.5 L425.47 360.88 L424.57 359.25 L423.7 357.62 L422.87 355.99 L422.07 354.37 L421.32 352.74 L420.59 351.11 L419.91 349.49 L419.26 347.86 L418.65 346.23 L418.08 344.61 L417.54 342.98 L417.04 341.35 L416.57 339.72 L416.15 338.1 L415.76 336.47 L415.4 334.84 L415.09 333.22 L414.81 331.59 L414.57 329.96 L414.36 328.33 L414.2 326.71 L414.07 325.08 L413.97 323.45 L413.92 321.83 L413.9 320.2 L413.92 318.57 L413.97 316.95 L414.07 315.32 L414.2 313.69 L414.36 312.06 L414.57 310.44 L414.81 308.81 L415.09 307.18 L415.4 305.56 L415.76 303.93 L416.15 302.3 L416.57 300.68 L417.04 299.05 L417.54 297.42 L418.08 295.79 L418.65 294.17 L419.26 292.54 L419.91 290.91 L420.59 289.29 L421.32 287.66 L422.07 286.03 L422.87 284.41 L423.7 282.78 L424.57 281.15 L425.47 279.52 L426.41 277.9 L427.39 276.27 L428.4 274.64 L429.45 273.02 L430.53 271.39 L431.65 269.76 L432.81 268.14 L434 266.51 L435.23 264.88 L436.49 263.25 L437.79 261.63 L439.12 260 L440.49 258.37 L441.9 256.75 L443.34 255.12 L444.81 253.49 L446.32 251.87 L447.86 250.24 L449.44 248.61 L451.05 246.98 L452.7 245.36 L454.38 243.73 L456.1 242.1 L457.85 240.48 L459.63 238.85 L461.45 237.22 L463.3 235.6 L465.18 233.97 L467.1 232.34 L469.05 230.71 L471.03 229.09 L473.05 227.46 L475.1 225.83 L477.18 224.21 L479.29 222.58 L481.44 220.95 L483.62 219.33 L485.83 217.7 L488.07 216.07 L490.34 214.44 L492.64 212.82 L494.98 211.19 L497.35 209.56 L499.74 207.94 L502.17 206.31 L504.63 204.68 L507.12 203.06 L509.64 201.43 L512.19 199.8 L514.76 198.17 L517.37 196.55 L520.01 194.92 L522.68 193.29 L525.37 191.67 L528.09 190.04 L530.85 188.41 L533.63 186.79 L536.43 185.16 L539.27 183.53 L542.13 181.91 L545.03 180.28 L547.94 178.65 L550.89 177.02 L553.86 175.4 L556.86 173.77 L559.89 172.14 L562.94 170.52 L566.01 168.89 L569.12 167.26 L572.24 165.63 L575.4 164.01 L578.58 162.38 L581.78 160.75 L585 159.13 L588.26 157.5 L591.53 155.87 L594.83 154.25 L598.15 152.62 L601.5 150.99 L604.86 149.36 L608.25 147.74 L611.67 146.11 L615.1 144.48 L618.56 142.86 L622.04 141.23 L625.54 139.6 L629.06 137.98 L632.6 136.35 L636.16 134.72 L639.74 133.09 L643.35 131.47 L646.97 129.84 L650.61 128.21 L654.27 126.59 L657.95 124.96 L661.65 123.33 L665.36 121.71 L669.1 120.08 L672.85 118.45 L676.62 116.82 L680.41 115.2 L684.21 113.57 L688.03 111.94 L691.87 110.32 L695.72 108.69 L699.59 107.06 L703.47 105.44 L707.37 103.81 L711.28 102.18 L715.21 100.55 L719.15 98.93 L723.11 97.3 L727.08 95.67 L731.06 94.05 L735.06 92.42 L739.07 90.79 L743.09 89.17 L747.12 87.54 L751.17 85.91 L755.23 84.28 L759.29 82.66 L763.37 81.03 L767.46 79.4 L771.56 77.78 L775.67 76.15 L779.79 74.52 L783.92 72.9 L788.06 71.27 L792.2 69.64 L796.36 68.01 L800.52 66.39 L804.69 64.76 L808.87 63.13 L813.05 61.51 L817.24 59.88 L821.44 58.25 L825.64 56.63 L829.85 55 L834.07 53.37 L838.29 51.75 L842.52 50.12 L846.75 48.49 L850.98 46.86 L855.22 45.24 L859.46 43.61 L863.7 41.98 L867.95 40.36 L872.2 38.73 L876.45 37.1 L880.71 35.47 L884.97 33.85 L889.22 32.22 L893.48 30.59 L897.74 28.97 L902 27.34"/>
<path d="M902 613.06 L897.31 611.43 L892.63 609.81 L887.95 608.18 L883.26 606.55 L878.58 604.92 L873.9 603.3 L869.22 601.67 L864.55 600.04 L859.87 598.42 L855.21 596.79 L850.54 595.16 L845.88 593.54 L841.22 591.91 L836.57 590.28 L831.92 588.65 L827.28 587.03 L822.64 585.4 L818.01 583.77 L813.38 582.15 L808.77 580.52 L804.16 578.89 L799.55 577.27 L794.96 575.64 L790.37 574.01 L785.79 572.38 L781.22 570.76 L776.66 569.13 L772.11 567.5 L767.57 565.88 L763.04 564.25 L758.52 562.62 L754.01 561 L749.51 559.37 L745.02 557.74 L740.55 556.12 L736.09 554.49 L731.64 552.86 L727.2 551.23 L722.78 549.61 L718.37 547.98 L713.97 546.35 L709.59 544.73 L705.22 543.1 L700.87 541.47 L696.53 539.85 L692.21 538.22 L687.91 536.59 L683.62 534.96 L679.35 533.34 L675.09 531.71 L670.85 530.08 L666.63 528.46 L662.43 526.83 L658.25 525.2 L654.08 523.58 L649.94 521.95 L645.81 520.32 L641.7 518.69 L637.61 517.07 L633.54 515.44 L629.5 513.81 L625.47 512.19 L621.47 510.56 L617.48 508.93 L613.52 507.3 L609.58 505.68 L605.66 504.05 L601.76 502.42 L597.89 500.8 L594.04 499.17 L590.21 497.54 L586.41 495.92 L582.63 494.29 L578.88 492.66 L575.15 491.03 L571.45 489.41 L567.77 487.78 L564.11 486.15 L560.48 484.53 L556.88 482.9 L553.3 481.27 L549.76 479.65 L546.23 478.02 L542.74 476.39 L539.27 474.76 L535.83 473.14 L532.42 471.51 L529.03 469.88 L525.67 468.26 L522.35 466.63 L519.05 465 L515.78 463.38 L512.54 461.75 L509.33 460.12 L506.15 458.5 L503 456.87 L499.88 455.24 L496.79 453.61 L493.73 451.99 L490.7 450.36 L487.71 448.73 L484.74 447.11 L481.81 445.48 L478.91 443.85 L476.04 442.23 L473.2 440.6 L470.4 438.97 L467.63 437.34 L464.89 435.72 L462.19 434.09 L459.52 432.46 L456.88 430.84 L454.28 429.21 L451.71 427.58 L449.17 425.95 L446.67 424.33 L444.21 422.7 L441.78 421.07 L439.38 419.45 L437.02 417.82 L434.7 416.19 L432.41 414.57 L430.15 412.94 L427.94 411.31 L425.76 409.69 L423.61 408.06 L421.5 406.43 L419.43 404.8 L417.39 403.18 L415.39 401.55 L413.43 399.92 L411.51 398.3 L409.62 396.67 L407.77 395.04 L405.96 393.41 L404.19 391.79 L402.45 390.16 L400.75 388.53 L399.09 386.91 L397.47 385.28 L395.89 383.65 L394.34 382.03 L392.84 380.4 L391.37 378.77 L389.94 377.14 L388.55 375.52 L387.2 373.89 L385.89 372.26 L384.62 370.64 L383.38 369.01 L382.19 367.38 L381.04 365.76 L379.92 364.13 L378.85 362.5 L377.82 360.88 L376.82 359.25 L375.87 357.62 L374.95 355.99 L374.08 354.37 L373.25 352.74 L372.45 351.11 L371.7 349.49 L370.99 347.86 L370.32 346.23 L369.68 344.61 L369.09 342.98 L368.54 341.35 L368.03 339.72 L367.56 338.1 L367.13 336.47 L366.75 334.84 L366.4 333.22 L366.09 331.59 L365.83 329.96 L365.6 328.33 L365.42 326.71 L365.27 325.08 L365.17 323.45 L365.11 321.83 L365.09 320.2 L365.11 318.57 L365.17 316.95 L365.27 315.32 L365.42 313.69 L365.6 312.06 L365.83 310.44 L366.09 308.81 L366.4 307.18 L366.75 305.56 L367.13 303.93 L367.56 302.3 L368.03 300.68 L368.54 299.05 L369.09 297.42 L369.68 295.79 L370.32 294.17 L370.99 292.54 L371.7 290.91 L372.45 289.29 L373.25 287.66 L374.08 286.03 L374.95 284.41 L375.87 282.78 L376.82 281.15 L377.82 279.52 L378.85 277.9 L379.92 276.27 L381.04 274.64 L382.19 273.02 L383.38 271.39 L384.62 269.76 L385.89 268.14 L387.2 266.51 L388.55 264.88 L389.94 263.25 L391.37 261.63 L392.84 260 L394.34 258.37 L395.89 256.75 L397.47 255.12 L399.09 253.49 L400.75 251.87 L402.45 250.24 L404.19 248.61 L405.96 246.98 L407.77 245.36 L409.62 243.73 L411.51 242.1 L413.43 240.48 L415.39 238.85 L417.39 237.22 L419.43 235.6 L421.5 233.97 L423.61 232.34 L425.76 230.71 L427.94 229.09 L430.15 227.46 L432.41 225.83 L434.7 224.21 L437.02 222.58 L439.38 220.95 L441.78 219.33 L444.21 217.7 L446.67 216.07 L449.17 214.44 L451.71 212.82 L454.28 211.19 L456.88 209.56 L459.52 207.94 L462.19 206.31 L464.89 204.68 L467.63 203.06 L470.4 201.43 L473.2 199.8 L476.04 198.17 L478.91 196.55 L481.81 194.92 L484.74 193.29 L487.71 191.67 L490.7 190.04 L493.73 188.41 L496.79 186.79 L499.88 185.16 L503 183.53 L506.15 181.91 L509.33 180.28 L512.54 178.65 L515.78 177.02 L519.05 175.4 L522.35 173.77 L525.67 172.14 L529.03 170.52 L532.42 168.89 L535.83 167.26 L539.27 165.63 L542.74 164.01 L546.23 162.38 L549.76 160.75 L553.3 159.13 L556.88 157.5 L560.48 155.87 L564.11 154.25 L567.77 152.62 L571.45 150.99 L575.15 149.36 L578.88 147.74 L582.63 146.11 L586.41 144.48 L590.21 142.86 L594.04 141.23 L597.89 139.6 L601.76 137.98 L605.66 136.35 L609.58 134.72 L613.52 133.09 L617.48 131.47 L621.47 129.84 L625.47 128.21 L629.5 126.59 L633.54 124.96 L637.61 123.33 L641.7 121.71 L645.81 120.08 L649.94 118.45 L654.08 116.82 L658.25 115.2 L662.43 113.57 L666.63 111.94 L670.85 110.32 L675.09 108.69 L679.35 107.06 L683.62 105.44 L687.91 103.81 L692.21 102.18 L696.53 100.55 L700.87 98.93 L705.22 97.3 L709.59 95.67 L713.97 94.05 L718.37 92.42 L722.78 90.79 L727.2 89.17 L731.64 87.54 L736.09 85.91 L740.55 84.28 L745.02 82.66 L749.51 81.03 L754.01 79.4 L758.52 77.78 L763.04 76.15 L767.57 74.52 L772.11 72.9 L776.66 71.27 L781.22 69.64 L785.79 68.01 L790.37 66.39 L794.96 64.76 L799.55 63.13 L804.16 61.51 L808.77 59.88 L813.38 58.25 L818.01 56.63 L822.64 55 L827.28 53.37 L831.92 51.75 L836.57 50.12 L841.22 48.49 L845.88 46.86 L850.54 45.24 L855.21 43.61 L859.87 41.98 L864.55 40.36 L869.22 38.73 L873.9 37.1 L878.58 35.47 L883.26 33.85 L887.95 32.22 L892.63 30.59 L897.31 28.97 L902 27.34"/>
<path d="M902 613.06 L896.89 611.43 L891.78 609.81 L886.67 608.18 L881.56 606.55 L876.45 604.92 L871.35 603.3 L866.24 601.67 L861.14 600.04 L856.04 598.42 L850.95 596.79 L845.86 595.16 L840.78 593.54 L835.69 591.91 L830.62 590.28 L825.55 588.65 L820.48 587.03 L815.43 585.4 L810.37 583.77 L805.33 582.15 L800.29 580.52 L795.26 578.89 L790.24 577.27 L785.23 575.64 L780.22 574.01 L775.23 572.38 L770.24 570.76 L765.27 569.13 L760.3 567.5 L755.35 565.88 L750.4 564.25 L745.47 562.62 L740.55 561 L735.65 559.37 L730.75 557.74 L725.87 556.12 L721 554.49 L716.15 552.86 L711.31 551.23 L706.48 549.61 L701.67 547.98 L696.88 546.35 L692.1 544.73 L687.33 543.1 L682.59 541.47 L677.85 539.85 L673.14 538.22 L668.44 536.59 L663.77 534.96 L659.11 533.34 L654.46 531.71 L649.84 530.08 L645.24 528.46 L640.65 526.83 L636.09 525.2 L631.54 523.58 L627.02 521.95 L622.52 520.32 L618.04 518.69 L613.58 517.07 L609.14 515.44 L604.72 513.81 L600.33 512.19 L595.96 510.56 L591.62 508.93 L587.29 507.3 L582.99 505.68 L578.72 504.05 L574.47 502.42 L570.24 500.8 L566.04 499.17 L561.87 497.54 L557.72 495.92 L553.6 494.29 L549.5 492.66 L545.44 491.03 L541.39 489.41 L537.38 487.78 L533.39 486.15 L529.44 484.53 L525.51 482.9 L521.61 481.27 L517.73 479.65 L513.89 478.02 L510.08 476.39 L506.29 474.76 L502.54 473.14 L498.82 471.51 L495.12 469.88 L491.46 468.26 L487.83 466.63 L484.23 465 L480.67 463.38 L477.13 461.75 L473.63 460.12 L470.16 458.5 L466.73 456.87 L463.32 455.24 L459.95 453.61 L456.62 451.99 L453.31 450.36 L450.04 448.73 L446.81 447.11 L443.61 445.48 L440.45 443.85 L437.32 442.23 L434.22 440.6 L431.16 438.97 L428.14 437.34 L425.16 435.72 L422.21 434.09 L419.29 432.46 L416.42 430.84 L413.58 429.21 L410.77 427.58 L408.01 425.95 L405.28 424.33 L402.59 422.7 L399.94 421.07 L397.33 419.45 L394.75 417.82 L392.22 416.19 L389.72 414.57 L387.26 412.94 L384.84 411.31 L382.46 409.69 L380.12 408.06 L377.82 406.43 L375.56 404.8 L373.34 403.18 L371.16 401.55 L369.02 399.92 L366.92 398.3 L364.86 396.67 L362.84 395.04 L360.87 393.41 L358.93 391.79 L357.04 390.16 L355.18 388.53 L353.37 386.91 L351.6 385.28 L349.88 383.65 L348.19 382.03 L346.55 380.4 L344.95 378.77 L343.39 377.14 L341.87 375.52 L340.4 373.89 L338.97 372.26 L337.58 370.64 L336.24 369.01 L334.94 367.38 L333.68 365.76 L332.46 364.13 L331.29 362.5 L330.16 360.88 L329.08 359.25 L328.04 357.62 L327.04 355.99 L326.09 354.37 L325.18 352.74 L324.31 351.11 L323.49 349.49 L322.71 347.86 L321.98 346.23 L321.29 344.61 L320.65 342.98 L320.05 341.35 L319.49 339.72 L318.98 338.1 L318.51 336.47 L318.09 334.84 L317.71 333.22 L317.37 331.59 L317.08 329.96 L316.84 328.33 L316.64 326.71 L316.48 325.08 L316.37 323.45 L316.3 321.83 L316.28 320.2 L316.3 318.57 L316.37 316.95 L316.48 315.32 L316.64 313.69 L316.84 312.06 L317.08 310.44 L317.37 308.81 L317.71 307.18 L318.09 305.56 L318.51 303.93 L318.98 302.3 L319.49 300.68 L320.05 299.05 L320.65 297.42 L321.29 295.79 L321.98 294.17 L322.71 292.54 L323.49 290.91 L324.31 289.29 L325.18 287.66 L326.09 286.03 L327.04 284.41 L328.04 282.78 L329.08 281.15 L330.16 279.52 L331.29 277.9 L332.46 276.27 L333.68 274.64 L334.94 273.02 L336.24 271.39 L337.58 269.76 L338.97 268.14 L340.4 266.51 L341.87 264.88 L343.39 263.25 L344.95 261.63 L346.55 260 L348.19 258.37 L349.88 256.75 L351.6 255.12 L353.37 253.49 L355.18 251.87 L357.04 250.24 L358.93 248.61 L360.87 246.98 L362.84 245.36 L364.86 243.73 L366.92 242.1 L369.02 240.48 L371.16 238.85 L373.34 237.22 L375.56 235.6 L377.82 233.97 L380.12 232.34 L382.46 230.71 L384.84 229.09 L387.26 227.46 L389.72 225.83 L392.22 224.21 L394.75 222.58 L397.33 220.95 L399.94 219.33 L402.59 217.7 L405.28 216.07 L408.01 214.44 L410.77 212.82 L413.58 211.19 L416.42 209.56 L419.29 207.94 L422.21 206.31 L425.16 204.68 L428.14 203.06 L431.16 201.43 L434.22 199.8 L437.32 198.17 L440.45 196.55 L443.61 194.92 L446.81 193.29 L450.04 191.67 L453.31 190.04 L456.62 188.41 L459.95 186.79 L463.32 185.16 L466.73 183.53 L470.16 181.91 L473.63 180.28 L477.13 178.65 L480.67 177.02 L484.23 175.4 L487.83 173.77 L491.46 172.14 L495.12 170.52 L498.82 168.89 L502.54 167.26 L506.29 165.63 L510.08 164.01 L513.89 162.38 L517.73 160.75 L521.61 159.13 L525.51 157.5 L529.44 155.87 L533.39 154.25 L537.38 152.62 L541.39 150.99 L545.44 149.36 L549.5 147.74 L553.6 146.11 L557.72 144.48 L561.87 142.86 L566.04 141.23 L570.24 139.6 L574.47 137.98 L578.72 136.35 L582.99 134.72 L587.29 133.09 L591.62 131.47 L595.96 129.84 L600.33 128.21 L604.72 126.59 L609.14 124.96 L613.58 123.33 L618.04 121.71 L622.52 120.08 L627.02 118.45 L631.54 116.82 L636.09 115.2 L640.65 113.57 L645.24 111.94 L649.84 110.32 L654.46 108.69 L659.11 107.06 L663.77 105.44 L668.44 103.81 L673.14 102.18 L677.85 100.55 L682.59 98.93 L687.33 97.3 L692.1 95.67 L696.88 94.05 L701.67 92.42 L706.48 90.79 L711.31 89.17 L716.15 87.54 L721 85.91 L725.87 84.28 L730.75 82.66 L735.65 81.03 L740.55 79.4 L745.47 77.78 L750.4 76.15 L755.35 74.52 L760.3 72.9 L765.27 71.27 L770.24 69.64 L775.23 68.01 L780.22 66.39 L785.23 64.76 L790.24 63.13 L795.26 61.51 L800.29 59.88 L805.33 58.25 L810.37 56.63 L815.43 55 L820.48 53.37 L825.55 51.75 L830.62 50.12 L835.69 48.49 L840.78 46.86 L845.86 45.24 L850.95 43.61 L856.04 41.98 L861.14 40.36 L866.24 38.73 L871.35 37.1 L876.45 35.47 L881.56 33.85 L886.67 32.22 L891.78 30.59 L896.89 28.97 L902 27.34"/>
<path d="M750.4 564 H1053.6"/>
<path d="M609.14 515 H1194.86"/>
<path d="M487.83 467 H1316.17"/>
<path d="M394.75 418 H1409.25"/>
<path d="M336.24 369 H1467.76"/>
<path d="M316.28 320 H1487.72"/>
<path d="M336.24 271 H1467.76"/>
<path d="M394.75 223 H1409.25"/>
<path d="M487.83 174 H1316.17"/>
<path d="M609.14 125 H1194.86"/>
<path d="M750.4 76 H1053.6"/>
</g>
<g fill="none" stroke="#7a7a7a" stroke-width="1" stroke-dasharray="1 2">
<path d="M316.7 300 L317.01 299 L317.3 297.72 L317.63 296.18 L318.06 294.46 L318.67 292.6 L319.52 290.65 L320.68 288.67 L322.2 286.7 L324.02 284.75 L326.05 282.77 L328.32 280.75 L330.86 278.64 L333.71 276.42 L336.89 274.08 L340.44 271.58 L344.4 268.9 L348.9 265.97 L353.96 262.77 L359.46 259.39 L365.26 255.89 L371.24 252.35 L377.26 248.84 L383.19 245.44 L388.9 242.2 L394.45 239.09 L400 236.03 L405.55 233.02 L411.1 230.06 L416.65 227.17 L422.2 224.34 L427.75 221.58 L433.3 218.9 L438.86 216.3 L444.42 213.79 L449.98 211.35 L455.55 208.97 L461.12 206.65 L466.68 204.39 L472.24 202.17 L477.8 200 L483.35 197.91 L488.9 195.92 L494.45 194 L500 192.12 L505.55 190.26 L511.1 188.37 L516.65 186.43 L522.2 184.4 L527.8 182.25 L533.48 180 L539.18 177.68 L544.87 175.34 L550.51 173.03 L556.05 170.79 L561.46 168.67 L566.7 166.7 L571.69 164.93 L576.44 163.32 L581.04 161.83 L585.55 160.41 L590.06 159.01 L594.66 157.57 L599.41 156.05 L604.4 154.4 L609.64 152.6 L615.05 150.7 L620.59 148.73 L626.23 146.71 L631.92 144.69 L637.62 142.7 L643.3 140.75 L648.9 138.9 L654.45 137.11 L660 135.34 L665.55 133.61 L671.1 131.91 L676.65 130.25 L682.2 128.64 L687.75 127.09 L693.3 125.6 L698.93 124.15 L704.68 122.71 L710.47 121.32 L716.24 119.98 L721.93 118.72 L727.46 117.56 L732.77 116.51 L737.8 115.6 L742.57 114.79 L747.17 114.05 L751.6 113.4 L755.84 112.86 L759.92 112.45 L763.82 112.19 L767.55 112.1 L771.1 112.2 L774.48 112.52 L777.69 113.06 L780.73 113.78 L783.59 114.64 L786.28 115.62 L788.79 116.68 L791.13 117.78 L793.3 118.9 L795.25 120.07 L796.96 121.34 L798.47 122.69 L799.82 124.11 L801.05 125.56 L802.19 127.04 L803.3 128.53 L804.4 130 L805.49 131.56 L806.54 133.26 L807.53 135.03 L808.44 136.79 L809.27 138.47 L810 139.98 L810.61 141.25 L811.1 142.2"/>
<path d="M454.7 441.3 L452.84 438.83 L450.28 435.57 L447.22 431.69 L443.87 427.37 L440.43 422.77 L437.12 418.06 L434.14 413.41 L431.7 409 L429.68 404.68 L427.84 400.23 L426.18 395.7 L424.72 391.14 L423.47 386.59 L422.42 382.1 L421.6 377.72 L421 373.5 L420.62 369.44 L420.43 365.5 L420.45 361.66 L420.69 357.89 L421.16 354.16 L421.86 350.45 L422.8 346.74 L424 343 L425.43 339.32 L427.07 335.76 L428.95 332.26 L431.06 328.74 L433.43 325.16 L436.07 321.43 L438.99 317.5 L442.2 313.3 L445.76 308.72 L449.67 303.76 L453.89 298.57 L458.36 293.25 L463.04 287.94 L467.87 282.76 L472.81 277.84 L477.8 273.3 L482.97 269.13 L488.44 265.19 L494.1 261.45 L499.86 257.88 L505.65 254.42 L511.36 251.05 L516.91 247.72 L522.2 244.4 L527.2 241.13 L531.96 237.96 L536.57 234.87 L541.1 231.85 L545.63 228.87 L550.24 225.92 L555 222.97 L560 220 L565.23 217 L570.63 213.97 L576.16 210.94 L581.78 207.94 L587.45 204.99 L593.14 202.11 L598.8 199.34 L604.4 196.7 L609.96 194.18 L615.52 191.76 L621.08 189.42 L626.65 187.17 L632.22 185 L637.78 182.9 L643.34 180.87 L648.9 178.9 L654.45 177.01 L660 175.21 L665.55 173.49 L671.1 171.84 L676.65 170.24 L682.2 168.67 L687.75 167.13 L693.3 165.6 L698.86 164.1 L704.42 162.65 L709.98 161.24 L715.55 159.86 L721.12 158.5 L726.68 157.14 L732.24 155.78 L737.8 154.4 L743.6 152.95 L749.74 151.41 L756.02 149.84 L762.22 148.29 L768.15 146.81 L773.6 145.45 L778.35 144.26 L782.2 143.3 L785.07 142.58 L787.13 142.07 L788.53 141.73 L789.43 141.51 L789.97 141.37 L790.33 141.29 L790.66 141.21 L791.1 141.1"/>
<path d="M488 445.3 L486.31 442.49 L483.97 438.76 L481.16 434.31 L478.11 429.37 L474.99 424.15 L472.02 418.87 L469.39 413.75 L467.3 409 L465.67 404.53 L464.26 400.07 L463.07 395.64 L462.08 391.21 L461.29 386.79 L460.69 382.37 L460.26 377.94 L460 373.5 L459.87 369 L459.86 364.43 L460.01 359.83 L460.35 355.24 L460.92 350.7 L461.77 346.25 L462.91 341.94 L464.4 337.8 L466.24 333.89 L468.41 330.2 L470.87 326.66 L473.61 323.2 L476.58 319.76 L479.78 316.27 L483.16 312.68 L486.7 308.9 L490.44 304.93 L494.44 300.84 L498.65 296.64 L503.06 292.39 L507.65 288.13 L512.38 283.88 L517.24 279.69 L522.2 275.6 L527.38 271.59 L532.85 267.62 L538.53 263.69 L544.31 259.79 L550.12 255.92 L555.84 252.07 L561.4 248.23 L566.7 244.4 L571.69 240.57 L576.44 236.74 L581.04 232.91 L585.55 229.11 L590.06 225.35 L594.66 221.63 L599.41 217.98 L604.4 214.4 L609.64 210.85 L615.05 207.3 L620.59 203.79 L626.23 200.34 L631.92 196.98 L637.62 193.75 L643.3 190.68 L648.9 187.8 L654.45 185.13 L660 182.64 L665.55 180.31 L671.1 178.11 L676.65 176.01 L682.2 173.98 L687.75 171.98 L693.3 170 L699.16 167.97 L705.46 165.9 L711.94 163.86 L718.32 161.89 L724.37 160.06 L729.8 158.43 L734.37 157.05 L737.8 156"/>
<path d="M1484 295 L1483.56 296.78 L1483.02 299.16 L1482.37 301.98 L1481.62 305.12 L1480.81 308.44 L1479.92 311.78 L1478.98 315.02 L1478 318 L1477.02 320.81 L1476.05 323.62 L1475.04 326.41 L1473.96 329.19 L1472.75 331.94 L1471.39 334.66 L1469.82 337.35 L1468 340 L1465.92 342.62 L1463.6 345.21 L1461.08 347.78 L1458.39 350.31 L1455.58 352.81 L1452.67 355.26 L1449.7 357.66 L1446.7 360 L1443.69 362.23 L1440.65 364.32 L1437.54 366.33 L1434.33 368.31 L1431 370.32 L1427.53 372.4 L1423.87 374.61 L1420 377 L1415.77 379.66 L1411.15 382.56 L1406.26 385.62 L1401.27 388.75 L1396.3 391.84 L1391.51 394.81 L1387.03 397.56 L1383 400 L1379.3 402.19 L1375.73 404.26 L1372.34 406.18 L1369.19 407.94 L1366.33 409.52 L1363.8 410.9 L1361.68 412.07 L1360 413"/>
<path d="M1180 140 L1185.54 141.83 L1193.05 144.27 L1202 147.16 L1211.88 150.39 L1222.14 153.8 L1232.27 157.26 L1241.73 160.64 L1250 163.8 L1257.16 166.76 L1263.75 169.66 L1269.92 172.55 L1275.83 175.45 L1281.64 178.41 L1287.5 181.46 L1293.57 184.65 L1300 188 L1306.86 191.56 L1314.02 195.32 L1321.36 199.21 L1328.77 203.2 L1336.12 207.22 L1343.31 211.23 L1350.21 215.17 L1356.7 219 L1363.05 222.92 L1369.48 227.07 L1375.82 231.3 L1381.89 235.44 L1387.52 239.34 L1392.53 242.84 L1396.75 245.78 L1400 248"/>
</g>
<g font-family="Liberation Sans, sans-serif" font-size="11.0" fill="#949494">
<text x="890.77" y="25" textLength="18.57" lengthAdjust="spacingAndGlyphs">+90</text>
<circle cx="913.63" cy="17.4" r="0.9" fill="none" stroke="#8a8a8a" stroke-width="0.7"/>
<text x="890.77" y="123.3" textLength="18.57" lengthAdjust="spacingAndGlyphs">+60</text>
<circle cx="913.63" cy="115.7" r="0.9" fill="none" stroke="#8a8a8a" stroke-width="0.7"/>
<text x="890.77" y="221" textLength="18.57" lengthAdjust="spacingAndGlyphs">+30</text>
<circle cx="913.63" cy="213.4" r="0.9" fill="none" stroke="#8a8a8a" stroke-width="0.7"/>
<text x="893.57" y="330" textLength="12.97" lengthAdjust="spacingAndGlyphs">+0</text>
<circle cx="910.83" cy="322.4" r="0.9" fill="none" stroke="#8a8a8a" stroke-width="0.7"/>
<text x="890.77" y="428" textLength="18.57" lengthAdjust="spacingAndGlyphs">−30</text>
<circle cx="913.63" cy="420.4" r="0.9" fill="none" stroke="#8a8a8a" stroke-width="0.7"/>
<text x="890.77" y="526.6" textLength="18.57" lengthAdjust="spacingAndGlyphs">−60</text>
<circle cx="913.63" cy="519" r="0.9" fill="none" stroke="#8a8a8a" stroke-width="0.7"/>
<text x="890.77" y="624" textLength="18.57" lengthAdjust="spacingAndGlyphs">−90</text>
<circle cx="913.63" cy="616.4" r="0.9" fill="none" stroke="#8a8a8a" stroke-width="0.7"/>
<text x="1473.69" y="330" textLength="24.16" lengthAdjust="spacingAndGlyphs">+180</text>
<circle cx="1502.15" cy="322.4" r="0.9" fill="none" stroke="#8a8a8a" stroke-width="0.7"/>
<text x="1376.07" y="330" textLength="24.16" lengthAdjust="spacingAndGlyphs">+210</text>
<circle cx="1404.53" cy="322.4" r="0.9" fill="none" stroke="#8a8a8a" stroke-width="0.7"/>
<text x="1278.45" y="330" textLength="24.16" lengthAdjust="spacingAndGlyphs">+240</text>
<circle cx="1306.91" cy="322.4" r="0.9" fill="none" stroke="#8a8a8a" stroke-width="0.7"/>
<text x="1180.83" y="330" textLength="24.16" lengthAdjust="spacingAndGlyphs">+270</text>
<circle cx="1209.29" cy="322.4" r="0.9" fill="none" stroke="#8a8a8a" stroke-width="0.7"/>
<text x="1083.21" y="330" textLength="24.16" lengthAdjust="spacingAndGlyphs">+300</text>
<circle cx="1111.67" cy="322.4" r="0.9" fill="none" stroke="#8a8a8a" stroke-width="0.7"/>
<text x="985.59" y="330" textLength="24.16" lengthAdjust="spacingAndGlyphs">+330</text>
<circle cx="1014.05" cy="322.4" r="0.9" fill="none" stroke="#8a8a8a" stroke-width="0.7"/>
<text x="793.15" y="330" textLength="18.57" lengthAdjust="spacingAndGlyphs">+30</text>
<circle cx="816.01" cy="322.4" r="0.9" fill="none" stroke="#8a8a8a" stroke-width="0.7"/>
<text x="695.53" y="330" textLength="18.57" lengthAdjust="spacingAndGlyphs">+60</text>
<circle cx="718.39" cy="322.4" r="0.9" fill="none" stroke="#8a8a8a" stroke-width="0.7"/>
<text x="597.91" y="330" textLength="18.57" lengthAdjust="spacingAndGlyphs">+90</text>
<circle cx="620.77" cy="322.4" r="0.9" fill="none" stroke="#8a8a8a" stroke-width="0.7"/>
<text x="497.49" y="330" textLength="24.16" lengthAdjust="spacingAndGlyphs">+120</text>
<circle cx="525.95" cy="322.4" r="0.9" fill="none" stroke="#8a8a8a" stroke-width="0.7"/>
<text x="399.87" y="330" textLength="24.16" lengthAdjust="spacingAndGlyphs">+150</text>
<circle cx="428.33" cy="322.4" r="0.9" fill="none" stroke="#8a8a8a" stroke-width="0.7"/>
<text x="302.25" y="330" textLength="24.16" lengthAdjust="spacingAndGlyphs">+180</text>
<circle cx="330.71" cy="322.4" r="0.9" fill="none" stroke="#8a8a8a" stroke-width="0.7"/>
</g>
<g fill="none" stroke-linecap="round" stroke-linejoin="round">
<path d="M637.9 114.1 L639.6 113.78 L641.87 113.35 L644.56 112.85 L647.56 112.28 L650.73 111.67 L653.95 111.05 L657.08 110.41 L660 109.8 L662.77 109.2 L665.53 108.6 L668.29 107.98 L671.06 107.35 L673.83 106.69 L676.61 106 L679.4 105.27 L682.2 104.5 L685.01 103.68 L687.83 102.81 L690.66 101.9 L693.49 100.96 L696.34 99.99 L699.21 99 L702.09 98.01 L705 97 L707.99 95.97 L711.08 94.89 L714.22 93.78 L717.37 92.66 L720.46 91.55 L723.45 90.46 L726.28 89.4 L728.9 88.4 L731.29 87.45 L733.5 86.54 L735.56 85.66 L737.51 84.81 L739.39 83.97 L741.24 83.14 L743.09 82.32 L745 81.5 L746.96 80.68 L748.94 79.86 L750.93 79.05 L752.88 78.24 L754.79 77.46 L756.63 76.68 L758.37 75.93 L760 75.2 L761.52 74.48 L762.95 73.76 L764.31 73.06 L765.59 72.37 L766.79 71.71 L767.93 71.09 L768.99 70.52 L770 70 L770.95 69.53 L771.84 69.11 L772.67 68.72 L773.42 68.38 L774.1 68.07 L774.7 67.81 L775.2 67.58 L775.6 67.4" stroke="#77d046" stroke-width="2.2"/>
<path d="M1027 66.6 L1026.5 66.67 L1025.79 66.77 L1024.95 66.88 L1024.03 67 L1023.11 67.14 L1022.25 67.28 L1021.53 67.44 L1021 67.6 L1020.61 67.74 L1020.25 67.86 L1019.97 67.97 L1019.78 68.1 L1019.71 68.27 L1019.79 68.49 L1020.05 68.79 L1020.5 69.2 L1021.07 69.68 L1021.69 70.21 L1022.43 70.79 L1023.34 71.45 L1024.5 72.19 L1025.95 73.02 L1027.76 73.95 L1030 75 L1032.77 76.22 L1036.06 77.63 L1039.75 79.18 L1043.72 80.8 L1047.85 82.45 L1052.02 84.07 L1056.11 85.6 L1060 87 L1063.65 88.24 L1067.15 89.36 L1070.59 90.4 L1074.06 91.41 L1077.65 92.43 L1081.45 93.5 L1085.53 94.68 L1090 96 L1095.04 97.52 L1100.66 99.24 L1106.66 101.07 L1112.81 102.95 L1118.93 104.8 L1124.8 106.56 L1130.23 108.15 L1135 109.5 L1139.2 110.64 L1143.05 111.64 L1146.59 112.52 L1149.81 113.28 L1152.75 113.92 L1155.41 114.47 L1157.83 114.93 L1160 115.3 L1161.87 115.54 L1163.38 115.61 L1164.6 115.55 L1165.56 115.41 L1166.33 115.23 L1166.96 115.04 L1167.5 114.88 L1168 114.8" stroke="#77d046" stroke-width="2.2"/>
<path d="M945.2 45.75 L947.12 46.45 L949.68 47.4 L952.72 48.53 L956.1 49.78 L959.67 51.09 L963.28 52.39 L966.77 53.64 L970 54.75 L973.03 55.77 L976.02 56.77 L978.99 57.74 L981.96 58.69 L984.93 59.61 L987.91 60.52 L990.93 61.39 L994 62.25 L997.08 63.05 L1000.15 63.79 L1003.23 64.49 L1006.34 65.17 L1009.51 65.86 L1012.74 66.59 L1016.06 67.38 L1019.5 68.25 L1023.08 69.21 L1026.8 70.25 L1030.62 71.34 L1034.5 72.47 L1038.42 73.62 L1042.33 74.77 L1046.2 75.9 L1050 77 L1053.94 78.13 L1058.14 79.34 L1062.43 80.58 L1066.66 81.8 L1070.64 82.95 L1074.22 83.98 L1077.23 84.85 L1079.5 85.5" stroke="#77d046" stroke-width="1.2" stroke-opacity="0.85" stroke-dasharray="1.1 1.4"/>
<path d="M931.7 43.2 L945.2 45.75" stroke="#77d046" stroke-width="1.5"/>
<path d="M1019.5 68.25 L1017.49 67.67 L1014.78 66.83 L1011.54 65.82 L1007.97 64.73 L1004.24 63.67 L1000.55 62.71 L997.07 61.96 L994 61.5 L991.17 61.33 L988.33 61.36 L985.56 61.55 L982.89 61.88 L980.4 62.29 L978.13 62.77 L976.14 63.26 L974.5 63.75 L973.26 64.26 L972.38 64.83 L971.81 65.47 L971.45 66.14 L971.24 66.84 L971.11 67.56 L970.97 68.29 L970.75 69 L970.46 69.63 L970.16 70.17 L969.89 70.67 L969.67 71.2 L969.55 71.84 L969.54 72.64 L969.68 73.67 L970 75 L970.52 76.63 L971.22 78.52 L972.08 80.61 L973.05 82.88 L974.11 85.28 L975.22 87.8 L976.36 90.38 L977.5 93 L978.74 95.88 L980.16 99.14 L981.68 102.62 L983.22 106.12 L984.7 109.49 L986.04 112.55 L987.17 115.11 L988 117" stroke="#77d046" stroke-width="1.2" stroke-opacity="0.85" stroke-dasharray="1.1 1.4"/>
<path d="M988 117 L991.75 126" stroke="#77d046" stroke-width="1.5"/>
<path d="M861.9 174 L893.8 70.6" stroke="#8c8c8c" stroke-width="1"/>
<path d="M635.6 184.9 L653.4 177.9" stroke="#8c8c8c" stroke-width="1"/>
<path d="M783.3 142.9 L791 140.5" stroke="#8c8c8c" stroke-width="1"/>
<path d="M807.6 137 L810.4 142.2" stroke="#8c8c8c" stroke-width="1"/>
</g>
<circle cx="931.7" cy="43.2" r="1.2" fill="#ff5030"/>
<circle cx="991.75" cy="126" r="1.2" fill="#ff5030"/>
<path d="M1080 85.5 h5 M1082.5 83 v5" stroke="#ff2020" stroke-width="1.3"/>
<path d="M1092 90.75 h5 M1094.5 88.25 v5" stroke="#ff2020" stroke-width="1.3"/>
<text x="1080.41" y="94.8" font-family="Liberation Sans, sans-serif" font-size="11.1" fill="#fff" textLength="24.37" lengthAdjust="spacingAndGlyphs">DKD</text>
<g font-family="Liberation Mono, monospace" font-size="13.9" fill="#fff" xml:space="preserve">
<text x="315" y="29.5">UK00BD</text>
<text x="315" y="42.6">Beg: 20251202 21:54:08 (sol = 250.62°)</text>
<text x="315" y="55.7">End: 20251203 06:26:16 (sol = 250.98°)</text>
<text x="315" y="68.8">--------------------------------------</text>
<text x="315" y="81.9">...: 4</text>
<text x="315" y="95">DKD: 2</text>
</g>
<g font-family="Liberation Sans, sans-serif" font-size="30.5" fill="#5a5a5a" stroke="#5a5a5a" stroke-width="0.35">
<text transform="translate(138.6 642.5) rotate(-90)" x="-53.26" y="10.7" textLength="53.26" lengthAdjust="spacingAndGlyphs">APR</text>
<text transform="translate(283.4 643.5) rotate(-90)" x="-57.56" y="10.7" textLength="57.56" lengthAdjust="spacingAndGlyphs">MAY</text>
<text transform="translate(428.5 640.5) rotate(-90)" x="-50.18" y="10.7" textLength="50.18" lengthAdjust="spacingAndGlyphs">JUN</text>
<text transform="translate(568.5 641.5) rotate(-90)" x="-44.03" y="10.7" textLength="44.03" lengthAdjust="spacingAndGlyphs">JUL</text>
<text transform="translate(712.5 641.5) rotate(-90)" x="-59.08" y="10.7" textLength="59.08" lengthAdjust="spacingAndGlyphs">AUG</text>
<text transform="translate(861.5 642.5) rotate(-90)" x="-52.51" y="10.7" textLength="52.51" lengthAdjust="spacingAndGlyphs">SEP</text>
<text transform="translate(1005.6 643.5) rotate(-90)" x="-56.74" y="10.7" textLength="56.74" lengthAdjust="spacingAndGlyphs">OCT</text>
<text transform="translate(1158.6 643.5) rotate(-90)" x="-59.84" y="10.7" textLength="59.84" lengthAdjust="spacingAndGlyphs">NOV</text>
<text transform="translate(1307.8 644.5) rotate(-90)" x="-56.63" y="10.7" textLength="56.63" lengthAdjust="spacingAndGlyphs">DEC</text>
<text transform="translate(1461.5 639.5) rotate(-90)" x="-49.47" y="10.7" textLength="49.47" lengthAdjust="spacingAndGlyphs">JAN</text>
<text transform="translate(1617.8 645.5) rotate(-90)" x="-51.34" y="10.7" textLength="51.34" lengthAdjust="spacingAndGlyphs">FEB</text>
<text transform="translate(1756 644.5) rotate(-90)" x="-60.21" y="10.7" textLength="60.21" lengthAdjust="spacingAndGlyphs">MAR</text>
</g>
<path d="M1250 642.5 V842.5" stroke="#ff0000" stroke-width="2" stroke-dasharray="5 2.35" stroke-dashoffset="3.6"/>
<g>
<rect x="106" y="832" width="23" height="4" fill="#bddf26"/>
<rect x="165" y="832" width="180" height="4" fill="#bddf26"/>
<rect x="366" y="832" width="259" height="4" fill="#bddf26"/>
<rect x="635" y="832" width="150.8" height="4" fill="#bddf26"/>
<rect x="807" y="832" width="92" height="4" fill="#bddf26"/>
<rect x="920" y="832" width="53.1" height="4" fill="#bddf26"/>
<rect x="984" y="832" width="82" height="4" fill="#bddf26"/>
<rect x="1082" y="832" width="120.9" height="4" fill="#bddf26"/>
<rect x="1244.1" y="832" width="81.9" height="4" fill="#bddf26"/>
<rect x="1337" y="832" width="17.9" height="4" fill="#bddf26"/>
<rect x="1381" y="832" width="63" height="4" fill="#bddf26"/>
<rect x="1459.1" y="832" width="52.7" height="4" fill="#bddf26"/>
<rect x="1522.9" y="832" width="24" height="4" fill="#bddf26"/>
<rect x="1724.2" y="832" width="23.7" height="4" fill="#bddf26"/>
<rect x="1758.2" y="832" width="23.7" height="4" fill="#bddf26"/>
<rect x="165" y="816" width="22.9" height="4" fill="#81d34d"/>
<rect x="223.1" y="816" width="62.8" height="4" fill="#81d34d"/>
<rect x="312.1" y="816" width="27.8" height="4" fill="#81d34d"/>
<rect x="366" y="816" width="126" height="4" fill="#81d34d"/>
<rect x="507.9" y="816" width="146.1" height="4" fill="#81d34d"/>
<rect x="704.2" y="816" width="32.7" height="4" fill="#81d34d"/>
<rect x="773" y="816" width="71.8" height="4" fill="#81d34d"/>
<rect x="871" y="816" width="116.9" height="4" fill="#81d34d"/>
<rect x="1003" y="816" width="14" height="4" fill="#81d34d"/>
<rect x="1062" y="816" width="151" height="4" fill="#81d34d"/>
<rect x="1244.1" y="816" width="22.9" height="4" fill="#81d34d"/>
<rect x="1293.1" y="816" width="22.8" height="4" fill="#81d34d"/>
<rect x="1342.1" y="816" width="22.7" height="4" fill="#81d34d"/>
<rect x="1386" y="816" width="43" height="4" fill="#81d34d"/>
<rect x="1459.1" y="816" width="23.7" height="4" fill="#81d34d"/>
<rect x="1548.1" y="816" width="23" height="4" fill="#81d34d"/>
<rect x="165" y="800" width="22.9" height="4" fill="#4ec36b"/>
<rect x="258.1" y="800" width="228.8" height="4" fill="#4ec36b"/>
<rect x="507.9" y="800" width="106.9" height="4" fill="#4ec36b"/>
<rect x="626" y="800" width="91.8" height="4" fill="#4ec36b"/>
<rect x="729.1" y="800" width="96.8" height="4" fill="#4ec36b"/>
<rect x="949" y="800" width="200" height="4" fill="#4ec36b"/>
<rect x="1159.9" y="800" width="88.1" height="4" fill="#4ec36b"/>
<rect x="1258.1" y="800" width="185.9" height="4" fill="#4ec36b"/>
<rect x="1459.1" y="800" width="23.7" height="4" fill="#4ec36b"/>
<rect x="1552" y="800" width="24" height="4" fill="#4ec36b"/>
<rect x="194.1" y="783" width="23.9" height="4" fill="#2ab07f"/>
<rect x="321" y="783" width="185.9" height="4" fill="#2ab07f"/>
<rect x="518" y="783" width="23" height="4" fill="#2ab07f"/>
<rect x="557.1" y="783" width="125.9" height="4" fill="#2ab07f"/>
<rect x="807" y="783" width="24" height="4" fill="#2ab07f"/>
<rect x="954" y="783" width="19.1" height="4" fill="#2ab07f"/>
<rect x="987.9" y="783" width="137" height="4" fill="#2ab07f"/>
<rect x="1155.1" y="783" width="62.8" height="4" fill="#2ab07f"/>
<rect x="1244.1" y="783" width="22.9" height="4" fill="#2ab07f"/>
<rect x="1317" y="783" width="23.9" height="4" fill="#2ab07f"/>
<rect x="1396.1" y="783" width="22.8" height="4" fill="#2ab07f"/>
<rect x="1464" y="783" width="185.9" height="4" fill="#2ab07f"/>
<rect x="341.1" y="767" width="28.8" height="4" fill="#1e9b8a"/>
<rect x="410.1" y="767" width="37.7" height="4" fill="#1e9b8a"/>
<rect x="469" y="767" width="23" height="4" fill="#1e9b8a"/>
<rect x="527.2" y="767" width="18.6" height="4" fill="#1e9b8a"/>
<rect x="562.2" y="767" width="27.8" height="4" fill="#1e9b8a"/>
<rect x="615.9" y="767" width="33.1" height="4" fill="#1e9b8a"/>
<rect x="958.9" y="767" width="29" height="4" fill="#1e9b8a"/>
<rect x="1062" y="767" width="23.9" height="4" fill="#1e9b8a"/>
<rect x="1101" y="767" width="23.9" height="4" fill="#1e9b8a"/>
<rect x="1159.9" y="767" width="34" height="4" fill="#1e9b8a"/>
<rect x="1248" y="767" width="23.9" height="4" fill="#1e9b8a"/>
<rect x="1425.1" y="767" width="86.7" height="4" fill="#1e9b8a"/>
<rect x="420" y="750" width="22.8" height="4" fill="#25858e"/>
<rect x="532" y="750" width="23.9" height="4" fill="#25858e"/>
<rect x="567" y="750" width="23" height="4" fill="#25858e"/>
<rect x="621" y="750" width="120.9" height="4" fill="#25858e"/>
<rect x="969" y="750" width="165.8" height="4" fill="#25858e"/>
<rect x="1185" y="750" width="161" height="4" fill="#25858e"/>
<rect x="1469" y="750" width="24" height="4" fill="#25858e"/>
<rect x="429" y="734" width="23.9" height="4" fill="#2d708e"/>
<rect x="576" y="734" width="157" height="4" fill="#2d708e"/>
<rect x="992.9" y="734" width="112" height="4" fill="#2d708e"/>
<rect x="1116" y="734" width="106.9" height="4" fill="#2d708e"/>
<rect x="1263.1" y="734" width="28.8" height="4" fill="#2d708e"/>
<rect x="1489.1" y="734" width="22.7" height="4" fill="#2d708e"/>
<rect x="591.1" y="718" width="23.7" height="4" fill="#375a8c"/>
<rect x="655" y="718" width="117" height="4" fill="#375a8c"/>
<rect x="1072.1" y="718" width="170.8" height="4" fill="#375a8c"/>
<rect x="1263.1" y="718" width="23.8" height="4" fill="#375a8c"/>
<rect x="596" y="701" width="137" height="4" fill="#424086"/>
<rect x="1091.1" y="701" width="28.8" height="4" fill="#424086"/>
<rect x="1199.2" y="701" width="23.7" height="4" fill="#424086"/>
<rect x="1273.1" y="701" width="52.9" height="4" fill="#424086"/>
<rect x="1110.9" y="685" width="24.1" height="4" fill="#482475"/>
</g>
<g stroke="#fff" stroke-opacity="0.42" stroke-width="2" stroke-dasharray="2 3.48" stroke-dashoffset="1.4">
<path d="M73.9 642.5 V842.5"/>
<path d="M218 642.5 V842.5"/>
<path d="M364.5 642.5 V842.5"/>
<path d="M505 642.5 V842.5"/>
<path d="M650 642.5 V842.5"/>
<path d="M797 642.5 V842.5"/>
<path d="M940 642.5 V842.5"/>
<path d="M1091.1 642.5 V842.5"/>
<path d="M1238.9 642.5 V842.5"/>
<path d="M1394 642.5 V842.5"/>
<path d="M1548.1 642.5 V842.5"/>
<path d="M1687 642.5 V842.5"/>
</g>
<g font-family="Liberation Sans, sans-serif" font-size="10.7" fill="#f4f4f4">
<text x="107.38" y="831.5" textLength="19.84" lengthAdjust="spacingAndGlyphs">KSE</text>
<text x="244.76" y="831.5" textLength="19.89" lengthAdjust="spacingAndGlyphs">ETA</text>
<text x="483.5" y="831.5" textLength="22" lengthAdjust="spacingAndGlyphs">NZC</text>
<text x="699.43" y="831.5" textLength="22.73" lengthAdjust="spacingAndGlyphs">NDA</text>
<text x="843.25" y="831.5" textLength="19.3" lengthAdjust="spacingAndGlyphs">SPE</text>
<text x="934.31" y="831.5" textLength="22.18" lengthAdjust="spacingAndGlyphs">ARD</text>
<text x="1014.18" y="831.5" textLength="21.04" lengthAdjust="spacingAndGlyphs">EGE</text>
<text x="1131.96" y="831.5" textLength="21.09" lengthAdjust="spacingAndGlyphs">NTA</text>
<text x="1271.52" y="831.5" textLength="24.75" lengthAdjust="spacingAndGlyphs">MON</text>
<text x="1332.76" y="831.5" textLength="21.28" lengthAdjust="spacingAndGlyphs">URS</text>
<text x="1401.34" y="831.5" textLength="21.13" lengthAdjust="spacingAndGlyphs">AHY</text>
<text x="1473.07" y="831.5" textLength="24.46" lengthAdjust="spacingAndGlyphs">GUM</text>
<text x="1524.6" y="831.5" textLength="22.19" lengthAdjust="spacingAndGlyphs">OHY</text>
<text x="1725.32" y="831.5" textLength="21.36" lengthAdjust="spacingAndGlyphs">XHE</text>
<text x="1761.39" y="831.5" textLength="16.63" lengthAdjust="spacingAndGlyphs">EVI</text>
<text x="164.9" y="815.5" textLength="21.21" lengthAdjust="spacingAndGlyphs">AVB</text>
<text x="245.81" y="815.5" textLength="18.58" lengthAdjust="spacingAndGlyphs">ELY</text>
<text x="312.31" y="815.5" textLength="23.18" lengthAdjust="spacingAndGlyphs">CAM</text>
<text x="421.25" y="815.5" textLength="21.1" lengthAdjust="spacingAndGlyphs">SSG</text>
<text x="568.45" y="815.5" textLength="20.49" lengthAdjust="spacingAndGlyphs">PCA</text>
<text x="709.42" y="815.5" textLength="22.57" lengthAdjust="spacingAndGlyphs">AUD</text>
<text x="797.2" y="815.5" textLength="21.79" lengthAdjust="spacingAndGlyphs">AUR</text>
<text x="920.31" y="815.5" textLength="21.57" lengthAdjust="spacingAndGlyphs">DSX</text>
<text x="998.36" y="815.5" textLength="22.89" lengthAdjust="spacingAndGlyphs">OCU</text>
<text x="1126.49" y="815.5" textLength="21.82" lengthAdjust="spacingAndGlyphs">OER</text>
<text x="1243.47" y="815.5" textLength="22.67" lengthAdjust="spacingAndGlyphs">DKD</text>
<text x="1293.42" y="815.5" textLength="21.56" lengthAdjust="spacingAndGlyphs">DSV</text>
<text x="1343.44" y="815.5" textLength="19.12" lengthAdjust="spacingAndGlyphs">ALY</text>
<text x="1400.04" y="815.5" textLength="15.32" lengthAdjust="spacingAndGlyphs">ILE</text>
<text x="1461.32" y="815.5" textLength="20.97" lengthAdjust="spacingAndGlyphs">SCC</text>
<text x="1549.44" y="815.5" textLength="19.52" lengthAdjust="spacingAndGlyphs">FEV</text>
<text x="166.59" y="799.5" textLength="19.23" lengthAdjust="spacingAndGlyphs">LYR</text>
<text x="363.32" y="799.5" textLength="19.16" lengthAdjust="spacingAndGlyphs">JMC</text>
<text x="551" y="799.5" textLength="15.79" lengthAdjust="spacingAndGlyphs">JPE</text>
<text x="660.98" y="799.5" textLength="20.84" lengthAdjust="spacingAndGlyphs">PAU</text>
<text x="765.19" y="799.5" textLength="17.83" lengthAdjust="spacingAndGlyphs">NIA</text>
<text x="1040.04" y="799.5" textLength="19.92" lengthAdjust="spacingAndGlyphs">STA</text>
<text x="1193.41" y="799.5" textLength="23.97" lengthAdjust="spacingAndGlyphs">NOO</text>
<text x="1341.18" y="799.5" textLength="24.24" lengthAdjust="spacingAndGlyphs">COM</text>
<text x="1459.63" y="799.5" textLength="22.14" lengthAdjust="spacingAndGlyphs">NCC</text>
<text x="1553.2" y="799.5" textLength="20.41" lengthAdjust="spacingAndGlyphs">FED</text>
<text x="196.27" y="782.5" textLength="17.87" lengthAdjust="spacingAndGlyphs">HVI</text>
<text x="403.36" y="782.5" textLength="17.28" lengthAdjust="spacingAndGlyphs">ARI</text>
<text x="519.58" y="782.5" textLength="20.83" lengthAdjust="spacingAndGlyphs">SZC</text>
<text x="607.45" y="782.5" textLength="20.49" lengthAdjust="spacingAndGlyphs">CAP</text>
<text x="807.5" y="782.5" textLength="21.8" lengthAdjust="spacingAndGlyphs">NUE</text>
<text x="950.58" y="782.5" textLength="21.64" lengthAdjust="spacingAndGlyphs">OCT</text>
<text x="1050.43" y="782.5" textLength="18.34" lengthAdjust="spacingAndGlyphs">ORI</text>
<text x="1174.45" y="782.5" textLength="24.09" lengthAdjust="spacingAndGlyphs">AMO</text>
<text x="1244.61" y="782.5" textLength="21.38" lengthAdjust="spacingAndGlyphs">DPC</text>
<text x="1320.41" y="782.5" textLength="17.18" lengthAdjust="spacingAndGlyphs">XVI</text>
<text x="1396.53" y="782.5" textLength="22.74" lengthAdjust="spacingAndGlyphs">QUA</text>
<text x="1548.68" y="782.5" textLength="21.85" lengthAdjust="spacingAndGlyphs">AAN</text>
<text x="342.44" y="766.5" textLength="21.13" lengthAdjust="spacingAndGlyphs">TAH</text>
<text x="423.09" y="766.5" textLength="16.63" lengthAdjust="spacingAndGlyphs">JEA</text>
<text x="474.34" y="766.5" textLength="12.31" lengthAdjust="spacingAndGlyphs">JIP</text>
<text x="529.2" y="766.5" textLength="19" lengthAdjust="spacingAndGlyphs">PPS</text>
<text x="568.28" y="766.5" textLength="20.83" lengthAdjust="spacingAndGlyphs">ZCS</text>
<text x="621.24" y="766.5" textLength="23.12" lengthAdjust="spacingAndGlyphs">GDR</text>
<text x="959.11" y="766.5" textLength="22.18" lengthAdjust="spacingAndGlyphs">DRA</text>
<text x="1062.19" y="766.5" textLength="22.21" lengthAdjust="spacingAndGlyphs">LUM</text>
<text x="1102.22" y="766.5" textLength="20.95" lengthAdjust="spacingAndGlyphs">RPU</text>
<text x="1165.94" y="766.5" textLength="21.13" lengthAdjust="spacingAndGlyphs">THA</text>
<text x="1249.33" y="766.5" textLength="20.33" lengthAdjust="spacingAndGlyphs">PSU</text>
<text x="1459.92" y="766.5" textLength="21.36" lengthAdjust="spacingAndGlyphs">XCB</text>
<text x="422.89" y="749.5" textLength="17.43" lengthAdjust="spacingAndGlyphs">JRC</text>
<text x="533.4" y="749.5" textLength="21.99" lengthAdjust="spacingAndGlyphs">CAN</text>
<text x="567.74" y="749.5" textLength="20.72" lengthAdjust="spacingAndGlyphs">FAN</text>
<text x="671.34" y="749.5" textLength="19.92" lengthAdjust="spacingAndGlyphs">PER</text>
<text x="1038.71" y="749.5" textLength="20.58" lengthAdjust="spacingAndGlyphs">CTA</text>
<text x="1253.49" y="749.5" textLength="22.02" lengthAdjust="spacingAndGlyphs">HYD</text>
<text x="1469.53" y="749.5" textLength="23.53" lengthAdjust="spacingAndGlyphs">XUM</text>
<text x="430.25" y="733.5" textLength="22.51" lengthAdjust="spacingAndGlyphs">COR</text>
<text x="646.22" y="733.5" textLength="21.56" lengthAdjust="spacingAndGlyphs">SDA</text>
<text x="1040.15" y="733.5" textLength="17.7" lengthAdjust="spacingAndGlyphs">LMI</text>
<text x="1156.4" y="733.5" textLength="20.4" lengthAdjust="spacingAndGlyphs">LEO</text>
<text x="1264.6" y="733.5" textLength="20.59" lengthAdjust="spacingAndGlyphs">EHY</text>
<text x="1489.2" y="733.5" textLength="20.79" lengthAdjust="spacingAndGlyphs">ECV</text>
<text x="593.91" y="717.5" textLength="17.18" lengthAdjust="spacingAndGlyphs">JXA</text>
<text x="703.81" y="717.5" textLength="21.98" lengthAdjust="spacingAndGlyphs">KCG</text>
<text x="1145.33" y="717.5" textLength="22.73" lengthAdjust="spacingAndGlyphs">AND</text>
<text x="1263.42" y="717.5" textLength="22.96" lengthAdjust="spacingAndGlyphs">DAD</text>
<text x="658.13" y="700.5" textLength="16.74" lengthAdjust="spacingAndGlyphs">ERI</text>
<text x="1098.47" y="700.5" textLength="20.25" lengthAdjust="spacingAndGlyphs">SLD</text>
<text x="1200.47" y="700.5" textLength="21.85" lengthAdjust="spacingAndGlyphs">ORS</text>
<text x="1287.19" y="700.5" textLength="23.43" lengthAdjust="spacingAndGlyphs">GEM</text>
<text x="1111.28" y="684.5" textLength="23.23" lengthAdjust="spacingAndGlyphs">KUM</text>
</g>
<g stroke="#fff" stroke-width="2">
<path d="M112.7 834 h8 M116.7 830 v8"/>
<path d="M240.7 834 h8 M244.7 830 v8"/>
<path d="M510.7 834 h8 M514.7 830 v8"/>
<path d="M706.8 834 h8 M710.8 830 v8"/>
<path d="M832.8 834 h8 M836.8 830 v8"/>
<path d="M961.9 834 h8 M965.9 830 v8"/>
<path d="M985.8 834 h8 M989.8 830 v8"/>
<path d="M1115.9 834 h8 M1119.9 830 v8"/>
<path d="M1294.7 834 h8 M1298.7 830 v8"/>
<path d="M1342 834 h8 M1346 830 v8"/>
<path d="M1412.7 834 h8 M1416.7 830 v8"/>
<path d="M1481.8 834 h8 M1485.8 830 v8"/>
<path d="M1530.9 834 h8 M1534.9 830 v8"/>
<path d="M1731.9 834 h8 M1735.9 830 v8"/>
<path d="M1765.7 834 h8 M1769.7 830 v8"/>
<path d="M171.9 818 h8 M175.9 814 v8"/>
<path d="M255.8 818 h8 M259.8 814 v8"/>
<path d="M322.7 818 h8 M326.7 814 v8"/>
<path d="M436.8 818 h8 M440.8 814 v8"/>
<path d="M599 818 h8 M603 814 v8"/>
<path d="M716.7 818 h8 M720.7 814 v8"/>
<path d="M792.9 818 h8 M796.9 814 v8"/>
<path d="M938.8 818 h8 M942.8 814 v8"/>
<path d="M1006 818 h8 M1010 814 v8"/>
<path d="M1152.8 818 h8 M1156.8 814 v8"/>
<path d="M1250.8 818 h8 M1254.8 814 v8"/>
<path d="M1300 818 h8 M1304 814 v8"/>
<path d="M1348.8 818 h8 M1352.8 814 v8"/>
<path d="M1402.8 818 h8 M1406.8 814 v8"/>
<path d="M1466.8 818 h8 M1470.8 814 v8"/>
<path d="M1554.9 818 h8 M1558.9 814 v8"/>
<path d="M173.8 802 h8 M177.8 798 v8"/>
<path d="M377.8 802 h8 M381.8 798 v8"/>
<path d="M544.7 802 h8 M548.7 798 v8"/>
<path d="M681.7 802 h8 M685.7 798 v8"/>
<path d="M740.8 802 h8 M744.8 798 v8"/>
<path d="M1074.9 802 h8 M1078.9 798 v8"/>
<path d="M1216.8 802 h8 M1220.8 798 v8"/>
<path d="M1304.9 802 h8 M1308.9 798 v8"/>
<path d="M1466.8 802 h8 M1470.8 798 v8"/>
<path d="M1560 802 h8 M1564 798 v8"/>
<path d="M202 785 h8 M206 781 v8"/>
<path d="M399.7 785 h8 M403.7 781 v8"/>
<path d="M524.7 785 h8 M528.7 781 v8"/>
<path d="M638.8 785 h8 M642.8 781 v8"/>
<path d="M814.9 785 h8 M818.9 781 v8"/>
<path d="M959 785 h8 M963 781 v8"/>
<path d="M1039.8 785 h8 M1043.8 781 v8"/>
<path d="M1187.8 785 h8 M1191.8 781 v8"/>
<path d="M1250.8 785 h8 M1254.8 781 v8"/>
<path d="M1324.9 785 h8 M1328.9 781 v8"/>
<path d="M1402.8 785 h8 M1406.8 781 v8"/>
<path d="M1545.8 785 h8 M1549.8 781 v8"/>
<path d="M355.8 769 h8 M359.8 765 v8"/>
<path d="M426 769 h8 M430 765 v8"/>
<path d="M475.7 769 h8 M479.7 765 v8"/>
<path d="M534.8 769 h8 M538.8 765 v8"/>
<path d="M570.8 769 h8 M574.8 765 v8"/>
<path d="M630.8 769 h8 M634.8 765 v8"/>
<path d="M973.7 769 h8 M977.7 765 v8"/>
<path d="M1069.6 769 h8 M1073.6 765 v8"/>
<path d="M1108.9 769 h8 M1112.9 765 v8"/>
<path d="M1177.9 769 h8 M1181.9 765 v8"/>
<path d="M1255.7 769 h8 M1259.7 765 v8"/>
<path d="M1466.8 769 h8 M1470.8 765 v8"/>
<path d="M426.9 752 h8 M430.9 748 v8"/>
<path d="M539.9 752 h8 M543.9 748 v8"/>
<path d="M573.7 752 h8 M577.7 748 v8"/>
<path d="M703.9 752 h8 M707.9 748 v8"/>
<path d="M1093.9 752 h8 M1097.9 748 v8"/>
<path d="M1270.8 752 h8 M1274.8 748 v8"/>
<path d="M1476.7 752 h8 M1480.7 748 v8"/>
<path d="M436.8 736 h8 M440.8 732 v8"/>
<path d="M630.8 736 h8 M634.8 732 v8"/>
<path d="M1038.9 736 h8 M1042.9 732 v8"/>
<path d="M1167.8 736 h8 M1171.8 732 v8"/>
<path d="M1274.9 736 h8 M1278.9 732 v8"/>
<path d="M1496.9 736 h8 M1500.9 732 v8"/>
<path d="M599 720 h8 M603 716 v8"/>
<path d="M726.8 720 h8 M730.8 716 v8"/>
<path d="M1187.8 720 h8 M1191.8 716 v8"/>
<path d="M1270.8 720 h8 M1274.8 716 v8"/>
<path d="M686.8 703 h8 M690.8 699 v8"/>
<path d="M1101.7 703 h8 M1105.7 699 v8"/>
<path d="M1206.9 703 h8 M1210.9 699 v8"/>
<path d="M1299.8 703 h8 M1303.8 699 v8"/>
<path d="M1118.6 687 h8 M1122.6 683 v8"/>
</g>
<rect x="19.5" y="641.5" width="1766" height="201" fill="none" stroke="#fff" stroke-width="1.1"/>
<g stroke="#fff" stroke-width="1.1">
<path d="M19.5 842.5 v5"/>
<path d="M264.78 842.5 v5"/>
<path d="M510.06 842.5 v5"/>
<path d="M755.33 842.5 v5"/>
<path d="M1000.61 842.5 v5"/>
<path d="M1245.89 842.5 v5"/>
<path d="M1491.17 842.5 v5"/>
<path d="M1736.44 842.5 v5"/>
</g>
<g font-family="Liberation Sans, sans-serif" font-size="14" fill="#fff">
<text x="15.08" y="862" textLength="8.84" lengthAdjust="spacingAndGlyphs">0</text>
<text x="255.93" y="862" textLength="17.69" lengthAdjust="spacingAndGlyphs">50</text>
<text x="496.79" y="862" textLength="26.53" lengthAdjust="spacingAndGlyphs">100</text>
<text x="742.07" y="862" textLength="26.53" lengthAdjust="spacingAndGlyphs">150</text>
<text x="987.35" y="862" textLength="26.53" lengthAdjust="spacingAndGlyphs">200</text>
<text x="1232.62" y="862" textLength="26.53" lengthAdjust="spacingAndGlyphs">250</text>
<text x="1477.9" y="862" textLength="26.53" lengthAdjust="spacingAndGlyphs">300</text>
<text x="1723.18" y="862" textLength="26.53" lengthAdjust="spacingAndGlyphs">350</text>
<text x="829.1" y="882.2" textLength="146.8" lengthAdjust="spacingAndGlyphs">Solar longitude (deg)</text>
</g>
</svg></body></html>
